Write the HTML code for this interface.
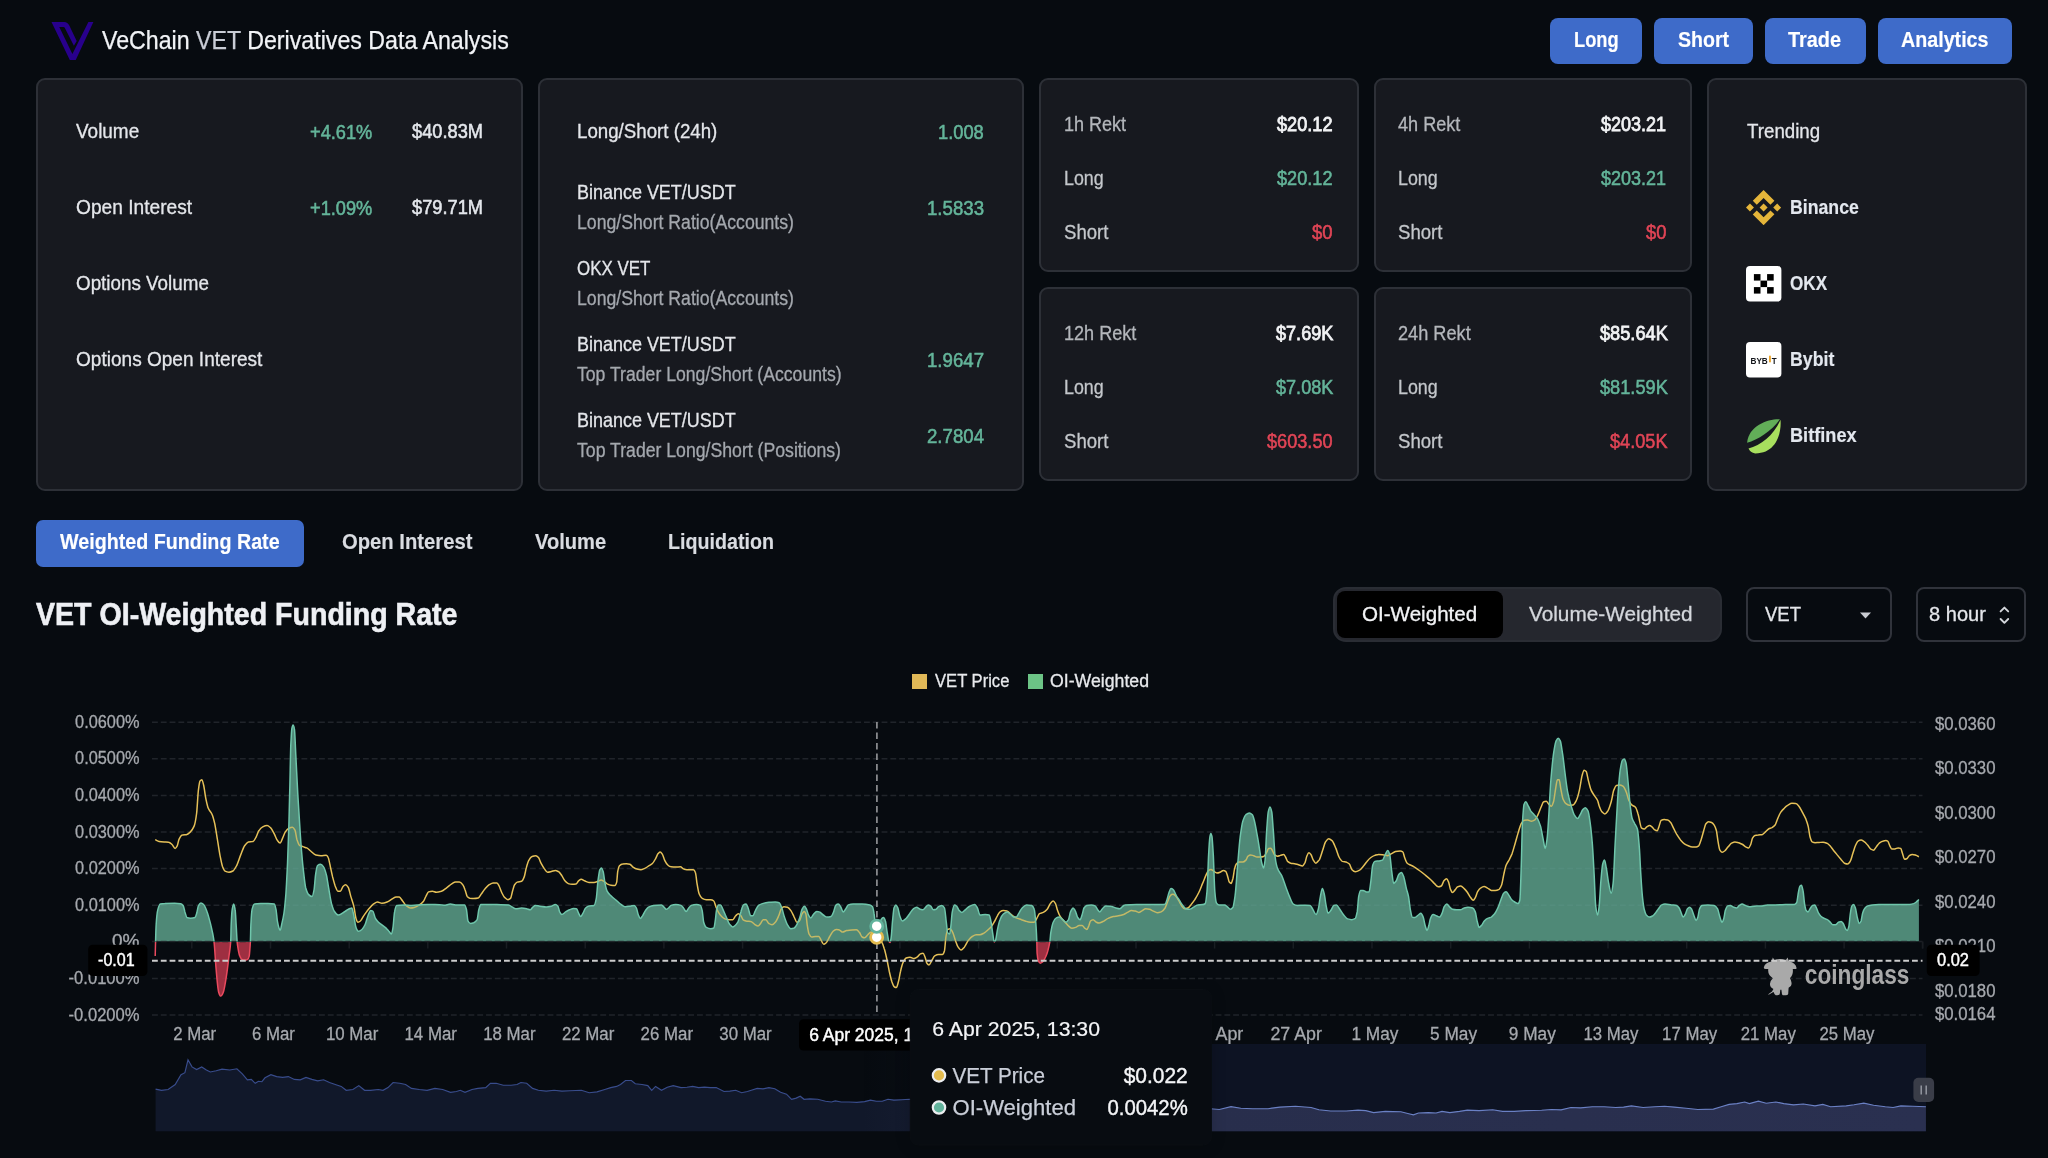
<!DOCTYPE html>
<html lang="en"><head><meta charset="utf-8"><title>VeChain VET Derivatives Data Analysis</title>
<style>
html,body{margin:0;padding:0;background:#070b10}
body{width:2048px;height:1158px;overflow:hidden;background:#070b10;position:relative;font-family:'Liberation Sans',sans-serif;color:#e8eaed}
.t{position:absolute;white-space:pre;line-height:normal;transform-origin:0 0;display:block;margin:0;text-decoration:none}
.card{position:absolute;box-sizing:border-box;background:#17191f;border:2px solid #2d3037;border-radius:9px}
.btn{position:absolute;background:#3e6bc9;border-radius:8px;border:0;padding:0;margin:0;font-family:inherit;display:block}
.seg{position:absolute;background:#25272e;border-radius:13px;box-sizing:border-box;border:2px solid #2a2d34}
.segon{position:absolute;background:#000;border-radius:8px}
.sel{position:absolute;border:2px solid #30333b;border-radius:8px;box-sizing:border-box}
.lg{position:absolute;width:15px;height:14.8px}
.icon{position:absolute}
</style></head><body>
<div id="app" style="position:absolute;left:0;top:0;width:2048px;height:1158px;will-change:transform">
<header>
<svg class="icon" style="left:48px;top:18px" width="50" height="46" viewBox="48 18 50 46"><path fill="#28008c" d="M51.5,22 H64.3 Q67.5,22 69.3,25.5 L76.7,41.1 L73.9,45.8 L64.6,27.6 Q64.2,27.1 63.4,27.1 H59.3 L72.4,54 L88.4,22 H93.4 L75.75,60 H69.8 Z"/></svg>
<h1 class="t" style="margin:0;font-weight:400;left:102.2px;top:26.1px;font-size:25.2px;color:#f1f3f6;-webkit-text-stroke:0.25px;transform:scaleX(0.9205)">VeChain <span style="color:#c9cdd6">VET</span> Derivatives Data Analysis</h1>
<button class="btn" style="left:1550.2px;top:17.7px;width:92.1px;height:46.5px;"><span class="t" style="left:24.1px;top:10.2px;font-size:21.4px;font-weight:700;color:#ffffff;-webkit-text-stroke:0.15px;transform:scaleX(0.8552)">Long</span></button>
<button class="btn" style="left:1654px;top:17.7px;width:99px;height:46.5px;"><span class="t" style="left:24.2px;top:10.2px;font-size:21.4px;font-weight:700;color:#ffffff;-webkit-text-stroke:0.15px;transform:scaleX(0.9148)">Short</span></button>
<button class="btn" style="left:1764.7px;top:17.7px;width:101.2px;height:46.5px;"><span class="t" style="left:23.8px;top:10.2px;font-size:21.4px;font-weight:700;color:#ffffff;-webkit-text-stroke:0.15px;transform:scaleX(0.9303)">Trade</span></button>
<button class="btn" style="left:1877.5px;top:17.7px;width:134.5px;height:46.5px;"><span class="t" style="left:23.3px;top:10.2px;font-size:21.4px;font-weight:700;color:#ffffff;-webkit-text-stroke:0.15px;transform:scaleX(0.9200)">Analytics</span></button>
</header>
<section>
<div class="card" style="left:36px;top:78px;width:486.5px;height:412.5px;"><span class="t" style="left:37.6px;top:39.6px;font-size:20.3px;font-weight:400;color:#e4e6ea;-webkit-text-stroke:0.3px;transform:scaleX(0.9341)">Volume</span><span class="t" style="left:272.0px;top:40.5px;font-size:20.3px;font-weight:400;color:#64b59a;-webkit-text-stroke:0.55px;transform:scaleX(0.8982)">+4.61%</span><span class="t" style="left:373.6px;top:40.0px;font-size:20.3px;font-weight:400;color:#e4e7ec;-webkit-text-stroke:0.55px;transform:scaleX(0.8994)">$40.83M</span><span class="t" style="left:37.6px;top:115.6px;font-size:20.3px;font-weight:400;color:#e4e6ea;-webkit-text-stroke:0.3px;transform:scaleX(0.9447)">Open Interest</span><span class="t" style="left:272.0px;top:116.5px;font-size:20.3px;font-weight:400;color:#64b59a;-webkit-text-stroke:0.55px;transform:scaleX(0.8982)">+1.09%</span><span class="t" style="left:373.6px;top:116.0px;font-size:20.3px;font-weight:400;color:#e4e7ec;-webkit-text-stroke:0.55px;transform:scaleX(0.8994)">$79.71M</span><span class="t" style="left:37.6px;top:191.6px;font-size:20.3px;font-weight:400;color:#e4e6ea;-webkit-text-stroke:0.3px;transform:scaleX(0.9282)">Options Volume</span><span class="t" style="left:37.6px;top:267.6px;font-size:20.3px;font-weight:400;color:#e4e6ea;-webkit-text-stroke:0.3px;transform:scaleX(0.9394)">Options Open Interest</span></div>
<div class="card" style="left:537.5px;top:78px;width:486.5px;height:412.5px;"><span class="t" style="left:37.5px;top:39.6px;font-size:20.3px;font-weight:400;color:#e4e6ea;-webkit-text-stroke:0.3px;transform:scaleX(0.9217)">Long/Short (24h)</span><span class="t" style="left:398.8px;top:40.5px;font-size:20.3px;font-weight:400;color:#64b59a;-webkit-text-stroke:0.55px;transform:scaleX(0.9022)">1.008</span><span class="t" style="left:37.5px;top:100.8px;font-size:20.3px;font-weight:400;color:#e4e6ea;-webkit-text-stroke:0.3px;transform:scaleX(0.8855)">Binance VET/USDT</span><span class="t" style="left:37.5px;top:130.8px;font-size:19.6px;font-weight:400;color:#a4a8ae;-webkit-text-stroke:0.3px;transform:scaleX(0.9015)">Long/Short Ratio(Accounts)</span><span class="t" style="left:387.5px;top:116.5px;font-size:20.3px;font-weight:400;color:#64b59a;-webkit-text-stroke:0.55px;transform:scaleX(0.9187)">1.5833</span><span class="t" style="left:37.5px;top:176.8px;font-size:20.3px;font-weight:400;color:#e4e6ea;-webkit-text-stroke:0.3px;transform:scaleX(0.8348)">OKX VET</span><span class="t" style="left:37.5px;top:206.8px;font-size:19.6px;font-weight:400;color:#a4a8ae;-webkit-text-stroke:0.3px;transform:scaleX(0.9015)">Long/Short Ratio(Accounts)</span><span class="t" style="left:37.5px;top:252.8px;font-size:20.3px;font-weight:400;color:#e4e6ea;-webkit-text-stroke:0.3px;transform:scaleX(0.8855)">Binance VET/USDT</span><span class="t" style="left:37.5px;top:282.8px;font-size:19.6px;font-weight:400;color:#a4a8ae;-webkit-text-stroke:0.3px;transform:scaleX(0.8998)">Top Trader Long/Short (Accounts)</span><span class="t" style="left:387.5px;top:268.5px;font-size:20.3px;font-weight:400;color:#64b59a;-webkit-text-stroke:0.55px;transform:scaleX(0.9187)">1.9647</span><span class="t" style="left:37.5px;top:328.8px;font-size:20.3px;font-weight:400;color:#e4e6ea;-webkit-text-stroke:0.3px;transform:scaleX(0.8855)">Binance VET/USDT</span><span class="t" style="left:37.5px;top:358.8px;font-size:19.6px;font-weight:400;color:#a4a8ae;-webkit-text-stroke:0.3px;transform:scaleX(0.9011)">Top Trader Long/Short (Positions)</span><span class="t" style="left:387.5px;top:344.5px;font-size:20.3px;font-weight:400;color:#64b59a;-webkit-text-stroke:0.55px;transform:scaleX(0.9187)">2.7804</span></div>
<div class="card" style="left:1039px;top:78px;width:319.5px;height:193.7px;"><span class="t" style="left:23.2px;top:32.6px;font-size:20.3px;font-weight:400;color:#b4b7bc;-webkit-text-stroke:0.3px;transform:scaleX(0.8883)">1h Rekt</span><span class="t" style="left:236.3px;top:32.6px;font-size:20.3px;font-weight:400;color:#f2f3f5;-webkit-text-stroke:0.8px;transform:scaleX(0.8945)">$20.12</span><span class="t" style="left:23.2px;top:86.8px;font-size:20.3px;font-weight:400;color:#c4c7cb;-webkit-text-stroke:0.3px;transform:scaleX(0.8798)">Long</span><span class="t" style="left:236.3px;top:86.8px;font-size:20.3px;font-weight:400;color:#64b59a;-webkit-text-stroke:0.55px;transform:scaleX(0.8945)">$20.12</span><span class="t" style="left:23.2px;top:140.9px;font-size:20.3px;font-weight:400;color:#c4c7cb;-webkit-text-stroke:0.3px;transform:scaleX(0.9158)">Short</span><span class="t" style="left:271.2px;top:140.9px;font-size:20.3px;font-weight:400;color:#e14556;-webkit-text-stroke:0.55px;transform:scaleX(0.9130)">$0</span></div>
<div class="card" style="left:1373.5px;top:78px;width:318.7px;height:193.7px;"><span class="t" style="left:22.4px;top:32.6px;font-size:20.3px;font-weight:400;color:#b4b7bc;-webkit-text-stroke:0.3px;transform:scaleX(0.8926)">4h Rekt</span><span class="t" style="left:225.9px;top:32.6px;font-size:20.3px;font-weight:400;color:#f2f3f5;-webkit-text-stroke:0.8px;transform:scaleX(0.8880)">$203.21</span><span class="t" style="left:22.4px;top:86.8px;font-size:20.3px;font-weight:400;color:#c4c7cb;-webkit-text-stroke:0.3px;transform:scaleX(0.8798)">Long</span><span class="t" style="left:225.9px;top:86.8px;font-size:20.3px;font-weight:400;color:#64b59a;-webkit-text-stroke:0.55px;transform:scaleX(0.8880)">$203.21</span><span class="t" style="left:22.4px;top:140.9px;font-size:20.3px;font-weight:400;color:#c4c7cb;-webkit-text-stroke:0.3px;transform:scaleX(0.9158)">Short</span><span class="t" style="left:270.5px;top:140.9px;font-size:20.3px;font-weight:400;color:#e14556;-webkit-text-stroke:0.55px;transform:scaleX(0.9086)">$0</span></div>
<div class="card" style="left:1039px;top:287.4px;width:319.5px;height:193.7px;"><span class="t" style="left:23.2px;top:32.6px;font-size:20.3px;font-weight:400;color:#b4b7bc;-webkit-text-stroke:0.3px;transform:scaleX(0.8918)">12h Rekt</span><span class="t" style="left:234.7px;top:32.6px;font-size:20.3px;font-weight:400;color:#f2f3f5;-webkit-text-stroke:0.8px;transform:scaleX(0.8914)">$7.69K</span><span class="t" style="left:23.2px;top:86.8px;font-size:20.3px;font-weight:400;color:#c4c7cb;-webkit-text-stroke:0.3px;transform:scaleX(0.8798)">Long</span><span class="t" style="left:234.7px;top:86.8px;font-size:20.3px;font-weight:400;color:#64b59a;-webkit-text-stroke:0.55px;transform:scaleX(0.8914)">$7.08K</span><span class="t" style="left:23.2px;top:140.9px;font-size:20.3px;font-weight:400;color:#c4c7cb;-webkit-text-stroke:0.3px;transform:scaleX(0.9158)">Short</span><span class="t" style="left:226.4px;top:140.9px;font-size:20.3px;font-weight:400;color:#e14556;-webkit-text-stroke:0.55px;transform:scaleX(0.8948)">$603.50</span></div>
<div class="card" style="left:1373.5px;top:287.4px;width:318.7px;height:193.7px;"><span class="t" style="left:22.4px;top:32.6px;font-size:20.3px;font-weight:400;color:#b4b7bc;-webkit-text-stroke:0.3px;transform:scaleX(0.8955)">24h Rekt</span><span class="t" style="left:224.2px;top:32.6px;font-size:20.3px;font-weight:400;color:#f2f3f5;-webkit-text-stroke:0.8px;transform:scaleX(0.8973)">$85.64K</span><span class="t" style="left:22.4px;top:86.8px;font-size:20.3px;font-weight:400;color:#c4c7cb;-webkit-text-stroke:0.3px;transform:scaleX(0.8798)">Long</span><span class="t" style="left:224.2px;top:86.8px;font-size:20.3px;font-weight:400;color:#64b59a;-webkit-text-stroke:0.55px;transform:scaleX(0.8973)">$81.59K</span><span class="t" style="left:22.4px;top:140.9px;font-size:20.3px;font-weight:400;color:#c4c7cb;-webkit-text-stroke:0.3px;transform:scaleX(0.9158)">Short</span><span class="t" style="left:234.5px;top:140.9px;font-size:20.3px;font-weight:400;color:#e14556;-webkit-text-stroke:0.55px;transform:scaleX(0.8945)">$4.05K</span></div>
<div class="card" style="left:1707.3px;top:78px;width:319.6px;height:412.5px;"><span class="t" style="left:37.5px;top:39.6px;font-size:20.3px;font-weight:400;color:#e4e6ea;-webkit-text-stroke:0.3px;transform:scaleX(0.9231)">Trending</span><span class="t" style="left:80.4px;top:115.8px;font-size:19.8px;font-weight:700;color:#e3e7ee;-webkit-text-stroke:0.15px;transform:scaleX(0.8941)">Binance</span><span class="t" style="left:80.4px;top:191.9px;font-size:19.8px;font-weight:700;color:#e3e7ee;-webkit-text-stroke:0.15px;transform:scaleX(0.8653)">OKX</span><span class="t" style="left:80.4px;top:268.0px;font-size:19.8px;font-weight:700;color:#e3e7ee;-webkit-text-stroke:0.15px;transform:scaleX(0.8958)">Bybit</span><span class="t" style="left:80.4px;top:343.8px;font-size:19.8px;font-weight:700;color:#e3e7ee;-webkit-text-stroke:0.15px;transform:scaleX(0.9180)">Bitfinex</span><svg class="icon" style="left:36.9px;top:110.1px" width="35.2" height="35.2" viewBox="0 0 126.61 126.61"><path fill="#e5b53a" d="M38.73 53.2l24.59-24.58 24.6 24.6 14.3-14.31L63.32 0 24.43 38.9zM0 63.31l14.3-14.31 14.31 14.31-14.31 14.3zM38.73 73.41l24.59 24.59 24.6-24.6 14.31 14.29-38.9 38.91-38.91-38.88zM98 63.31l14.3-14.31 14.31 14.3-14.31 14.32zM77.83 63.3L63.32 48.78 52.59 59.51l-1.24 1.23-2.54 2.54 14.51 14.5 14.51-14.47z"/></svg><svg class="icon" style="left:36.9px;top:186.2px" width="35.4" height="35.6" viewBox="0 0 35.4 35.6"><rect width="35.4" height="35.6" rx="4" fill="#fff"/><g fill="#000"><rect x="7.9" y="8.1" width="6.6" height="6.5"/><rect x="21.1" y="8.1" width="6.6" height="6.5"/><rect x="14.5" y="14.6" width="6.6" height="6.5"/><rect x="7.9" y="21.1" width="6.6" height="6.5"/><rect x="21.1" y="21.1" width="6.6" height="6.5"/></g></svg><svg class="icon" style="left:36.9px;top:262.3px" width="35.4" height="35.4" viewBox="0 0 35.4 35.4" font-family="'Liberation Sans',sans-serif"><rect width="35.4" height="35.4" rx="4" fill="#fff"/><text x="4.5" y="22.3" font-size="9.9" font-weight="700" fill="#121419" textLength="17.3" lengthAdjust="spacingAndGlyphs">BYB</text><rect x="23" y="13.7" width="1.9" height="6.6" fill="#eba52c"/><text x="25.7" y="22.3" font-size="9.9" font-weight="700" fill="#121419" textLength="4.9" lengthAdjust="spacingAndGlyphs">T</text></svg><svg class="icon" style="left:35.7px;top:337.0px" width="38" height="39" viewBox="1745 417 38 39"><path fill="#62ae58" d="M1779.9,419.3 C1768.7,418.7 1748.5,425.4 1747.1,442.8 C1757.5,440 1772,431 1779.9,419.3Z"/><path fill="#a8df5e" d="M1780.5,419.8 C1781.6,431 1777.7,453.5 1755.2,453.5 C1751.8,452.9 1749.6,450.7 1748.5,448.4 C1760.8,445.6 1774.3,434.4 1780.5,419.8Z"/></svg></div>
</section>
<nav>
<button class="btn" style="left:36px;top:519.5px;width:267.6px;height:47px;border-radius:7px"><span class="t" style="left:23.8px;top:10.8px;font-size:21.2px;font-weight:700;color:#ffffff;-webkit-text-stroke:0.15px;transform:scaleX(0.9298)">Weighted Funding Rate</span></button>
<a class="t" style="left:341.9px;top:530.3px;font-size:21.2px;font-weight:700;color:#d9dce1;-webkit-text-stroke:0.15px;transform:scaleX(0.9548)">Open Interest</a>
<a class="t" style="left:534.8px;top:530.3px;font-size:21.2px;font-weight:700;color:#d9dce1;-webkit-text-stroke:0.15px;transform:scaleX(0.9499)">Volume</a>
<a class="t" style="left:668.4px;top:530.3px;font-size:21.2px;font-weight:700;color:#d9dce1;-webkit-text-stroke:0.15px;transform:scaleX(0.9277)">Liquidation</a>
</nav>
<main>
<h2 class="t" style="left:36.4px;top:597.2px;font-size:31.4px;font-weight:700;color:#eef0f4;-webkit-text-stroke:0.6px;transform:scaleX(0.9098)">VET OI-Weighted Funding Rate</h2>
<div class="seg" style="left:1333.2px;top:586.7px;width:389.2px;height:55.8px;"><span class="t" style="left:193.5px;top:13.5px;font-size:21px;font-weight:400;color:#d4d7dc;-webkit-text-stroke:0.3px;transform:scaleX(0.9887)">Volume-Weighted</span></div>
<div class="segon" style="left:1337px;top:591.4px;width:166.4px;height:46.9px;"><span class="t" style="left:25.3px;top:10.8px;font-size:21px;font-weight:400;color:#f2f3f5;-webkit-text-stroke:0.3px;transform:scaleX(0.9804)">OI-Weighted</span></div>
<div class="sel" style="left:1746.2px;top:587.4px;width:145.4px;height:54.4px;"><span class="t" style="left:16.8px;top:12.8px;font-size:21px;font-weight:400;color:#e4e6ea;-webkit-text-stroke:0.3px;transform:scaleX(0.8814)">VET</span><svg class="icon" style="left:109.8px;top:20.6px" width="16" height="10" viewBox="0 0 16 10"><path d="M2,2.6 H13 L7.5,8.4Z" fill="#c9ccd2"/></svg></div>
<div class="sel" style="left:1916.2px;top:587.4px;width:110.2px;height:54.4px;"><span class="t" style="left:11.1px;top:12.8px;font-size:21px;font-weight:400;color:#e4e6ea;-webkit-text-stroke:0.3px;transform:scaleX(0.9555)">8 hour</span><svg class="icon" style="left:78.8px;top:14.6px" width="15" height="23" viewBox="0 0 15 23"><path d="M3.6,7.4 L7.4,3.6 L11.2,7.4 M3.6,15 L7.4,18.8 L11.2,15" fill="none" stroke="#d4d7dc" stroke-width="1.9" stroke-linecap="round" stroke-linejoin="round"/></svg></div>
<div class="lg" style="left:912.2px;top:674px;background:#e0b857"></div><span class="t" style="left:934.5px;top:670.2px;font-size:18.8px;font-weight:400;color:#e8eaed;-webkit-text-stroke:0.3px;transform:scaleX(0.8836)">VET Price</span><div class="lg" style="left:1028px;top:674px;background:#6cc486"></div><span class="t" style="left:1050.2px;top:670.2px;font-size:18.8px;font-weight:400;color:#e8eaed;-webkit-text-stroke:0.3px;transform:scaleX(0.9420)">OI-Weighted</span>
<svg id="chart" width="2048" height="1158" viewBox="0 0 2048 1158" style="position:absolute;left:0;top:0" font-family="'Liberation Sans',sans-serif">
<defs><clipPath id="cu"><rect x="0" y="700" width="2048" height="241.60000000000002"/></clipPath><clipPath id="cd"><rect x="0" y="942.0" width="2048" height="120"/></clipPath><linearGradient id="fg" gradientUnits="userSpaceOnUse" x1="155.5" x2="1926" y1="0" y2="0"><stop offset="0" stop-color="#0d1323" stop-opacity="0"/><stop offset="0.40" stop-color="#0d1323" stop-opacity="0"/><stop offset="0.596" stop-color="#0d1323" stop-opacity="1"/><stop offset="1" stop-color="#0d1323" stop-opacity="1"/></linearGradient><linearGradient id="fa" gradientUnits="userSpaceOnUse" x1="155.5" x2="1926" y1="0" y2="0"><stop offset="0" stop-color="#11182a"/><stop offset="0.40" stop-color="#11182a"/><stop offset="0.596" stop-color="#282e4c"/><stop offset="1" stop-color="#2a3050"/></linearGradient><linearGradient id="fl" gradientUnits="userSpaceOnUse" x1="155.5" x2="1926" y1="0" y2="0"><stop offset="0" stop-color="#384c8c"/><stop offset="0.40" stop-color="#384c8c"/><stop offset="0.596" stop-color="#6a80c4"/><stop offset="1" stop-color="#6a80c4"/></linearGradient><filter id="sh" x="-10%" y="-20%" width="120%" height="140%"><feGaussianBlur stdDeviation="8"/></filter></defs>
<line x1="152" x2="1922.5" y1="722.2" y2="722.2" stroke="#20242a" stroke-width="1.5" stroke-dasharray="5.86 2.93"/>
<line x1="152" x2="1922.5" y1="758.8" y2="758.8" stroke="#20242a" stroke-width="1.5" stroke-dasharray="5.86 2.93"/>
<line x1="152" x2="1922.5" y1="795.4" y2="795.4" stroke="#20242a" stroke-width="1.5" stroke-dasharray="5.86 2.93"/>
<line x1="152" x2="1922.5" y1="832.0" y2="832.0" stroke="#20242a" stroke-width="1.5" stroke-dasharray="5.86 2.93"/>
<line x1="152" x2="1922.5" y1="868.6" y2="868.6" stroke="#20242a" stroke-width="1.5" stroke-dasharray="5.86 2.93"/>
<line x1="152" x2="1922.5" y1="905.2" y2="905.2" stroke="#20242a" stroke-width="1.5" stroke-dasharray="5.86 2.93"/>
<line x1="152" x2="1922.5" y1="978.4" y2="978.4" stroke="#20242a" stroke-width="1.5" stroke-dasharray="5.86 2.93"/>
<line x1="152" x2="1922.5" y1="1015.0" y2="1015.0" stroke="#20242a" stroke-width="1.5" stroke-dasharray="5.86 2.93"/>
<text x="139.5" y="727.8" text-anchor="end" font-size="18.3" stroke="#a6a9ae" stroke-width="0.3" fill="#a6a9ae" textLength="64.4" lengthAdjust="spacingAndGlyphs">0.0600%</text>
<text x="139.5" y="764.4" text-anchor="end" font-size="18.3" stroke="#a6a9ae" stroke-width="0.3" fill="#a6a9ae" textLength="64.4" lengthAdjust="spacingAndGlyphs">0.0500%</text>
<text x="139.5" y="801.0" text-anchor="end" font-size="18.3" stroke="#a6a9ae" stroke-width="0.3" fill="#a6a9ae" textLength="64.4" lengthAdjust="spacingAndGlyphs">0.0400%</text>
<text x="139.5" y="837.6" text-anchor="end" font-size="18.3" stroke="#a6a9ae" stroke-width="0.3" fill="#a6a9ae" textLength="64.4" lengthAdjust="spacingAndGlyphs">0.0300%</text>
<text x="139.5" y="874.2" text-anchor="end" font-size="18.3" stroke="#a6a9ae" stroke-width="0.3" fill="#a6a9ae" textLength="64.4" lengthAdjust="spacingAndGlyphs">0.0200%</text>
<text x="139.5" y="910.8" text-anchor="end" font-size="18.3" stroke="#a6a9ae" stroke-width="0.3" fill="#a6a9ae" textLength="64.4" lengthAdjust="spacingAndGlyphs">0.0100%</text>
<text x="139.5" y="947.4" text-anchor="end" font-size="18.3" stroke="#a6a9ae" stroke-width="0.3" fill="#a6a9ae" textLength="27.5" lengthAdjust="spacingAndGlyphs">0%</text>
<text x="139.5" y="984.0" text-anchor="end" font-size="18.3" stroke="#a6a9ae" stroke-width="0.3" fill="#a6a9ae" textLength="70.9" lengthAdjust="spacingAndGlyphs">-0.0100%</text>
<text x="139.5" y="1020.6" text-anchor="end" font-size="18.3" stroke="#a6a9ae" stroke-width="0.3" fill="#a6a9ae" textLength="70.9" lengthAdjust="spacingAndGlyphs">-0.0200%</text>
<text x="1934.9" y="729.7" font-size="18.3" fill="#a6a9ae" stroke="#a6a9ae" stroke-width="0.3" textLength="60.6" lengthAdjust="spacingAndGlyphs">$0.0360</text>
<text x="1934.9" y="774.2" font-size="18.3" fill="#a6a9ae" stroke="#a6a9ae" stroke-width="0.3" textLength="60.6" lengthAdjust="spacingAndGlyphs">$0.0330</text>
<text x="1934.9" y="818.7" font-size="18.3" fill="#a6a9ae" stroke="#a6a9ae" stroke-width="0.3" textLength="60.6" lengthAdjust="spacingAndGlyphs">$0.0300</text>
<text x="1934.9" y="863.2" font-size="18.3" fill="#a6a9ae" stroke="#a6a9ae" stroke-width="0.3" textLength="60.6" lengthAdjust="spacingAndGlyphs">$0.0270</text>
<text x="1934.9" y="907.7" font-size="18.3" fill="#a6a9ae" stroke="#a6a9ae" stroke-width="0.3" textLength="60.6" lengthAdjust="spacingAndGlyphs">$0.0240</text>
<text x="1934.9" y="952.2" font-size="18.3" fill="#a6a9ae" stroke="#a6a9ae" stroke-width="0.3" textLength="60.6" lengthAdjust="spacingAndGlyphs">$0.0210</text>
<text x="1934.9" y="996.7" font-size="18.3" fill="#a6a9ae" stroke="#a6a9ae" stroke-width="0.3" textLength="60.6" lengthAdjust="spacingAndGlyphs">$0.0180</text>
<text x="1934.9" y="1020.4" font-size="18.3" fill="#a6a9ae" stroke="#a6a9ae" stroke-width="0.3" textLength="60.6" lengthAdjust="spacingAndGlyphs">$0.0164</text>
<text x="194.7" y="1040.4" text-anchor="middle" font-size="18.3" fill="#a6a9ae" stroke="#a6a9ae" stroke-width="0.3" textLength="43" lengthAdjust="spacingAndGlyphs">2 Mar</text>
<text x="273.4" y="1040.4" text-anchor="middle" font-size="18.3" fill="#a6a9ae" stroke="#a6a9ae" stroke-width="0.3" textLength="43" lengthAdjust="spacingAndGlyphs">6 Mar</text>
<text x="352.1" y="1040.4" text-anchor="middle" font-size="18.3" fill="#a6a9ae" stroke="#a6a9ae" stroke-width="0.3" textLength="52.4" lengthAdjust="spacingAndGlyphs">10 Mar</text>
<text x="430.7" y="1040.4" text-anchor="middle" font-size="18.3" fill="#a6a9ae" stroke="#a6a9ae" stroke-width="0.3" textLength="52.4" lengthAdjust="spacingAndGlyphs">14 Mar</text>
<text x="509.4" y="1040.4" text-anchor="middle" font-size="18.3" fill="#a6a9ae" stroke="#a6a9ae" stroke-width="0.3" textLength="52.4" lengthAdjust="spacingAndGlyphs">18 Mar</text>
<text x="588.1" y="1040.4" text-anchor="middle" font-size="18.3" fill="#a6a9ae" stroke="#a6a9ae" stroke-width="0.3" textLength="52.4" lengthAdjust="spacingAndGlyphs">22 Mar</text>
<text x="666.8" y="1040.4" text-anchor="middle" font-size="18.3" fill="#a6a9ae" stroke="#a6a9ae" stroke-width="0.3" textLength="52.4" lengthAdjust="spacingAndGlyphs">26 Mar</text>
<text x="745.5" y="1040.4" text-anchor="middle" font-size="18.3" fill="#a6a9ae" stroke="#a6a9ae" stroke-width="0.3" textLength="52.4" lengthAdjust="spacingAndGlyphs">30 Mar</text>
<text x="824.1" y="1040.4" text-anchor="middle" font-size="18.3" fill="#a6a9ae" stroke="#a6a9ae" stroke-width="0.3" textLength="42" lengthAdjust="spacingAndGlyphs">3 Apr</text>
<text x="902.8" y="1040.4" text-anchor="middle" font-size="18.3" fill="#a6a9ae" stroke="#a6a9ae" stroke-width="0.3" textLength="42" lengthAdjust="spacingAndGlyphs">7 Apr</text>
<text x="981.5" y="1040.4" text-anchor="middle" font-size="18.3" fill="#a6a9ae" stroke="#a6a9ae" stroke-width="0.3" textLength="51.5" lengthAdjust="spacingAndGlyphs">11 Apr</text>
<text x="1060.2" y="1040.4" text-anchor="middle" font-size="18.3" fill="#a6a9ae" stroke="#a6a9ae" stroke-width="0.3" textLength="51.5" lengthAdjust="spacingAndGlyphs">15 Apr</text>
<text x="1138.9" y="1040.4" text-anchor="middle" font-size="18.3" fill="#a6a9ae" stroke="#a6a9ae" stroke-width="0.3" textLength="51.5" lengthAdjust="spacingAndGlyphs">19 Apr</text>
<text x="1217.5" y="1040.4" text-anchor="middle" font-size="18.3" fill="#a6a9ae" stroke="#a6a9ae" stroke-width="0.3" textLength="51.5" lengthAdjust="spacingAndGlyphs">23 Apr</text>
<text x="1296.2" y="1040.4" text-anchor="middle" font-size="18.3" fill="#a6a9ae" stroke="#a6a9ae" stroke-width="0.3" textLength="51.5" lengthAdjust="spacingAndGlyphs">27 Apr</text>
<text x="1374.9" y="1040.4" text-anchor="middle" font-size="18.3" fill="#a6a9ae" stroke="#a6a9ae" stroke-width="0.3" textLength="47" lengthAdjust="spacingAndGlyphs">1 May</text>
<text x="1453.6" y="1040.4" text-anchor="middle" font-size="18.3" fill="#a6a9ae" stroke="#a6a9ae" stroke-width="0.3" textLength="47" lengthAdjust="spacingAndGlyphs">5 May</text>
<text x="1532.3" y="1040.4" text-anchor="middle" font-size="18.3" fill="#a6a9ae" stroke="#a6a9ae" stroke-width="0.3" textLength="47" lengthAdjust="spacingAndGlyphs">9 May</text>
<text x="1610.9" y="1040.4" text-anchor="middle" font-size="18.3" fill="#a6a9ae" stroke="#a6a9ae" stroke-width="0.3" textLength="55" lengthAdjust="spacingAndGlyphs">13 May</text>
<text x="1689.6" y="1040.4" text-anchor="middle" font-size="18.3" fill="#a6a9ae" stroke="#a6a9ae" stroke-width="0.3" textLength="55" lengthAdjust="spacingAndGlyphs">17 May</text>
<text x="1768.3" y="1040.4" text-anchor="middle" font-size="18.3" fill="#a6a9ae" stroke="#a6a9ae" stroke-width="0.3" textLength="55" lengthAdjust="spacingAndGlyphs">21 May</text>
<text x="1847.0" y="1040.4" text-anchor="middle" font-size="18.3" fill="#a6a9ae" stroke="#a6a9ae" stroke-width="0.3" textLength="55" lengthAdjust="spacingAndGlyphs">25 May</text>
<g clip-path="url(#cu)"><path d="M155.2,955.9C155.5,945.3 155.8,928.8 156.2,924.1C156.7,915.9 157.3,911.5 157.9,909.4C158.7,906.4 159.5,904.2 160.3,904.0C161.8,903.6 163.3,903.5 164.8,903.5C168.0,903.3 171.3,903.2 174.6,903.2C176.7,903.2 178.7,903.4 180.8,903.7C181.6,903.9 182.4,904.6 183.2,905.7C183.8,906.5 184.4,910.0 184.9,911.9C185.6,913.9 186.3,917.2 186.9,917.5C188.1,918.0 189.4,918.2 190.6,918.2C192.1,918.2 193.6,918.0 195.0,917.5C195.6,917.3 196.2,914.9 196.8,913.1C197.3,911.2 197.9,906.7 198.5,905.7C199.3,904.2 200.1,903.0 200.9,903.0C201.8,903.0 202.7,903.7 203.6,904.5C204.8,905.4 205.9,908.8 207.1,911.9C208.2,914.7 209.2,918.7 210.3,922.9C211.1,926.1 211.9,929.7 212.8,934.0C213.2,936.1 213.6,938.1 214.0,941.4C214.7,946.9 215.4,961.4 216.1,968.9C216.9,978.2 217.8,989.6 218.7,992.2C219.3,994.3 220.0,996.1 220.7,996.1C221.6,996.1 222.5,994.2 223.3,992.2C224.4,989.6 225.6,981.3 226.7,974.1C227.5,969.1 228.2,962.3 229.0,955.9C229.6,951.3 230.1,950.1 230.7,941.4C230.9,938.8 231.0,927.7 231.2,924.1C231.5,916.9 231.9,911.4 232.2,909.4C232.7,906.4 233.2,904.0 233.7,904.0C234.2,904.0 234.6,906.4 235.1,909.4C235.5,911.4 235.8,918.9 236.1,924.1C236.5,929.5 236.8,937.9 237.1,941.4C237.4,944.8 237.8,946.8 238.1,948.8C238.6,951.6 239.1,954.4 239.6,955.6C240.2,957.4 240.9,958.7 241.5,959.1C242.6,959.7 243.7,960.1 244.7,960.1C245.7,960.1 246.7,959.8 247.7,959.3C248.2,959.1 248.7,958.0 249.2,956.1C249.4,955.2 249.7,951.8 249.9,948.8C250.1,946.8 250.2,944.8 250.4,941.4C250.6,937.9 250.7,927.3 250.9,924.1C251.3,916.3 251.7,911.0 252.1,909.4C252.9,906.1 253.8,904.1 254.6,904.0C256.6,903.6 258.7,903.5 260.7,903.5C263.2,903.5 265.7,903.5 268.1,903.5C270.2,903.5 272.2,903.6 274.3,904.0C274.8,904.1 275.4,906.7 276.0,909.4C276.5,911.7 277.0,919.2 277.5,921.7C278.2,925.5 278.9,928.8 279.7,929.6C279.9,929.8 280.1,930.0 280.3,930.0C280.8,930.0 281.4,925.8 281.9,923.4C282.6,920.5 283.2,917.9 283.9,913.5C284.6,909.1 285.2,902.4 285.9,893.7C286.4,886.7 286.9,875.9 287.5,863.9C287.9,853.3 288.4,839.8 288.9,824.2C289.2,813.1 289.5,797.7 289.9,784.5C290.2,771.2 290.5,752.3 290.8,744.8C291.2,737.2 291.5,730.8 291.8,728.9C292.2,726.7 292.6,724.9 293.0,724.9C293.5,724.9 294.0,726.6 294.4,728.9C294.9,731.2 295.3,745.8 295.8,754.7C296.5,767.4 297.1,782.7 297.8,794.4C298.5,806.2 299.1,816.3 299.8,826.2C300.4,836.0 301.1,846.3 301.8,854.0C302.4,861.7 303.1,868.3 303.8,873.8C304.4,879.2 305.1,885.3 305.7,887.7C306.7,891.3 307.7,893.7 308.7,894.6C309.8,895.7 311.0,896.6 312.1,896.6C312.7,896.6 313.4,893.2 314.1,889.7C314.6,886.9 315.1,877.0 315.7,873.8C316.3,869.8 317.0,866.0 317.6,865.5C318.6,864.7 319.6,864.3 320.6,864.3C321.6,864.3 322.6,865.5 323.6,866.9C324.6,868.2 325.6,871.7 326.6,875.8C327.2,878.5 327.9,884.0 328.6,887.7C329.6,893.3 330.5,900.1 331.5,903.6C332.5,907.1 333.5,910.2 334.5,911.5C335.8,913.4 337.2,915.1 338.5,915.1C339.8,915.1 341.1,913.9 342.5,913.1C343.8,912.4 345.1,911.3 346.4,910.5C347.6,909.8 348.8,909.0 350.0,908.5C350.6,908.3 351.2,908.0 351.8,908.0C352.4,908.0 353.0,911.9 353.6,914.5C354.4,917.8 355.2,925.6 356.0,927.4C356.8,929.5 357.7,931.3 358.6,931.3C359.7,931.3 360.8,930.4 361.9,929.5C363.0,928.7 364.0,926.9 365.0,924.8C366.1,922.6 367.3,916.9 368.4,914.5C369.2,912.8 369.9,910.6 370.7,910.6C371.4,910.6 372.1,910.8 372.8,911.1C373.7,911.5 374.5,916.9 375.4,918.4C376.4,920.2 377.5,921.3 378.5,922.2C379.6,923.3 380.7,924.0 381.9,924.8C383.0,925.7 384.1,926.5 385.2,927.4C386.3,928.3 387.3,929.5 388.3,930.5C389.4,931.6 390.4,933.9 391.4,933.9C392.0,933.9 392.5,930.5 393.0,927.4C393.5,924.4 394.0,914.4 394.6,911.9C395.2,908.5 395.9,905.5 396.6,905.4C399.2,905.0 401.8,904.9 404.4,904.9C406.8,904.9 409.2,905.4 411.7,905.4C414.2,905.4 416.8,905.1 419.4,904.9C422.0,904.7 424.6,904.4 427.2,904.4C429.8,904.4 432.4,904.4 435.0,904.4C438.0,904.4 441.0,905.2 444.0,905.2C446.1,905.2 448.3,904.1 450.4,904.1C452.1,904.1 453.8,904.9 455.5,904.9C458.6,904.9 461.6,904.9 464.6,904.9C465.2,904.9 465.8,907.1 466.4,909.3C466.9,911.2 467.5,920.0 468.0,921.0C468.8,922.6 469.7,923.5 470.6,923.5C471.6,923.5 472.6,923.2 473.7,922.8C474.8,922.3 475.9,921.6 477.1,919.7C477.7,918.6 478.3,911.3 478.9,909.3C479.6,907.0 480.2,904.7 480.9,904.6C482.8,904.4 484.7,904.4 486.6,904.4C490.1,904.4 493.5,904.6 497.0,904.6C500.9,904.7 504.8,904.7 508.6,904.9C509.9,905.0 511.2,906.5 512.5,907.2C513.6,907.8 514.6,908.8 515.6,908.8C517.6,908.8 519.6,908.0 521.6,908.0C523.3,908.0 525.1,908.4 526.8,908.8C527.9,909.0 529.0,909.8 530.2,909.8C531.0,909.8 531.9,907.9 532.8,907.2C533.6,906.5 534.5,905.4 535.3,905.4C536.8,905.4 538.3,906.0 539.7,906.2C541.9,906.5 544.1,907.0 546.2,907.0C547.9,907.0 549.7,906.6 551.4,906.2C552.7,905.9 554.0,904.6 555.3,904.6C556.1,904.6 557.0,905.3 557.9,906.2C558.5,906.8 559.1,910.8 559.7,911.9C560.4,913.1 561.1,914.5 561.8,914.5C563.1,914.5 564.4,912.7 565.6,911.9C566.9,911.1 568.2,910.4 569.5,909.8C570.8,909.3 572.1,908.5 573.4,908.5C574.5,908.5 575.5,908.6 576.5,908.8C577.2,908.9 577.9,911.9 578.6,913.2C579.3,914.5 580.0,916.5 580.7,916.5C581.4,916.5 582.2,914.5 583.0,913.2C583.9,911.8 584.7,908.8 585.6,908.0C586.7,906.9 587.8,906.1 589.0,905.9C590.7,905.6 592.4,905.8 594.1,905.4C594.8,905.3 595.5,902.3 596.2,898.9C596.8,896.0 597.4,885.3 598.0,880.8C598.6,876.3 599.2,871.2 599.8,869.9C600.4,868.8 600.9,867.9 601.4,867.9C602.0,867.9 602.6,869.8 603.2,871.7C603.8,873.7 604.4,880.5 605.0,883.4C605.7,886.7 606.4,889.8 607.1,891.2C608.4,893.7 609.7,894.5 611.0,895.8C612.7,897.6 614.4,898.8 616.2,900.2C617.9,901.7 619.6,903.5 621.4,904.6C622.6,905.5 623.9,906.7 625.2,906.7C627.0,906.7 628.7,906.4 630.4,906.2C631.7,906.0 633.0,905.4 634.3,905.4C635.0,905.4 635.7,906.7 636.4,908.0C637.0,909.1 637.6,913.0 638.2,914.5C638.9,916.2 639.6,918.4 640.3,918.4C641.0,918.4 641.8,916.8 642.6,915.8C643.5,914.5 644.5,911.9 645.4,910.6C646.5,909.2 647.5,907.8 648.5,907.2C650.3,906.3 652.0,905.6 653.7,905.4C656.3,905.1 658.9,904.9 661.5,904.9C662.4,904.9 663.2,906.4 664.1,907.2C664.8,907.9 665.5,909.3 666.2,909.3C666.9,909.3 667.7,908.6 668.5,908.0C669.4,907.4 670.2,905.7 671.1,905.4C672.6,904.9 674.2,904.6 675.8,904.6C677.5,904.6 679.2,904.9 680.9,905.4C681.8,905.7 682.7,907.0 683.5,908.0C684.4,909.0 685.2,911.4 686.1,911.4C687.0,911.4 687.8,909.0 688.7,908.0C689.6,907.0 690.4,905.7 691.3,905.4C693.0,904.9 694.8,904.6 696.5,904.6C697.8,904.6 699.1,904.9 700.4,905.4C701.0,905.7 701.6,908.1 702.2,910.6C702.7,912.8 703.2,920.5 703.7,922.2C704.6,925.1 705.5,927.0 706.3,927.4C707.8,928.2 709.3,928.7 710.7,928.7C711.8,928.7 712.8,928.5 713.8,928.0C714.4,927.7 714.9,923.0 715.4,919.7C715.8,916.9 716.2,910.9 716.7,909.3C717.3,907.0 717.9,904.9 718.5,904.9C719.2,904.9 719.9,904.9 720.6,904.9C721.3,904.9 722.1,907.7 722.9,909.3C724.0,911.6 725.1,914.6 726.3,917.1C727.4,919.6 728.5,923.0 729.6,924.3C730.7,925.6 731.7,926.9 732.8,926.9C734.4,926.9 736.1,924.8 737.8,922.2C738.8,920.7 739.8,915.0 740.9,911.9C741.7,909.3 742.6,905.4 743.5,904.9C744.3,904.4 745.2,904.1 746.1,904.1C746.8,904.1 747.4,906.4 748.1,908.0C749.0,910.0 749.9,915.8 750.7,915.8C751.4,915.8 752.1,915.8 752.8,915.8C753.7,915.8 754.5,912.2 755.4,910.6C756.4,908.7 757.5,906.2 758.5,905.4C759.8,904.4 761.1,904.0 762.4,903.6C764.5,903.0 766.7,902.5 768.9,902.3C771.0,902.2 773.2,902.0 775.3,902.0C776.6,902.0 777.9,902.3 779.2,902.8C780.1,903.1 780.9,905.8 781.8,908.0C782.7,910.2 783.5,914.5 784.4,917.1C785.4,920.1 786.5,923.2 787.5,924.8C788.6,926.6 789.8,928.7 790.9,928.7C792.0,928.7 793.1,928.4 794.2,928.0C795.3,927.5 796.3,925.4 797.4,923.5C798.2,922.0 799.1,919.7 800.0,917.1C800.6,915.0 801.3,910.7 802.0,909.3C802.8,907.8 803.6,906.2 804.4,906.2C805.0,906.2 805.7,907.6 806.4,908.8C807.1,910.0 807.8,913.8 808.5,915.0C809.3,916.4 810.1,917.9 810.8,917.9C811.7,917.9 812.6,915.4 813.4,914.5C814.5,913.3 815.7,911.4 816.8,911.4C817.7,911.4 818.5,911.6 819.4,911.9C820.7,912.3 822.0,914.2 823.3,915.0C824.6,915.8 825.9,917.1 827.1,917.1C828.4,917.1 829.7,916.9 831.0,916.5C831.9,916.3 832.8,913.9 833.6,911.9C834.3,910.3 835.0,906.0 835.7,905.4C836.6,904.6 837.4,904.1 838.3,904.1C839.2,904.1 840.0,905.9 840.9,907.2C841.7,908.4 842.4,911.9 843.2,911.9C844.1,911.9 844.9,909.9 845.8,908.8C846.7,907.6 847.5,905.2 848.4,904.9C849.9,904.4 851.5,904.1 853.1,904.1C856.1,904.1 859.1,904.1 862.1,904.1C864.7,904.1 867.3,904.4 869.9,904.9C870.8,905.1 871.6,905.6 872.5,906.7C873.0,907.4 873.5,910.2 874.0,913.2C874.4,915.2 874.7,920.8 875.1,922.2C875.6,924.3 876.1,926.1 876.6,926.1C877.4,926.1 878.2,925.6 879.0,924.8C879.7,924.2 880.3,920.6 881.0,919.7C881.8,918.6 882.6,917.6 883.4,917.6C884.1,917.6 884.8,919.1 885.4,921.0C886.0,922.5 886.6,929.1 887.2,932.6C887.8,935.7 888.3,940.3 888.8,941.2C889.2,941.9 889.7,942.5 890.1,942.5C890.4,942.5 890.8,940.0 891.1,937.8C891.6,935.0 892.0,926.8 892.4,922.2C893.0,916.9 893.5,909.5 894.0,908.0C894.6,906.2 895.2,904.9 895.8,904.9C896.5,904.9 897.2,906.5 897.9,908.0C898.5,909.4 899.1,914.1 899.7,915.8C900.6,918.2 901.4,921.0 902.3,921.0C903.6,921.0 904.9,919.5 906.2,918.4C907.5,917.2 908.8,914.9 910.0,913.2C911.2,911.7 912.3,909.6 913.4,908.8C914.5,908.0 915.5,907.2 916.5,907.2C917.8,907.2 919.1,908.9 920.4,909.3C921.3,909.5 922.1,909.8 923.0,909.8C923.9,909.8 924.7,908.0 925.6,907.2C926.5,906.4 927.3,904.9 928.2,904.9C929.1,904.9 929.9,905.6 930.8,906.2C931.6,906.8 932.5,909.8 933.4,909.8C934.2,909.8 935.1,909.6 936.0,909.3C936.8,909.0 937.7,907.2 938.5,906.7C939.7,906.1 940.8,905.4 941.9,905.4C942.8,905.4 943.6,906.4 944.5,908.0C945.1,909.1 945.7,917.5 946.3,922.2C946.8,925.7 947.2,932.1 947.6,932.6C948.3,933.5 949.0,933.9 949.7,933.9C950.1,933.9 950.6,928.4 951.0,924.8C951.4,921.3 951.8,914.2 952.3,911.9C953.0,908.3 953.7,904.9 954.4,904.9C955.1,904.9 955.9,905.5 956.7,906.2C957.5,906.9 958.4,909.7 959.3,910.6C960.1,911.5 961.0,912.4 961.9,912.4C963.2,912.4 964.5,910.3 965.8,909.3C967.0,908.3 968.3,906.8 969.6,906.2C971.4,905.4 973.1,904.6 974.8,904.6C975.7,904.6 976.5,906.5 977.4,908.0C978.3,909.5 979.1,915.0 980.0,915.0C981.7,915.0 983.5,914.5 985.2,914.5C986.5,914.5 987.8,914.6 989.1,915.0C989.8,915.2 990.5,919.0 991.1,922.2C991.7,925.1 992.3,931.6 993.0,935.2C993.4,937.8 993.8,941.9 994.2,941.9C994.7,941.9 995.1,941.2 995.5,940.4C996.1,939.2 996.8,932.9 997.4,930.0C998.2,925.9 999.1,921.8 1000.0,919.7C1001.1,916.9 1002.2,914.9 1003.3,914.0C1004.6,912.9 1005.9,911.9 1007.2,911.9C1008.2,911.9 1009.3,913.2 1010.3,914.0C1011.4,914.8 1012.6,917.1 1013.7,917.1C1014.5,917.1 1015.4,917.1 1016.3,917.1C1017.1,917.1 1018.0,914.5 1018.9,913.2C1020.0,911.5 1021.1,909.1 1022.2,908.0C1023.6,906.6 1025.1,904.9 1026.5,904.9C1028.2,904.9 1029.9,905.1 1031.7,905.4C1032.5,905.6 1033.4,906.9 1034.2,909.3C1034.7,910.5 1035.1,914.9 1035.5,919.7C1036.0,924.2 1036.4,930.7 1036.8,941.4C1036.9,944.1 1037.0,951.8 1037.1,953.1C1037.5,958.3 1038.0,959.9 1038.4,960.9C1039.0,962.2 1039.6,963.2 1040.2,963.2C1041.0,963.2 1041.8,962.6 1042.6,962.0C1043.4,961.4 1044.1,959.9 1044.9,958.5C1045.7,957.1 1046.4,955.4 1047.2,953.1C1047.7,951.5 1048.3,949.2 1048.8,946.9C1049.2,945.3 1049.5,943.8 1049.9,941.4C1050.2,939.4 1050.5,934.6 1050.8,932.6C1051.6,927.7 1052.4,924.0 1053.2,922.2C1054.2,920.0 1055.2,918.3 1056.3,917.9C1057.3,917.4 1058.3,917.1 1059.4,917.1C1060.5,917.1 1061.6,918.8 1062.8,919.7C1063.9,920.5 1065.0,922.2 1066.1,922.2C1066.9,922.2 1067.7,921.0 1068.5,919.7C1069.1,918.5 1069.8,913.4 1070.5,911.9C1071.4,910.0 1072.2,908.0 1073.1,908.0C1073.8,908.0 1074.5,909.4 1075.2,910.6C1076.0,911.9 1076.7,915.9 1077.5,917.1C1078.4,918.4 1079.2,919.7 1080.1,919.7C1080.8,919.7 1081.5,916.5 1082.2,914.5C1082.8,912.7 1083.4,909.0 1084.0,908.0C1084.9,906.6 1085.7,905.6 1086.6,905.4C1088.1,905.1 1089.7,904.9 1091.2,904.9C1092.5,904.9 1093.8,905.3 1095.1,905.9C1096.0,906.3 1096.9,908.8 1097.7,909.8C1098.4,910.6 1099.1,911.9 1099.8,911.9C1100.7,911.9 1101.5,909.7 1102.4,908.8C1103.4,907.7 1104.5,905.9 1105.5,905.9C1107.2,905.9 1108.9,906.0 1110.7,906.2C1112.4,906.3 1114.1,907.6 1115.8,908.0C1117.1,908.3 1118.4,908.8 1119.7,908.8C1120.6,908.8 1121.5,907.4 1122.3,906.7C1123.2,906.1 1124.1,904.9 1124.9,904.9C1128.8,904.7 1132.7,904.6 1136.6,904.6C1140.9,904.6 1145.2,904.6 1149.5,904.6C1153.4,904.6 1157.3,904.6 1161.2,904.6C1162.5,904.6 1163.8,904.5 1165.1,904.1C1165.8,903.9 1166.5,901.0 1167.2,898.9C1167.8,897.2 1168.4,894.0 1169.0,892.5C1169.7,890.7 1170.3,888.6 1171.0,888.6C1171.8,888.6 1172.6,889.2 1173.4,889.9C1174.2,890.6 1175.1,893.5 1176.0,895.0C1177.1,897.0 1178.2,898.5 1179.3,900.2C1180.5,902.0 1181.6,904.0 1182.7,905.4C1183.7,906.7 1184.8,908.5 1185.8,908.8C1187.1,909.1 1188.4,909.3 1189.7,909.3C1191.0,909.3 1192.3,908.0 1193.6,907.2C1194.9,906.5 1196.2,905.0 1197.5,904.9C1199.2,904.7 1200.9,904.8 1202.6,904.6C1203.5,904.6 1204.4,904.3 1205.2,903.6C1205.8,903.1 1206.4,897.7 1207.0,891.2C1207.6,885.6 1208.1,863.9 1208.6,854.9C1209.0,847.4 1209.5,839.0 1209.9,836.8C1210.2,835.0 1210.6,833.4 1210.9,833.4C1211.3,833.4 1211.6,835.0 1212.0,836.8C1212.4,839.0 1212.8,847.4 1213.3,854.9C1213.8,863.9 1214.3,885.3 1214.8,891.2C1215.3,897.0 1215.9,902.0 1216.4,902.8C1217.2,904.2 1218.1,904.9 1219.0,904.9C1220.9,904.9 1222.8,904.9 1224.7,904.9C1225.5,904.9 1226.4,906.1 1227.2,906.7C1228.3,907.5 1229.3,909.3 1230.4,909.3C1231.2,909.3 1232.1,908.5 1233.0,907.2C1233.6,906.2 1234.3,901.3 1235.0,896.4C1235.9,890.1 1236.8,875.2 1237.6,865.3C1238.5,855.3 1239.3,843.5 1240.2,836.8C1241.1,830.1 1241.9,823.9 1242.8,821.2C1243.8,818.0 1244.9,815.6 1245.9,814.7C1247.0,813.8 1248.2,812.9 1249.3,812.9C1250.3,812.9 1251.3,813.7 1252.4,814.7C1253.1,815.5 1253.8,818.6 1254.5,821.2C1255.3,824.5 1256.2,829.5 1257.0,834.2C1257.9,838.9 1258.8,844.4 1259.6,849.7C1260.3,854.0 1261.0,860.0 1261.7,862.7C1262.3,865.0 1262.9,867.9 1263.5,867.9C1264.0,867.9 1264.6,864.2 1265.1,860.1C1265.6,856.0 1266.1,839.3 1266.6,831.6C1267.2,823.9 1267.7,814.6 1268.2,812.1C1268.8,809.3 1269.4,807.0 1270.0,807.0C1270.6,807.0 1271.2,809.3 1271.8,812.1C1272.3,814.6 1272.8,824.7 1273.4,831.6C1274.0,839.6 1274.6,853.2 1275.2,857.5C1276.0,863.6 1276.9,867.0 1277.8,869.1C1279.1,872.4 1280.4,873.0 1281.7,875.6C1283.0,878.3 1284.2,882.5 1285.5,886.0C1286.8,889.4 1288.1,893.4 1289.4,896.4C1290.7,899.3 1292.0,903.4 1293.3,904.1C1294.6,904.9 1295.9,905.4 1297.2,905.4C1299.8,905.4 1302.4,905.2 1305.0,905.2C1306.7,905.2 1308.4,905.2 1310.2,905.4C1311.0,905.5 1311.9,908.0 1312.8,909.3C1313.9,911.0 1315.0,914.5 1316.1,914.5C1316.8,914.5 1317.6,911.8 1318.3,909.3C1319.0,906.9 1319.7,899.6 1320.4,896.4C1321.1,893.1 1321.7,888.6 1322.4,888.6C1323.0,888.6 1323.6,891.4 1324.2,893.8C1324.9,896.4 1325.6,903.6 1326.3,906.7C1326.9,909.4 1327.5,913.2 1328.1,913.2C1329.0,913.2 1329.9,911.7 1330.7,910.6C1331.8,909.3 1332.8,905.8 1333.8,905.4C1334.7,905.1 1335.6,904.9 1336.4,904.9C1337.5,904.9 1338.7,907.8 1339.8,909.3C1341.1,911.1 1342.4,913.5 1343.7,915.0C1345.0,916.5 1346.3,918.5 1347.6,918.9C1348.9,919.3 1350.2,919.7 1351.5,919.7C1352.7,919.7 1354.0,919.2 1355.3,918.4C1355.9,918.0 1356.5,915.1 1357.2,911.9C1357.7,909.1 1358.2,898.9 1358.7,896.4C1359.3,893.4 1359.9,890.8 1360.5,890.6C1361.4,890.5 1362.2,890.4 1363.1,890.4C1364.2,890.4 1365.4,891.9 1366.5,891.9C1367.3,891.9 1368.2,891.9 1369.1,891.7C1369.7,891.6 1370.3,885.1 1370.9,880.8C1371.5,876.5 1372.1,867.1 1372.7,865.3C1373.4,863.1 1374.1,861.6 1374.8,861.4C1376.1,861.0 1377.4,861.1 1378.7,860.9C1379.9,860.6 1381.2,860.6 1382.5,860.1C1383.4,859.8 1384.3,856.5 1385.1,854.9C1386.0,853.3 1386.9,850.5 1387.7,850.5C1388.4,850.5 1389.1,852.5 1389.8,854.9C1390.4,857.0 1391.0,866.0 1391.6,870.4C1392.3,875.4 1393.0,883.4 1393.7,883.4C1394.5,883.4 1395.4,882.0 1396.3,880.8C1397.1,879.6 1398.0,875.3 1398.9,874.3C1399.7,873.4 1400.6,872.5 1401.5,872.5C1402.2,872.5 1403.0,874.9 1403.8,876.9C1404.6,879.2 1405.5,885.1 1406.4,888.6C1407.1,891.4 1407.8,892.9 1408.5,896.4C1409.1,899.3 1409.7,906.3 1410.3,909.3C1411.0,912.7 1411.6,916.8 1412.3,917.1C1413.2,917.4 1414.1,917.6 1414.9,917.6C1416.0,917.6 1417.2,915.8 1418.3,915.0C1419.2,914.4 1420.0,913.2 1420.9,913.2C1421.7,913.2 1422.4,915.2 1423.2,917.1C1423.9,918.8 1424.6,924.0 1425.3,926.1C1425.9,928.0 1426.5,930.5 1427.1,930.5C1427.6,930.5 1428.1,927.9 1428.7,926.1C1429.3,924.1 1429.9,919.8 1430.5,918.4C1431.3,916.4 1432.2,914.5 1433.1,914.5C1434.2,914.5 1435.3,915.3 1436.4,915.8C1437.5,916.2 1438.5,917.1 1439.5,917.1C1440.4,917.1 1441.3,915.0 1442.1,913.2C1442.8,911.8 1443.5,907.8 1444.2,906.7C1445.1,905.4 1445.9,904.1 1446.8,904.1C1447.7,904.1 1448.5,905.9 1449.4,906.7C1450.4,907.7 1451.5,909.1 1452.5,909.3C1453.8,909.6 1455.1,909.8 1456.4,909.8C1457.7,909.8 1459.0,909.8 1460.3,909.8C1461.6,909.8 1462.9,908.4 1464.2,908.0C1465.4,907.6 1466.7,907.2 1468.0,907.2C1469.6,907.2 1471.1,907.5 1472.7,908.0C1473.6,908.3 1474.4,909.8 1475.3,911.9C1475.9,913.3 1476.5,918.6 1477.1,921.0C1477.8,923.6 1478.5,927.4 1479.2,927.4C1479.9,927.4 1480.7,926.2 1481.5,925.4C1482.5,924.3 1483.4,922.0 1484.3,921.0C1485.4,919.8 1486.4,918.9 1487.5,918.4C1488.8,917.7 1490.1,917.7 1491.3,917.1C1492.4,916.5 1493.4,915.3 1494.5,914.0C1495.6,912.5 1496.7,910.4 1497.8,908.0C1498.9,905.6 1500.1,901.7 1501.2,898.9C1502.1,896.8 1502.9,893.7 1503.8,893.0C1504.6,892.3 1505.3,891.7 1506.1,891.7C1507.0,891.7 1507.8,893.8 1508.7,895.0C1509.7,896.4 1510.6,898.4 1511.5,899.5C1512.6,900.6 1513.6,901.4 1514.7,902.0C1515.8,902.7 1516.9,903.6 1518.0,903.6C1518.6,903.6 1519.2,902.4 1519.8,900.2C1520.3,898.7 1520.7,882.6 1521.1,870.4C1521.6,858.3 1522.0,832.0 1522.4,823.8C1523.0,814.1 1523.5,805.7 1524.0,804.4C1524.6,802.8 1525.2,801.8 1525.8,801.8C1526.6,801.8 1527.4,804.3 1528.1,805.7C1529.0,807.2 1529.9,809.6 1530.7,810.9C1531.8,812.5 1533.0,813.4 1534.1,814.7C1535.2,816.0 1536.3,816.8 1537.5,818.6C1538.5,820.3 1539.5,822.9 1540.6,826.4C1541.4,829.3 1542.3,835.3 1543.2,839.4C1543.9,842.6 1544.5,848.4 1545.2,848.4C1545.8,848.4 1546.4,843.8 1547.0,839.4C1547.7,834.9 1548.3,822.6 1548.9,813.5C1549.5,803.0 1550.2,788.4 1550.9,779.8C1551.8,769.0 1552.7,759.6 1553.5,753.9C1554.4,748.1 1555.2,742.6 1556.1,740.9C1556.8,739.6 1557.5,738.3 1558.2,738.3C1558.9,738.3 1559.6,739.5 1560.3,740.9C1561.0,742.5 1561.8,748.8 1562.6,753.9C1563.5,759.5 1564.3,768.1 1565.2,774.6C1566.0,781.0 1566.9,788.4 1567.8,792.7C1568.9,798.4 1570.0,802.0 1571.1,805.7C1572.2,809.1 1573.2,813.0 1574.2,814.7C1575.4,816.6 1576.5,818.6 1577.6,818.6C1578.5,818.6 1579.3,816.2 1580.2,814.7C1581.1,813.3 1581.9,810.5 1582.8,809.6C1583.7,808.7 1584.5,807.8 1585.4,807.8C1586.3,807.8 1587.1,809.1 1588.0,810.9C1588.8,812.4 1589.5,818.2 1590.3,823.8C1591.0,828.8 1591.7,835.8 1592.4,844.5C1593.0,852.2 1593.6,864.4 1594.2,875.6C1594.7,885.2 1595.2,902.8 1595.8,906.7C1596.4,911.3 1597.0,915.0 1597.6,915.0C1598.1,915.0 1598.6,910.7 1599.1,906.7C1599.7,902.0 1600.3,887.6 1600.9,880.8C1601.5,874.0 1602.1,866.1 1602.7,864.0C1603.3,861.9 1603.9,860.1 1604.5,860.1C1605.1,860.1 1605.7,864.7 1606.3,867.9C1607.1,871.9 1607.9,879.6 1608.7,883.4C1609.5,887.6 1610.4,893.2 1611.2,893.2C1611.8,893.2 1612.5,888.4 1613.1,883.4C1613.8,877.7 1614.4,857.2 1615.1,844.5C1616.0,828.6 1616.9,809.7 1617.7,797.9C1618.6,786.1 1619.4,774.7 1620.3,769.4C1621.0,765.1 1621.7,761.2 1622.4,760.3C1623.0,759.6 1623.6,759.0 1624.2,759.0C1624.8,759.0 1625.4,760.8 1626.0,762.9C1626.7,765.3 1627.4,775.3 1628.1,782.4C1628.8,789.4 1629.5,800.1 1630.2,805.7C1630.9,811.2 1631.5,816.5 1632.2,818.6C1633.1,821.3 1634.0,822.1 1634.8,823.8C1635.7,825.5 1636.5,826.0 1637.4,829.0C1638.1,831.3 1638.8,840.6 1639.5,849.7C1639.9,855.9 1640.4,868.4 1640.9,875.6C1641.4,883.7 1641.9,891.5 1642.4,896.4C1643.0,902.0 1643.6,906.9 1644.2,909.3C1644.9,912.1 1645.6,914.2 1646.3,915.0C1647.4,916.2 1648.4,917.1 1649.4,917.1C1650.6,917.1 1651.7,916.4 1652.8,915.8C1653.8,915.2 1654.9,913.7 1655.9,912.4C1656.9,911.1 1658.0,909.4 1659.0,908.0C1659.9,906.9 1660.7,905.2 1661.6,904.9C1662.7,904.5 1663.8,904.1 1665.0,904.1C1667.1,904.1 1669.3,904.7 1671.5,904.9C1673.2,905.1 1674.9,905.1 1676.6,905.4C1677.5,905.6 1678.4,906.8 1679.2,908.0C1679.9,909.0 1680.6,911.6 1681.3,913.2C1681.9,914.6 1682.5,917.1 1683.1,917.1C1683.8,917.1 1684.5,915.6 1685.2,914.5C1686.0,913.2 1686.7,909.7 1687.5,908.8C1688.2,908.0 1688.9,907.2 1689.6,907.2C1690.3,907.2 1691.0,908.3 1691.7,909.3C1692.4,910.4 1693.2,913.9 1694.0,915.8C1694.7,917.5 1695.4,920.4 1696.1,920.4C1696.7,920.4 1697.3,918.7 1697.9,917.1C1698.4,915.7 1698.9,910.6 1699.4,909.3C1700.2,907.3 1701.0,905.6 1701.8,905.4C1703.7,905.0 1705.7,904.9 1707.7,904.9C1709.9,904.9 1712.0,905.1 1714.2,905.4C1715.3,905.6 1716.4,907.0 1717.6,908.8C1718.3,910.0 1719.1,914.8 1719.9,917.1C1720.6,919.1 1721.3,922.2 1722.0,922.2C1722.6,922.2 1723.2,920.2 1723.8,918.4C1724.3,916.8 1724.8,912.1 1725.3,910.6C1726.1,908.3 1726.9,906.2 1727.7,905.9C1728.5,905.6 1729.4,905.4 1730.3,905.4C1731.4,905.4 1732.5,906.8 1733.6,907.2C1734.7,907.6 1735.7,908.0 1736.7,908.0C1737.6,908.0 1738.5,906.0 1739.3,905.4C1740.3,904.8 1741.2,904.1 1742.2,904.1C1743.2,904.1 1744.2,905.0 1745.3,905.4C1746.6,905.9 1747.9,906.7 1749.2,906.7C1750.9,906.7 1752.6,906.3 1754.3,906.2C1756.9,906.1 1759.5,906.1 1762.1,905.9C1763.8,905.8 1765.6,904.9 1767.3,904.9C1769.9,904.9 1772.5,904.9 1775.1,904.9C1778.5,904.9 1782.0,904.7 1785.4,904.6C1788.5,904.6 1791.5,904.6 1794.5,904.4C1795.2,904.3 1795.9,903.8 1796.6,902.8C1797.2,902.0 1797.8,895.4 1798.4,892.5C1798.9,890.0 1799.4,886.4 1800.0,886.0C1800.5,885.5 1801.0,885.2 1801.5,885.2C1802.0,885.2 1802.5,888.4 1803.1,891.2C1803.6,893.9 1804.1,901.3 1804.6,904.1C1805.1,907.0 1805.7,910.0 1806.2,910.6C1806.8,911.3 1807.4,911.9 1808.0,911.9C1808.7,911.9 1809.4,909.7 1810.0,908.8C1810.9,907.6 1811.8,905.8 1812.6,905.4C1813.3,905.1 1814.0,904.9 1814.7,904.9C1815.3,904.9 1815.9,906.8 1816.5,908.0C1817.2,909.4 1817.9,912.0 1818.6,913.2C1819.5,914.7 1820.3,915.8 1821.2,916.5C1822.2,917.4 1823.3,917.9 1824.3,918.4C1825.3,918.9 1826.4,919.1 1827.4,919.7C1828.4,920.2 1829.3,921.3 1830.3,922.2C1831.1,923.1 1832.0,924.8 1832.8,924.8C1833.7,924.8 1834.6,924.8 1835.4,924.8C1836.5,924.8 1837.5,922.7 1838.5,922.2C1839.4,921.9 1840.3,921.5 1841.1,921.5C1841.8,921.5 1842.5,922.6 1843.2,923.5C1844.0,924.6 1844.8,927.6 1845.5,928.7C1846.1,929.5 1846.6,930.5 1847.1,930.5C1847.7,930.5 1848.3,928.5 1848.9,926.1C1849.3,924.4 1849.8,917.4 1850.2,914.5C1850.7,911.0 1851.2,907.0 1851.8,906.2C1852.4,905.3 1853.0,904.6 1853.6,904.6C1854.2,904.6 1854.8,906.4 1855.4,908.0C1856.0,909.6 1856.6,914.7 1857.2,917.1C1857.9,919.7 1858.6,923.5 1859.3,923.5C1859.9,923.5 1860.5,922.3 1861.1,921.0C1861.6,919.8 1862.1,914.8 1862.6,913.2C1863.4,910.7 1864.2,908.9 1865.0,908.0C1865.9,906.9 1866.9,906.3 1867.8,905.9C1869.3,905.4 1870.8,905.1 1872.2,904.9C1874.4,904.6 1876.5,904.4 1878.7,904.4C1882.2,904.4 1885.6,904.4 1889.1,904.4C1892.5,904.4 1896.0,904.6 1899.4,904.6C1902.9,904.6 1906.3,904.6 1909.8,904.4C1911.1,904.3 1912.4,904.0 1913.7,903.6C1914.5,903.3 1915.4,902.7 1916.3,902.0C1917.1,901.4 1918.0,900.3 1918.9,899.5L1918.9,941.6L155.2,941.6Z" fill="#60a58f" fill-opacity="0.76"/></g>
<g clip-path="url(#cd)"><path d="M155.2,955.9C155.5,945.3 155.8,928.8 156.2,924.1C156.7,915.9 157.3,911.5 157.9,909.4C158.7,906.4 159.5,904.2 160.3,904.0C161.8,903.6 163.3,903.5 164.8,903.5C168.0,903.3 171.3,903.2 174.6,903.2C176.7,903.2 178.7,903.4 180.8,903.7C181.6,903.9 182.4,904.6 183.2,905.7C183.8,906.5 184.4,910.0 184.9,911.9C185.6,913.9 186.3,917.2 186.9,917.5C188.1,918.0 189.4,918.2 190.6,918.2C192.1,918.2 193.6,918.0 195.0,917.5C195.6,917.3 196.2,914.9 196.8,913.1C197.3,911.2 197.9,906.7 198.5,905.7C199.3,904.2 200.1,903.0 200.9,903.0C201.8,903.0 202.7,903.7 203.6,904.5C204.8,905.4 205.9,908.8 207.1,911.9C208.2,914.7 209.2,918.7 210.3,922.9C211.1,926.1 211.9,929.7 212.8,934.0C213.2,936.1 213.6,938.1 214.0,941.4C214.7,946.9 215.4,961.4 216.1,968.9C216.9,978.2 217.8,989.6 218.7,992.2C219.3,994.3 220.0,996.1 220.7,996.1C221.6,996.1 222.5,994.2 223.3,992.2C224.4,989.6 225.6,981.3 226.7,974.1C227.5,969.1 228.2,962.3 229.0,955.9C229.6,951.3 230.1,950.1 230.7,941.4C230.9,938.8 231.0,927.7 231.2,924.1C231.5,916.9 231.9,911.4 232.2,909.4C232.7,906.4 233.2,904.0 233.7,904.0C234.2,904.0 234.6,906.4 235.1,909.4C235.5,911.4 235.8,918.9 236.1,924.1C236.5,929.5 236.8,937.9 237.1,941.4C237.4,944.8 237.8,946.8 238.1,948.8C238.6,951.6 239.1,954.4 239.6,955.6C240.2,957.4 240.9,958.7 241.5,959.1C242.6,959.7 243.7,960.1 244.7,960.1C245.7,960.1 246.7,959.8 247.7,959.3C248.2,959.1 248.7,958.0 249.2,956.1C249.4,955.2 249.7,951.8 249.9,948.8C250.1,946.8 250.2,944.8 250.4,941.4C250.6,937.9 250.7,927.3 250.9,924.1C251.3,916.3 251.7,911.0 252.1,909.4C252.9,906.1 253.8,904.1 254.6,904.0C256.6,903.6 258.7,903.5 260.7,903.5C263.2,903.5 265.7,903.5 268.1,903.5C270.2,903.5 272.2,903.6 274.3,904.0C274.8,904.1 275.4,906.7 276.0,909.4C276.5,911.7 277.0,919.2 277.5,921.7C278.2,925.5 278.9,928.8 279.7,929.6C279.9,929.8 280.1,930.0 280.3,930.0C280.8,930.0 281.4,925.8 281.9,923.4C282.6,920.5 283.2,917.9 283.9,913.5C284.6,909.1 285.2,902.4 285.9,893.7C286.4,886.7 286.9,875.9 287.5,863.9C287.9,853.3 288.4,839.8 288.9,824.2C289.2,813.1 289.5,797.7 289.9,784.5C290.2,771.2 290.5,752.3 290.8,744.8C291.2,737.2 291.5,730.8 291.8,728.9C292.2,726.7 292.6,724.9 293.0,724.9C293.5,724.9 294.0,726.6 294.4,728.9C294.9,731.2 295.3,745.8 295.8,754.7C296.5,767.4 297.1,782.7 297.8,794.4C298.5,806.2 299.1,816.3 299.8,826.2C300.4,836.0 301.1,846.3 301.8,854.0C302.4,861.7 303.1,868.3 303.8,873.8C304.4,879.2 305.1,885.3 305.7,887.7C306.7,891.3 307.7,893.7 308.7,894.6C309.8,895.7 311.0,896.6 312.1,896.6C312.7,896.6 313.4,893.2 314.1,889.7C314.6,886.9 315.1,877.0 315.7,873.8C316.3,869.8 317.0,866.0 317.6,865.5C318.6,864.7 319.6,864.3 320.6,864.3C321.6,864.3 322.6,865.5 323.6,866.9C324.6,868.2 325.6,871.7 326.6,875.8C327.2,878.5 327.9,884.0 328.6,887.7C329.6,893.3 330.5,900.1 331.5,903.6C332.5,907.1 333.5,910.2 334.5,911.5C335.8,913.4 337.2,915.1 338.5,915.1C339.8,915.1 341.1,913.9 342.5,913.1C343.8,912.4 345.1,911.3 346.4,910.5C347.6,909.8 348.8,909.0 350.0,908.5C350.6,908.3 351.2,908.0 351.8,908.0C352.4,908.0 353.0,911.9 353.6,914.5C354.4,917.8 355.2,925.6 356.0,927.4C356.8,929.5 357.7,931.3 358.6,931.3C359.7,931.3 360.8,930.4 361.9,929.5C363.0,928.7 364.0,926.9 365.0,924.8C366.1,922.6 367.3,916.9 368.4,914.5C369.2,912.8 369.9,910.6 370.7,910.6C371.4,910.6 372.1,910.8 372.8,911.1C373.7,911.5 374.5,916.9 375.4,918.4C376.4,920.2 377.5,921.3 378.5,922.2C379.6,923.3 380.7,924.0 381.9,924.8C383.0,925.7 384.1,926.5 385.2,927.4C386.3,928.3 387.3,929.5 388.3,930.5C389.4,931.6 390.4,933.9 391.4,933.9C392.0,933.9 392.5,930.5 393.0,927.4C393.5,924.4 394.0,914.4 394.6,911.9C395.2,908.5 395.9,905.5 396.6,905.4C399.2,905.0 401.8,904.9 404.4,904.9C406.8,904.9 409.2,905.4 411.7,905.4C414.2,905.4 416.8,905.1 419.4,904.9C422.0,904.7 424.6,904.4 427.2,904.4C429.8,904.4 432.4,904.4 435.0,904.4C438.0,904.4 441.0,905.2 444.0,905.2C446.1,905.2 448.3,904.1 450.4,904.1C452.1,904.1 453.8,904.9 455.5,904.9C458.6,904.9 461.6,904.9 464.6,904.9C465.2,904.9 465.8,907.1 466.4,909.3C466.9,911.2 467.5,920.0 468.0,921.0C468.8,922.6 469.7,923.5 470.6,923.5C471.6,923.5 472.6,923.2 473.7,922.8C474.8,922.3 475.9,921.6 477.1,919.7C477.7,918.6 478.3,911.3 478.9,909.3C479.6,907.0 480.2,904.7 480.9,904.6C482.8,904.4 484.7,904.4 486.6,904.4C490.1,904.4 493.5,904.6 497.0,904.6C500.9,904.7 504.8,904.7 508.6,904.9C509.9,905.0 511.2,906.5 512.5,907.2C513.6,907.8 514.6,908.8 515.6,908.8C517.6,908.8 519.6,908.0 521.6,908.0C523.3,908.0 525.1,908.4 526.8,908.8C527.9,909.0 529.0,909.8 530.2,909.8C531.0,909.8 531.9,907.9 532.8,907.2C533.6,906.5 534.5,905.4 535.3,905.4C536.8,905.4 538.3,906.0 539.7,906.2C541.9,906.5 544.1,907.0 546.2,907.0C547.9,907.0 549.7,906.6 551.4,906.2C552.7,905.9 554.0,904.6 555.3,904.6C556.1,904.6 557.0,905.3 557.9,906.2C558.5,906.8 559.1,910.8 559.7,911.9C560.4,913.1 561.1,914.5 561.8,914.5C563.1,914.5 564.4,912.7 565.6,911.9C566.9,911.1 568.2,910.4 569.5,909.8C570.8,909.3 572.1,908.5 573.4,908.5C574.5,908.5 575.5,908.6 576.5,908.8C577.2,908.9 577.9,911.9 578.6,913.2C579.3,914.5 580.0,916.5 580.7,916.5C581.4,916.5 582.2,914.5 583.0,913.2C583.9,911.8 584.7,908.8 585.6,908.0C586.7,906.9 587.8,906.1 589.0,905.9C590.7,905.6 592.4,905.8 594.1,905.4C594.8,905.3 595.5,902.3 596.2,898.9C596.8,896.0 597.4,885.3 598.0,880.8C598.6,876.3 599.2,871.2 599.8,869.9C600.4,868.8 600.9,867.9 601.4,867.9C602.0,867.9 602.6,869.8 603.2,871.7C603.8,873.7 604.4,880.5 605.0,883.4C605.7,886.7 606.4,889.8 607.1,891.2C608.4,893.7 609.7,894.5 611.0,895.8C612.7,897.6 614.4,898.8 616.2,900.2C617.9,901.7 619.6,903.5 621.4,904.6C622.6,905.5 623.9,906.7 625.2,906.7C627.0,906.7 628.7,906.4 630.4,906.2C631.7,906.0 633.0,905.4 634.3,905.4C635.0,905.4 635.7,906.7 636.4,908.0C637.0,909.1 637.6,913.0 638.2,914.5C638.9,916.2 639.6,918.4 640.3,918.4C641.0,918.4 641.8,916.8 642.6,915.8C643.5,914.5 644.5,911.9 645.4,910.6C646.5,909.2 647.5,907.8 648.5,907.2C650.3,906.3 652.0,905.6 653.7,905.4C656.3,905.1 658.9,904.9 661.5,904.9C662.4,904.9 663.2,906.4 664.1,907.2C664.8,907.9 665.5,909.3 666.2,909.3C666.9,909.3 667.7,908.6 668.5,908.0C669.4,907.4 670.2,905.7 671.1,905.4C672.6,904.9 674.2,904.6 675.8,904.6C677.5,904.6 679.2,904.9 680.9,905.4C681.8,905.7 682.7,907.0 683.5,908.0C684.4,909.0 685.2,911.4 686.1,911.4C687.0,911.4 687.8,909.0 688.7,908.0C689.6,907.0 690.4,905.7 691.3,905.4C693.0,904.9 694.8,904.6 696.5,904.6C697.8,904.6 699.1,904.9 700.4,905.4C701.0,905.7 701.6,908.1 702.2,910.6C702.7,912.8 703.2,920.5 703.7,922.2C704.6,925.1 705.5,927.0 706.3,927.4C707.8,928.2 709.3,928.7 710.7,928.7C711.8,928.7 712.8,928.5 713.8,928.0C714.4,927.7 714.9,923.0 715.4,919.7C715.8,916.9 716.2,910.9 716.7,909.3C717.3,907.0 717.9,904.9 718.5,904.9C719.2,904.9 719.9,904.9 720.6,904.9C721.3,904.9 722.1,907.7 722.9,909.3C724.0,911.6 725.1,914.6 726.3,917.1C727.4,919.6 728.5,923.0 729.6,924.3C730.7,925.6 731.7,926.9 732.8,926.9C734.4,926.9 736.1,924.8 737.8,922.2C738.8,920.7 739.8,915.0 740.9,911.9C741.7,909.3 742.6,905.4 743.5,904.9C744.3,904.4 745.2,904.1 746.1,904.1C746.8,904.1 747.4,906.4 748.1,908.0C749.0,910.0 749.9,915.8 750.7,915.8C751.4,915.8 752.1,915.8 752.8,915.8C753.7,915.8 754.5,912.2 755.4,910.6C756.4,908.7 757.5,906.2 758.5,905.4C759.8,904.4 761.1,904.0 762.4,903.6C764.5,903.0 766.7,902.5 768.9,902.3C771.0,902.2 773.2,902.0 775.3,902.0C776.6,902.0 777.9,902.3 779.2,902.8C780.1,903.1 780.9,905.8 781.8,908.0C782.7,910.2 783.5,914.5 784.4,917.1C785.4,920.1 786.5,923.2 787.5,924.8C788.6,926.6 789.8,928.7 790.9,928.7C792.0,928.7 793.1,928.4 794.2,928.0C795.3,927.5 796.3,925.4 797.4,923.5C798.2,922.0 799.1,919.7 800.0,917.1C800.6,915.0 801.3,910.7 802.0,909.3C802.8,907.8 803.6,906.2 804.4,906.2C805.0,906.2 805.7,907.6 806.4,908.8C807.1,910.0 807.8,913.8 808.5,915.0C809.3,916.4 810.1,917.9 810.8,917.9C811.7,917.9 812.6,915.4 813.4,914.5C814.5,913.3 815.7,911.4 816.8,911.4C817.7,911.4 818.5,911.6 819.4,911.9C820.7,912.3 822.0,914.2 823.3,915.0C824.6,915.8 825.9,917.1 827.1,917.1C828.4,917.1 829.7,916.9 831.0,916.5C831.9,916.3 832.8,913.9 833.6,911.9C834.3,910.3 835.0,906.0 835.7,905.4C836.6,904.6 837.4,904.1 838.3,904.1C839.2,904.1 840.0,905.9 840.9,907.2C841.7,908.4 842.4,911.9 843.2,911.9C844.1,911.9 844.9,909.9 845.8,908.8C846.7,907.6 847.5,905.2 848.4,904.9C849.9,904.4 851.5,904.1 853.1,904.1C856.1,904.1 859.1,904.1 862.1,904.1C864.7,904.1 867.3,904.4 869.9,904.9C870.8,905.1 871.6,905.6 872.5,906.7C873.0,907.4 873.5,910.2 874.0,913.2C874.4,915.2 874.7,920.8 875.1,922.2C875.6,924.3 876.1,926.1 876.6,926.1C877.4,926.1 878.2,925.6 879.0,924.8C879.7,924.2 880.3,920.6 881.0,919.7C881.8,918.6 882.6,917.6 883.4,917.6C884.1,917.6 884.8,919.1 885.4,921.0C886.0,922.5 886.6,929.1 887.2,932.6C887.8,935.7 888.3,940.3 888.8,941.2C889.2,941.9 889.7,942.5 890.1,942.5C890.4,942.5 890.8,940.0 891.1,937.8C891.6,935.0 892.0,926.8 892.4,922.2C893.0,916.9 893.5,909.5 894.0,908.0C894.6,906.2 895.2,904.9 895.8,904.9C896.5,904.9 897.2,906.5 897.9,908.0C898.5,909.4 899.1,914.1 899.7,915.8C900.6,918.2 901.4,921.0 902.3,921.0C903.6,921.0 904.9,919.5 906.2,918.4C907.5,917.2 908.8,914.9 910.0,913.2C911.2,911.7 912.3,909.6 913.4,908.8C914.5,908.0 915.5,907.2 916.5,907.2C917.8,907.2 919.1,908.9 920.4,909.3C921.3,909.5 922.1,909.8 923.0,909.8C923.9,909.8 924.7,908.0 925.6,907.2C926.5,906.4 927.3,904.9 928.2,904.9C929.1,904.9 929.9,905.6 930.8,906.2C931.6,906.8 932.5,909.8 933.4,909.8C934.2,909.8 935.1,909.6 936.0,909.3C936.8,909.0 937.7,907.2 938.5,906.7C939.7,906.1 940.8,905.4 941.9,905.4C942.8,905.4 943.6,906.4 944.5,908.0C945.1,909.1 945.7,917.5 946.3,922.2C946.8,925.7 947.2,932.1 947.6,932.6C948.3,933.5 949.0,933.9 949.7,933.9C950.1,933.9 950.6,928.4 951.0,924.8C951.4,921.3 951.8,914.2 952.3,911.9C953.0,908.3 953.7,904.9 954.4,904.9C955.1,904.9 955.9,905.5 956.7,906.2C957.5,906.9 958.4,909.7 959.3,910.6C960.1,911.5 961.0,912.4 961.9,912.4C963.2,912.4 964.5,910.3 965.8,909.3C967.0,908.3 968.3,906.8 969.6,906.2C971.4,905.4 973.1,904.6 974.8,904.6C975.7,904.6 976.5,906.5 977.4,908.0C978.3,909.5 979.1,915.0 980.0,915.0C981.7,915.0 983.5,914.5 985.2,914.5C986.5,914.5 987.8,914.6 989.1,915.0C989.8,915.2 990.5,919.0 991.1,922.2C991.7,925.1 992.3,931.6 993.0,935.2C993.4,937.8 993.8,941.9 994.2,941.9C994.7,941.9 995.1,941.2 995.5,940.4C996.1,939.2 996.8,932.9 997.4,930.0C998.2,925.9 999.1,921.8 1000.0,919.7C1001.1,916.9 1002.2,914.9 1003.3,914.0C1004.6,912.9 1005.9,911.9 1007.2,911.9C1008.2,911.9 1009.3,913.2 1010.3,914.0C1011.4,914.8 1012.6,917.1 1013.7,917.1C1014.5,917.1 1015.4,917.1 1016.3,917.1C1017.1,917.1 1018.0,914.5 1018.9,913.2C1020.0,911.5 1021.1,909.1 1022.2,908.0C1023.6,906.6 1025.1,904.9 1026.5,904.9C1028.2,904.9 1029.9,905.1 1031.7,905.4C1032.5,905.6 1033.4,906.9 1034.2,909.3C1034.7,910.5 1035.1,914.9 1035.5,919.7C1036.0,924.2 1036.4,930.7 1036.8,941.4C1036.9,944.1 1037.0,951.8 1037.1,953.1C1037.5,958.3 1038.0,959.9 1038.4,960.9C1039.0,962.2 1039.6,963.2 1040.2,963.2C1041.0,963.2 1041.8,962.6 1042.6,962.0C1043.4,961.4 1044.1,959.9 1044.9,958.5C1045.7,957.1 1046.4,955.4 1047.2,953.1C1047.7,951.5 1048.3,949.2 1048.8,946.9C1049.2,945.3 1049.5,943.8 1049.9,941.4C1050.2,939.4 1050.5,934.6 1050.8,932.6C1051.6,927.7 1052.4,924.0 1053.2,922.2C1054.2,920.0 1055.2,918.3 1056.3,917.9C1057.3,917.4 1058.3,917.1 1059.4,917.1C1060.5,917.1 1061.6,918.8 1062.8,919.7C1063.9,920.5 1065.0,922.2 1066.1,922.2C1066.9,922.2 1067.7,921.0 1068.5,919.7C1069.1,918.5 1069.8,913.4 1070.5,911.9C1071.4,910.0 1072.2,908.0 1073.1,908.0C1073.8,908.0 1074.5,909.4 1075.2,910.6C1076.0,911.9 1076.7,915.9 1077.5,917.1C1078.4,918.4 1079.2,919.7 1080.1,919.7C1080.8,919.7 1081.5,916.5 1082.2,914.5C1082.8,912.7 1083.4,909.0 1084.0,908.0C1084.9,906.6 1085.7,905.6 1086.6,905.4C1088.1,905.1 1089.7,904.9 1091.2,904.9C1092.5,904.9 1093.8,905.3 1095.1,905.9C1096.0,906.3 1096.9,908.8 1097.7,909.8C1098.4,910.6 1099.1,911.9 1099.8,911.9C1100.7,911.9 1101.5,909.7 1102.4,908.8C1103.4,907.7 1104.5,905.9 1105.5,905.9C1107.2,905.9 1108.9,906.0 1110.7,906.2C1112.4,906.3 1114.1,907.6 1115.8,908.0C1117.1,908.3 1118.4,908.8 1119.7,908.8C1120.6,908.8 1121.5,907.4 1122.3,906.7C1123.2,906.1 1124.1,904.9 1124.9,904.9C1128.8,904.7 1132.7,904.6 1136.6,904.6C1140.9,904.6 1145.2,904.6 1149.5,904.6C1153.4,904.6 1157.3,904.6 1161.2,904.6C1162.5,904.6 1163.8,904.5 1165.1,904.1C1165.8,903.9 1166.5,901.0 1167.2,898.9C1167.8,897.2 1168.4,894.0 1169.0,892.5C1169.7,890.7 1170.3,888.6 1171.0,888.6C1171.8,888.6 1172.6,889.2 1173.4,889.9C1174.2,890.6 1175.1,893.5 1176.0,895.0C1177.1,897.0 1178.2,898.5 1179.3,900.2C1180.5,902.0 1181.6,904.0 1182.7,905.4C1183.7,906.7 1184.8,908.5 1185.8,908.8C1187.1,909.1 1188.4,909.3 1189.7,909.3C1191.0,909.3 1192.3,908.0 1193.6,907.2C1194.9,906.5 1196.2,905.0 1197.5,904.9C1199.2,904.7 1200.9,904.8 1202.6,904.6C1203.5,904.6 1204.4,904.3 1205.2,903.6C1205.8,903.1 1206.4,897.7 1207.0,891.2C1207.6,885.6 1208.1,863.9 1208.6,854.9C1209.0,847.4 1209.5,839.0 1209.9,836.8C1210.2,835.0 1210.6,833.4 1210.9,833.4C1211.3,833.4 1211.6,835.0 1212.0,836.8C1212.4,839.0 1212.8,847.4 1213.3,854.9C1213.8,863.9 1214.3,885.3 1214.8,891.2C1215.3,897.0 1215.9,902.0 1216.4,902.8C1217.2,904.2 1218.1,904.9 1219.0,904.9C1220.9,904.9 1222.8,904.9 1224.7,904.9C1225.5,904.9 1226.4,906.1 1227.2,906.7C1228.3,907.5 1229.3,909.3 1230.4,909.3C1231.2,909.3 1232.1,908.5 1233.0,907.2C1233.6,906.2 1234.3,901.3 1235.0,896.4C1235.9,890.1 1236.8,875.2 1237.6,865.3C1238.5,855.3 1239.3,843.5 1240.2,836.8C1241.1,830.1 1241.9,823.9 1242.8,821.2C1243.8,818.0 1244.9,815.6 1245.9,814.7C1247.0,813.8 1248.2,812.9 1249.3,812.9C1250.3,812.9 1251.3,813.7 1252.4,814.7C1253.1,815.5 1253.8,818.6 1254.5,821.2C1255.3,824.5 1256.2,829.5 1257.0,834.2C1257.9,838.9 1258.8,844.4 1259.6,849.7C1260.3,854.0 1261.0,860.0 1261.7,862.7C1262.3,865.0 1262.9,867.9 1263.5,867.9C1264.0,867.9 1264.6,864.2 1265.1,860.1C1265.6,856.0 1266.1,839.3 1266.6,831.6C1267.2,823.9 1267.7,814.6 1268.2,812.1C1268.8,809.3 1269.4,807.0 1270.0,807.0C1270.6,807.0 1271.2,809.3 1271.8,812.1C1272.3,814.6 1272.8,824.7 1273.4,831.6C1274.0,839.6 1274.6,853.2 1275.2,857.5C1276.0,863.6 1276.9,867.0 1277.8,869.1C1279.1,872.4 1280.4,873.0 1281.7,875.6C1283.0,878.3 1284.2,882.5 1285.5,886.0C1286.8,889.4 1288.1,893.4 1289.4,896.4C1290.7,899.3 1292.0,903.4 1293.3,904.1C1294.6,904.9 1295.9,905.4 1297.2,905.4C1299.8,905.4 1302.4,905.2 1305.0,905.2C1306.7,905.2 1308.4,905.2 1310.2,905.4C1311.0,905.5 1311.9,908.0 1312.8,909.3C1313.9,911.0 1315.0,914.5 1316.1,914.5C1316.8,914.5 1317.6,911.8 1318.3,909.3C1319.0,906.9 1319.7,899.6 1320.4,896.4C1321.1,893.1 1321.7,888.6 1322.4,888.6C1323.0,888.6 1323.6,891.4 1324.2,893.8C1324.9,896.4 1325.6,903.6 1326.3,906.7C1326.9,909.4 1327.5,913.2 1328.1,913.2C1329.0,913.2 1329.9,911.7 1330.7,910.6C1331.8,909.3 1332.8,905.8 1333.8,905.4C1334.7,905.1 1335.6,904.9 1336.4,904.9C1337.5,904.9 1338.7,907.8 1339.8,909.3C1341.1,911.1 1342.4,913.5 1343.7,915.0C1345.0,916.5 1346.3,918.5 1347.6,918.9C1348.9,919.3 1350.2,919.7 1351.5,919.7C1352.7,919.7 1354.0,919.2 1355.3,918.4C1355.9,918.0 1356.5,915.1 1357.2,911.9C1357.7,909.1 1358.2,898.9 1358.7,896.4C1359.3,893.4 1359.9,890.8 1360.5,890.6C1361.4,890.5 1362.2,890.4 1363.1,890.4C1364.2,890.4 1365.4,891.9 1366.5,891.9C1367.3,891.9 1368.2,891.9 1369.1,891.7C1369.7,891.6 1370.3,885.1 1370.9,880.8C1371.5,876.5 1372.1,867.1 1372.7,865.3C1373.4,863.1 1374.1,861.6 1374.8,861.4C1376.1,861.0 1377.4,861.1 1378.7,860.9C1379.9,860.6 1381.2,860.6 1382.5,860.1C1383.4,859.8 1384.3,856.5 1385.1,854.9C1386.0,853.3 1386.9,850.5 1387.7,850.5C1388.4,850.5 1389.1,852.5 1389.8,854.9C1390.4,857.0 1391.0,866.0 1391.6,870.4C1392.3,875.4 1393.0,883.4 1393.7,883.4C1394.5,883.4 1395.4,882.0 1396.3,880.8C1397.1,879.6 1398.0,875.3 1398.9,874.3C1399.7,873.4 1400.6,872.5 1401.5,872.5C1402.2,872.5 1403.0,874.9 1403.8,876.9C1404.6,879.2 1405.5,885.1 1406.4,888.6C1407.1,891.4 1407.8,892.9 1408.5,896.4C1409.1,899.3 1409.7,906.3 1410.3,909.3C1411.0,912.7 1411.6,916.8 1412.3,917.1C1413.2,917.4 1414.1,917.6 1414.9,917.6C1416.0,917.6 1417.2,915.8 1418.3,915.0C1419.2,914.4 1420.0,913.2 1420.9,913.2C1421.7,913.2 1422.4,915.2 1423.2,917.1C1423.9,918.8 1424.6,924.0 1425.3,926.1C1425.9,928.0 1426.5,930.5 1427.1,930.5C1427.6,930.5 1428.1,927.9 1428.7,926.1C1429.3,924.1 1429.9,919.8 1430.5,918.4C1431.3,916.4 1432.2,914.5 1433.1,914.5C1434.2,914.5 1435.3,915.3 1436.4,915.8C1437.5,916.2 1438.5,917.1 1439.5,917.1C1440.4,917.1 1441.3,915.0 1442.1,913.2C1442.8,911.8 1443.5,907.8 1444.2,906.7C1445.1,905.4 1445.9,904.1 1446.8,904.1C1447.7,904.1 1448.5,905.9 1449.4,906.7C1450.4,907.7 1451.5,909.1 1452.5,909.3C1453.8,909.6 1455.1,909.8 1456.4,909.8C1457.7,909.8 1459.0,909.8 1460.3,909.8C1461.6,909.8 1462.9,908.4 1464.2,908.0C1465.4,907.6 1466.7,907.2 1468.0,907.2C1469.6,907.2 1471.1,907.5 1472.7,908.0C1473.6,908.3 1474.4,909.8 1475.3,911.9C1475.9,913.3 1476.5,918.6 1477.1,921.0C1477.8,923.6 1478.5,927.4 1479.2,927.4C1479.9,927.4 1480.7,926.2 1481.5,925.4C1482.5,924.3 1483.4,922.0 1484.3,921.0C1485.4,919.8 1486.4,918.9 1487.5,918.4C1488.8,917.7 1490.1,917.7 1491.3,917.1C1492.4,916.5 1493.4,915.3 1494.5,914.0C1495.6,912.5 1496.7,910.4 1497.8,908.0C1498.9,905.6 1500.1,901.7 1501.2,898.9C1502.1,896.8 1502.9,893.7 1503.8,893.0C1504.6,892.3 1505.3,891.7 1506.1,891.7C1507.0,891.7 1507.8,893.8 1508.7,895.0C1509.7,896.4 1510.6,898.4 1511.5,899.5C1512.6,900.6 1513.6,901.4 1514.7,902.0C1515.8,902.7 1516.9,903.6 1518.0,903.6C1518.6,903.6 1519.2,902.4 1519.8,900.2C1520.3,898.7 1520.7,882.6 1521.1,870.4C1521.6,858.3 1522.0,832.0 1522.4,823.8C1523.0,814.1 1523.5,805.7 1524.0,804.4C1524.6,802.8 1525.2,801.8 1525.8,801.8C1526.6,801.8 1527.4,804.3 1528.1,805.7C1529.0,807.2 1529.9,809.6 1530.7,810.9C1531.8,812.5 1533.0,813.4 1534.1,814.7C1535.2,816.0 1536.3,816.8 1537.5,818.6C1538.5,820.3 1539.5,822.9 1540.6,826.4C1541.4,829.3 1542.3,835.3 1543.2,839.4C1543.9,842.6 1544.5,848.4 1545.2,848.4C1545.8,848.4 1546.4,843.8 1547.0,839.4C1547.7,834.9 1548.3,822.6 1548.9,813.5C1549.5,803.0 1550.2,788.4 1550.9,779.8C1551.8,769.0 1552.7,759.6 1553.5,753.9C1554.4,748.1 1555.2,742.6 1556.1,740.9C1556.8,739.6 1557.5,738.3 1558.2,738.3C1558.9,738.3 1559.6,739.5 1560.3,740.9C1561.0,742.5 1561.8,748.8 1562.6,753.9C1563.5,759.5 1564.3,768.1 1565.2,774.6C1566.0,781.0 1566.9,788.4 1567.8,792.7C1568.9,798.4 1570.0,802.0 1571.1,805.7C1572.2,809.1 1573.2,813.0 1574.2,814.7C1575.4,816.6 1576.5,818.6 1577.6,818.6C1578.5,818.6 1579.3,816.2 1580.2,814.7C1581.1,813.3 1581.9,810.5 1582.8,809.6C1583.7,808.7 1584.5,807.8 1585.4,807.8C1586.3,807.8 1587.1,809.1 1588.0,810.9C1588.8,812.4 1589.5,818.2 1590.3,823.8C1591.0,828.8 1591.7,835.8 1592.4,844.5C1593.0,852.2 1593.6,864.4 1594.2,875.6C1594.7,885.2 1595.2,902.8 1595.8,906.7C1596.4,911.3 1597.0,915.0 1597.6,915.0C1598.1,915.0 1598.6,910.7 1599.1,906.7C1599.7,902.0 1600.3,887.6 1600.9,880.8C1601.5,874.0 1602.1,866.1 1602.7,864.0C1603.3,861.9 1603.9,860.1 1604.5,860.1C1605.1,860.1 1605.7,864.7 1606.3,867.9C1607.1,871.9 1607.9,879.6 1608.7,883.4C1609.5,887.6 1610.4,893.2 1611.2,893.2C1611.8,893.2 1612.5,888.4 1613.1,883.4C1613.8,877.7 1614.4,857.2 1615.1,844.5C1616.0,828.6 1616.9,809.7 1617.7,797.9C1618.6,786.1 1619.4,774.7 1620.3,769.4C1621.0,765.1 1621.7,761.2 1622.4,760.3C1623.0,759.6 1623.6,759.0 1624.2,759.0C1624.8,759.0 1625.4,760.8 1626.0,762.9C1626.7,765.3 1627.4,775.3 1628.1,782.4C1628.8,789.4 1629.5,800.1 1630.2,805.7C1630.9,811.2 1631.5,816.5 1632.2,818.6C1633.1,821.3 1634.0,822.1 1634.8,823.8C1635.7,825.5 1636.5,826.0 1637.4,829.0C1638.1,831.3 1638.8,840.6 1639.5,849.7C1639.9,855.9 1640.4,868.4 1640.9,875.6C1641.4,883.7 1641.9,891.5 1642.4,896.4C1643.0,902.0 1643.6,906.9 1644.2,909.3C1644.9,912.1 1645.6,914.2 1646.3,915.0C1647.4,916.2 1648.4,917.1 1649.4,917.1C1650.6,917.1 1651.7,916.4 1652.8,915.8C1653.8,915.2 1654.9,913.7 1655.9,912.4C1656.9,911.1 1658.0,909.4 1659.0,908.0C1659.9,906.9 1660.7,905.2 1661.6,904.9C1662.7,904.5 1663.8,904.1 1665.0,904.1C1667.1,904.1 1669.3,904.7 1671.5,904.9C1673.2,905.1 1674.9,905.1 1676.6,905.4C1677.5,905.6 1678.4,906.8 1679.2,908.0C1679.9,909.0 1680.6,911.6 1681.3,913.2C1681.9,914.6 1682.5,917.1 1683.1,917.1C1683.8,917.1 1684.5,915.6 1685.2,914.5C1686.0,913.2 1686.7,909.7 1687.5,908.8C1688.2,908.0 1688.9,907.2 1689.6,907.2C1690.3,907.2 1691.0,908.3 1691.7,909.3C1692.4,910.4 1693.2,913.9 1694.0,915.8C1694.7,917.5 1695.4,920.4 1696.1,920.4C1696.7,920.4 1697.3,918.7 1697.9,917.1C1698.4,915.7 1698.9,910.6 1699.4,909.3C1700.2,907.3 1701.0,905.6 1701.8,905.4C1703.7,905.0 1705.7,904.9 1707.7,904.9C1709.9,904.9 1712.0,905.1 1714.2,905.4C1715.3,905.6 1716.4,907.0 1717.6,908.8C1718.3,910.0 1719.1,914.8 1719.9,917.1C1720.6,919.1 1721.3,922.2 1722.0,922.2C1722.6,922.2 1723.2,920.2 1723.8,918.4C1724.3,916.8 1724.8,912.1 1725.3,910.6C1726.1,908.3 1726.9,906.2 1727.7,905.9C1728.5,905.6 1729.4,905.4 1730.3,905.4C1731.4,905.4 1732.5,906.8 1733.6,907.2C1734.7,907.6 1735.7,908.0 1736.7,908.0C1737.6,908.0 1738.5,906.0 1739.3,905.4C1740.3,904.8 1741.2,904.1 1742.2,904.1C1743.2,904.1 1744.2,905.0 1745.3,905.4C1746.6,905.9 1747.9,906.7 1749.2,906.7C1750.9,906.7 1752.6,906.3 1754.3,906.2C1756.9,906.1 1759.5,906.1 1762.1,905.9C1763.8,905.8 1765.6,904.9 1767.3,904.9C1769.9,904.9 1772.5,904.9 1775.1,904.9C1778.5,904.9 1782.0,904.7 1785.4,904.6C1788.5,904.6 1791.5,904.6 1794.5,904.4C1795.2,904.3 1795.9,903.8 1796.6,902.8C1797.2,902.0 1797.8,895.4 1798.4,892.5C1798.9,890.0 1799.4,886.4 1800.0,886.0C1800.5,885.5 1801.0,885.2 1801.5,885.2C1802.0,885.2 1802.5,888.4 1803.1,891.2C1803.6,893.9 1804.1,901.3 1804.6,904.1C1805.1,907.0 1805.7,910.0 1806.2,910.6C1806.8,911.3 1807.4,911.9 1808.0,911.9C1808.7,911.9 1809.4,909.7 1810.0,908.8C1810.9,907.6 1811.8,905.8 1812.6,905.4C1813.3,905.1 1814.0,904.9 1814.7,904.9C1815.3,904.9 1815.9,906.8 1816.5,908.0C1817.2,909.4 1817.9,912.0 1818.6,913.2C1819.5,914.7 1820.3,915.8 1821.2,916.5C1822.2,917.4 1823.3,917.9 1824.3,918.4C1825.3,918.9 1826.4,919.1 1827.4,919.7C1828.4,920.2 1829.3,921.3 1830.3,922.2C1831.1,923.1 1832.0,924.8 1832.8,924.8C1833.7,924.8 1834.6,924.8 1835.4,924.8C1836.5,924.8 1837.5,922.7 1838.5,922.2C1839.4,921.9 1840.3,921.5 1841.1,921.5C1841.8,921.5 1842.5,922.6 1843.2,923.5C1844.0,924.6 1844.8,927.6 1845.5,928.7C1846.1,929.5 1846.6,930.5 1847.1,930.5C1847.7,930.5 1848.3,928.5 1848.9,926.1C1849.3,924.4 1849.8,917.4 1850.2,914.5C1850.7,911.0 1851.2,907.0 1851.8,906.2C1852.4,905.3 1853.0,904.6 1853.6,904.6C1854.2,904.6 1854.8,906.4 1855.4,908.0C1856.0,909.6 1856.6,914.7 1857.2,917.1C1857.9,919.7 1858.6,923.5 1859.3,923.5C1859.9,923.5 1860.5,922.3 1861.1,921.0C1861.6,919.8 1862.1,914.8 1862.6,913.2C1863.4,910.7 1864.2,908.9 1865.0,908.0C1865.9,906.9 1866.9,906.3 1867.8,905.9C1869.3,905.4 1870.8,905.1 1872.2,904.9C1874.4,904.6 1876.5,904.4 1878.7,904.4C1882.2,904.4 1885.6,904.4 1889.1,904.4C1892.5,904.4 1896.0,904.6 1899.4,904.6C1902.9,904.6 1906.3,904.6 1909.8,904.4C1911.1,904.3 1912.4,904.0 1913.7,903.6C1914.5,903.3 1915.4,902.7 1916.3,902.0C1917.1,901.4 1918.0,900.3 1918.9,899.5L1918.9,941.6L155.2,941.6Z" fill="#b8364a" fill-opacity="0.85"/></g>
<line x1="152" x2="1922.5" y1="941.6" y2="941.6" stroke="#1c2025" stroke-width="1.5" stroke-dasharray="5.86 2.93"/>
<line x1="191.8" x2="191.8" y1="941.6" y2="948.6" stroke="#191d22" stroke-width="1.5"/>
<line x1="270.5" x2="270.5" y1="941.6" y2="948.6" stroke="#191d22" stroke-width="1.5"/>
<line x1="349.2" x2="349.2" y1="941.6" y2="948.6" stroke="#191d22" stroke-width="1.5"/>
<line x1="427.8" x2="427.8" y1="941.6" y2="948.6" stroke="#191d22" stroke-width="1.5"/>
<line x1="506.5" x2="506.5" y1="941.6" y2="948.6" stroke="#191d22" stroke-width="1.5"/>
<line x1="585.2" x2="585.2" y1="941.6" y2="948.6" stroke="#191d22" stroke-width="1.5"/>
<line x1="663.9" x2="663.9" y1="941.6" y2="948.6" stroke="#191d22" stroke-width="1.5"/>
<line x1="742.6" x2="742.6" y1="941.6" y2="948.6" stroke="#191d22" stroke-width="1.5"/>
<line x1="821.2" x2="821.2" y1="941.6" y2="948.6" stroke="#191d22" stroke-width="1.5"/>
<line x1="899.9" x2="899.9" y1="941.6" y2="948.6" stroke="#191d22" stroke-width="1.5"/>
<line x1="978.6" x2="978.6" y1="941.6" y2="948.6" stroke="#191d22" stroke-width="1.5"/>
<line x1="1057.3" x2="1057.3" y1="941.6" y2="948.6" stroke="#191d22" stroke-width="1.5"/>
<line x1="1136.0" x2="1136.0" y1="941.6" y2="948.6" stroke="#191d22" stroke-width="1.5"/>
<line x1="1214.6" x2="1214.6" y1="941.6" y2="948.6" stroke="#191d22" stroke-width="1.5"/>
<line x1="1293.3" x2="1293.3" y1="941.6" y2="948.6" stroke="#191d22" stroke-width="1.5"/>
<line x1="1372.0" x2="1372.0" y1="941.6" y2="948.6" stroke="#191d22" stroke-width="1.5"/>
<line x1="1450.7" x2="1450.7" y1="941.6" y2="948.6" stroke="#191d22" stroke-width="1.5"/>
<line x1="1529.4" x2="1529.4" y1="941.6" y2="948.6" stroke="#191d22" stroke-width="1.5"/>
<line x1="1608.0" x2="1608.0" y1="941.6" y2="948.6" stroke="#191d22" stroke-width="1.5"/>
<line x1="1686.7" x2="1686.7" y1="941.6" y2="948.6" stroke="#191d22" stroke-width="1.5"/>
<line x1="1765.4" x2="1765.4" y1="941.6" y2="948.6" stroke="#191d22" stroke-width="1.5"/>
<line x1="1844.1" x2="1844.1" y1="941.6" y2="948.6" stroke="#191d22" stroke-width="1.5"/>
<line x1="1922.8" x2="1922.8" y1="941.6" y2="948.6" stroke="#191d22" stroke-width="1.5"/>
<line x1="1922.5" x2="1922.5" y1="941.6" y2="948.6" stroke="#191d22" stroke-width="1.5"/>
<path d="M155.2,839.6C156.5,840.2 157.8,841.2 159.1,841.4C160.8,841.7 162.5,841.8 164.2,841.9C165.7,842.0 167.2,842.0 168.7,842.2C169.8,842.3 170.9,843.5 172.0,844.5C173.1,845.5 174.1,848.4 175.1,848.4C175.8,848.4 176.5,847.1 177.2,845.8C177.8,844.7 178.4,840.6 179.0,839.4C180.1,837.1 181.3,835.1 182.4,835.0C183.7,834.8 185.0,834.8 186.3,834.7C187.6,834.5 188.9,833.3 190.2,832.1C191.5,830.9 192.7,829.4 194.0,826.4C194.9,824.4 195.8,819.8 196.6,813.5C197.2,809.0 197.8,795.0 198.4,790.1C199.0,786.0 199.5,781.7 200.0,781.1C200.6,780.3 201.2,779.8 201.8,779.8C202.4,779.8 203.0,782.6 203.6,785.0C204.3,787.6 205.0,794.5 205.7,797.9C206.6,802.1 207.4,806.2 208.3,808.3C209.6,811.4 210.9,811.7 212.2,814.7C213.0,816.7 213.9,820.0 214.8,823.8C215.6,827.6 216.5,834.2 217.4,839.4C218.2,844.5 219.1,850.5 219.9,854.9C220.8,859.3 221.7,864.3 222.5,866.5C223.4,868.8 224.3,870.8 225.1,871.2C226.4,871.9 227.7,872.2 229.0,872.2C230.3,872.2 231.6,871.7 232.9,871.0C234.2,870.3 235.5,867.7 236.8,865.3C238.1,862.8 239.4,858.1 240.7,854.9C242.0,851.7 243.3,847.6 244.6,845.8C245.9,844.0 247.2,842.2 248.4,841.9C250.0,841.6 251.6,841.8 253.1,841.4C254.1,841.2 255.2,838.7 256.2,836.8C257.1,835.2 257.9,832.0 258.8,830.8C260.1,828.9 261.4,827.5 262.7,826.9C264.2,826.2 265.6,825.6 267.1,825.6C268.2,825.6 269.3,826.7 270.5,827.7C271.8,828.8 273.1,831.8 274.4,834.2C275.4,836.1 276.4,839.4 277.5,840.6C278.3,841.7 279.2,843.0 280.1,843.0C280.9,843.0 281.8,839.9 282.6,838.1C283.5,836.3 284.4,833.4 285.2,832.1C286.4,830.4 287.5,829.0 288.6,828.5C289.9,827.8 291.2,827.2 292.5,827.2C293.4,827.2 294.2,828.5 295.1,830.3C295.7,831.5 296.3,837.4 296.9,839.4C297.8,842.1 298.6,844.7 299.5,845.3C300.6,846.1 301.7,846.2 302.9,846.6C304.1,847.1 305.4,847.3 306.7,847.9C308.0,848.5 309.3,850.0 310.6,851.0C312.3,852.4 314.1,854.5 315.8,854.9C317.5,855.3 319.3,855.7 321.0,855.7C322.7,855.7 324.4,855.2 326.2,855.2C326.9,855.2 327.6,856.2 328.2,857.5C328.8,858.6 329.4,862.6 330.1,865.3C330.9,869.0 331.8,873.5 332.6,876.9C333.5,880.3 334.4,883.8 335.2,886.0C336.1,888.2 337.0,891.2 337.8,891.2C338.7,891.2 339.5,891.2 340.4,891.2C341.3,891.2 342.1,887.4 343.0,886.5C343.9,885.6 344.7,884.7 345.6,884.7C346.5,884.7 347.3,885.9 348.2,887.3C349.1,888.6 349.9,893.4 350.8,896.4C351.8,899.9 352.9,902.3 353.9,906.7C354.6,909.6 355.3,916.4 356.0,918.4C356.6,920.3 357.3,922.2 358.0,922.2C358.8,922.2 359.6,921.6 360.4,921.0C361.5,920.1 362.6,917.4 363.7,915.8C365.5,913.3 367.2,910.8 368.9,908.8C370.4,907.0 371.9,905.1 373.3,904.1C374.7,903.2 376.1,902.0 377.5,902.0C378.9,902.0 380.4,903.3 381.9,903.3C383.6,903.3 385.3,902.7 387.1,902.0C388.8,901.4 390.5,899.9 392.2,898.9C393.5,898.2 394.8,896.9 396.1,896.9C397.1,896.9 398.2,897.0 399.2,897.1C400.3,897.3 401.5,899.7 402.6,901.0C403.9,902.6 405.2,905.0 406.5,905.9C407.8,906.9 409.1,908.0 410.4,908.0C411.7,908.0 413.0,907.8 414.2,907.5C416.0,907.1 417.7,906.0 419.4,904.9C420.7,904.1 422.0,903.1 423.3,901.5C424.2,900.5 425.0,897.9 425.9,896.4C426.8,894.8 427.6,892.3 428.5,891.9C429.8,891.5 431.1,891.2 432.4,891.2C433.7,891.2 435.0,892.2 436.3,892.2C438.0,892.2 439.7,891.7 441.4,891.2C443.2,890.6 444.9,889.0 446.6,887.8C448.3,886.6 450.0,884.9 451.7,883.9C453.0,883.2 454.2,882.1 455.5,882.1C456.8,882.1 458.1,882.1 459.4,882.1C460.6,882.1 461.7,883.4 462.8,884.7C463.6,885.6 464.4,887.8 465.1,889.9C465.8,891.7 466.5,895.5 467.2,896.4C468.1,897.4 468.9,898.0 469.8,898.2C471.1,898.3 472.4,898.4 473.7,898.4C475.2,898.4 476.8,898.2 478.3,897.9C479.4,897.7 480.4,895.1 481.4,893.8C482.7,892.0 484.0,890.1 485.3,888.6C486.6,887.1 487.9,885.5 489.2,884.7C490.5,883.9 491.8,882.9 493.1,882.9C494.4,882.9 495.7,882.9 497.0,882.9C497.7,882.9 498.4,884.7 499.1,886.0C499.9,887.6 500.8,890.7 501.7,892.5C502.7,894.5 503.7,896.7 504.8,897.6C505.8,898.6 506.8,899.7 507.9,899.7C508.7,899.7 509.6,899.2 510.5,898.4C511.2,897.8 511.8,893.5 512.5,891.2C513.2,888.9 513.9,885.8 514.6,884.7C515.5,883.4 516.3,882.4 517.2,882.1C518.7,881.6 520.1,881.8 521.6,881.3C522.5,881.0 523.3,879.1 524.2,876.9C524.9,875.2 525.6,870.3 526.3,867.9C527.1,864.8 528.0,861.6 528.9,860.1C529.9,858.3 530.9,856.8 532.0,856.5C533.3,856.0 534.6,855.7 535.9,855.7C536.7,855.7 537.6,856.6 538.5,857.5C539.3,858.4 540.2,861.5 541.0,863.2C542.1,865.2 543.1,867.0 544.1,868.4C545.3,869.9 546.4,872.2 547.5,872.2C548.8,872.2 550.1,871.8 551.4,871.5C552.7,871.2 554.0,870.4 555.3,870.4C556.4,870.4 557.5,871.1 558.6,871.7C559.7,872.4 560.7,874.1 561.8,875.6C562.8,877.1 563.8,879.6 564.9,880.8C566.0,882.1 567.1,883.4 568.2,883.6C569.5,884.0 570.8,884.2 572.1,884.2C573.4,884.2 574.7,884.1 576.0,883.9C576.9,883.8 577.7,881.5 578.6,880.8C579.5,880.1 580.3,879.2 581.2,879.2C582.3,879.2 583.4,880.3 584.6,880.8C586.0,881.4 587.5,882.4 589.0,882.4C590.7,882.4 592.4,882.4 594.1,882.4C595.4,882.4 596.7,881.7 598.0,881.3C599.1,881.0 600.1,880.0 601.1,880.0C602.1,880.0 603.0,880.8 604.0,881.3C605.0,881.9 606.1,883.4 607.1,883.9C608.4,884.5 609.7,885.1 611.0,885.2C612.3,885.4 613.6,885.5 614.9,885.5C615.5,885.5 616.1,884.1 616.7,882.1C617.0,880.9 617.4,873.5 617.7,871.7C618.3,868.6 618.9,866.4 619.5,865.8C620.6,864.7 621.6,864.1 622.6,864.0C623.9,863.8 625.2,863.7 626.5,863.7C627.7,863.7 628.8,863.9 629.9,864.2C630.9,864.5 632.0,866.4 633.0,867.1C634.3,868.0 635.6,868.9 636.9,869.1C638.2,869.4 639.5,869.7 640.8,869.7C642.1,869.7 643.4,868.9 644.7,868.4C646.0,867.8 647.3,866.9 648.5,866.0C649.8,865.2 651.1,864.7 652.4,863.5C653.5,862.5 654.5,860.6 655.5,858.8C656.4,857.3 657.3,854.5 658.1,853.6C658.8,852.9 659.5,852.0 660.2,852.0C660.9,852.0 661.6,853.1 662.3,854.1C663.1,855.2 663.8,858.5 664.6,860.1C665.6,862.0 666.5,863.9 667.5,864.7C668.7,865.8 669.9,866.7 671.1,866.8C672.6,867.0 674.2,867.1 675.8,867.1C677.3,867.1 678.9,866.8 680.4,866.8C681.6,866.8 682.8,868.9 684.0,869.1C685.6,869.4 687.1,869.7 688.7,869.7C690.3,869.7 691.8,869.7 693.4,869.7C694.1,869.7 694.8,870.9 695.4,872.5C696.0,873.7 696.5,880.4 697.0,883.4C697.7,887.5 698.4,892.1 699.1,893.8C700.1,896.2 701.1,897.9 702.2,898.4C703.6,899.2 704.9,899.7 706.3,899.7C707.8,899.7 709.3,899.7 710.7,899.7C711.8,899.7 712.8,900.2 713.8,901.0C714.5,901.5 715.2,905.0 715.9,906.7C716.8,908.8 717.6,911.0 718.5,912.4C719.5,914.1 720.6,915.6 721.6,916.5C722.7,917.6 723.9,918.5 725.0,918.9C726.3,919.3 727.6,919.7 728.9,919.7C730.2,919.7 731.5,919.7 732.8,919.7C733.7,919.7 734.7,916.8 735.7,915.8C736.6,914.9 737.4,913.7 738.3,913.7C739.2,913.7 740.0,914.8 740.9,915.8C741.7,916.7 742.6,919.7 743.5,920.2C744.6,920.8 745.7,921.1 746.8,921.2C748.1,921.4 749.4,921.3 750.7,921.5C752.0,921.6 753.3,923.5 754.6,924.3C755.7,925.0 756.9,926.1 758.0,926.1C758.8,926.1 759.7,924.6 760.6,923.5C761.4,922.5 762.3,919.7 763.2,919.7C764.0,919.7 764.9,919.7 765.8,919.7C766.8,919.7 767.8,922.9 768.9,923.5C769.9,924.2 770.9,924.8 772.0,924.8C773.1,924.8 774.2,923.5 775.3,922.2C776.5,921.0 777.6,918.3 778.7,915.8C779.6,913.8 780.4,909.8 781.3,908.8C782.2,907.7 783.0,906.7 783.9,906.7C785.1,906.7 786.3,906.9 787.5,907.2C788.6,907.5 789.8,909.1 790.9,910.6C792.0,912.1 793.1,914.9 794.2,917.1C795.1,918.8 796.0,922.2 796.8,922.2C797.7,922.2 798.6,921.7 799.4,921.0C800.3,920.2 801.2,915.4 802.0,914.0C802.7,912.8 803.4,911.4 804.1,911.4C804.7,911.4 805.3,912.4 805.9,914.0C806.3,915.1 806.8,922.1 807.2,924.8C807.8,928.7 808.4,932.7 809.0,933.9C809.9,935.6 810.7,937.0 811.6,937.0C812.9,937.0 814.2,936.5 815.5,936.5C816.6,936.5 817.7,936.5 818.9,936.5C819.6,936.5 820.4,939.2 821.2,940.4C822.1,941.8 822.9,944.3 823.8,944.3C824.6,944.3 825.5,943.3 826.4,942.5C827.5,941.4 828.6,938.3 829.7,936.5C830.9,934.7 832.0,932.3 833.1,931.3C834.1,930.4 835.2,929.5 836.2,929.5C837.3,929.5 838.3,929.8 839.3,930.0C840.5,930.3 841.6,932.1 842.7,932.1C844.0,932.1 845.3,930.8 846.6,930.5C848.3,930.3 850.0,930.2 851.8,930.0C853.3,929.9 854.9,929.8 856.4,929.8C857.5,929.8 858.5,931.4 859.5,932.6C860.4,933.7 861.3,936.6 862.1,937.0C863.0,937.5 863.9,937.8 864.7,937.8C865.8,937.8 866.8,935.6 867.8,934.7C868.9,933.7 870.1,932.1 871.2,932.1C872.3,932.1 873.4,933.8 874.6,934.7C875.2,935.3 875.9,935.9 876.6,936.5C877.4,937.1 878.2,937.6 879.0,938.3C879.8,939.2 880.7,940.2 881.5,941.7C882.4,943.2 883.3,945.5 884.1,948.2C885.0,950.8 885.9,954.7 886.7,958.5C887.6,962.4 888.5,967.6 889.3,971.5C890.2,975.3 891.1,979.5 891.9,981.8C892.8,984.1 893.6,986.6 894.5,987.0C895.1,987.3 895.7,987.5 896.3,987.5C897.0,987.5 897.7,984.3 898.4,981.8C899.1,979.4 899.8,974.3 900.5,971.5C901.3,967.9 902.2,964.2 903.1,962.4C904.1,960.3 905.1,958.4 906.2,958.0C907.5,957.5 908.8,957.2 910.0,957.2C911.3,957.2 912.6,958.5 913.9,958.5C915.0,958.5 916.0,957.8 917.0,957.2C918.2,956.6 919.3,954.2 920.4,953.9C921.3,953.6 922.1,953.3 923.0,953.3C923.7,953.3 924.4,955.6 925.1,957.2C925.7,958.7 926.3,962.3 926.9,963.2C927.6,964.2 928.3,965.0 929.0,965.0C929.8,965.0 930.7,962.5 931.5,961.1C932.6,959.5 933.6,956.5 934.7,955.9C936.0,955.2 937.3,954.6 938.5,954.6C939.8,954.6 941.1,954.6 942.4,954.6C943.1,954.6 943.8,953.1 944.5,950.8C944.9,949.3 945.4,940.6 945.8,937.8C946.4,933.9 947.0,929.9 947.6,929.5C948.5,929.0 949.3,928.7 950.2,928.7C951.1,928.7 951.9,930.9 952.8,932.6C953.7,934.3 954.5,938.0 955.4,940.4C956.3,942.7 957.1,945.6 958.0,946.9C959.0,948.4 960.1,950.0 961.1,950.0C962.2,950.0 963.3,948.2 964.5,946.9C965.8,945.3 967.0,942.0 968.3,940.4C969.6,938.8 970.9,937.3 972.2,936.5C973.5,935.7 974.8,934.7 976.1,934.7C977.4,934.7 978.7,934.7 980.0,934.7C981.3,934.7 982.6,933.8 983.9,933.1C985.2,932.4 986.5,931.2 987.8,930.0C989.1,928.9 990.4,927.8 991.7,926.1C992.7,924.8 993.7,922.8 994.8,921.0C995.6,919.4 996.5,917.3 997.4,915.8C998.2,914.3 999.1,912.4 1000.0,911.9C1001.1,911.2 1002.2,910.6 1003.3,910.6C1004.6,910.6 1005.9,910.8 1007.2,911.1C1008.3,911.4 1009.4,913.0 1010.6,914.0C1011.6,914.8 1012.6,915.9 1013.7,916.5C1015.0,917.3 1016.3,917.9 1017.6,918.4C1018.9,918.9 1020.2,919.2 1021.5,919.7C1022.7,920.1 1023.9,920.6 1025.2,921.0C1026.9,921.5 1028.6,922.2 1030.4,922.2C1031.7,922.2 1033.0,922.2 1034.2,922.2C1035.1,922.2 1036.0,919.8 1036.8,918.4C1037.7,917.0 1038.6,914.2 1039.4,913.7C1040.7,912.9 1042.0,913.0 1043.3,912.4C1044.6,911.8 1045.9,910.8 1047.2,909.3C1048.2,908.1 1049.3,904.9 1050.3,903.6C1051.3,902.5 1052.2,901.0 1053.2,901.0C1053.9,901.0 1054.7,902.3 1055.5,903.6C1056.2,904.8 1056.9,908.7 1057.6,910.6C1058.4,913.0 1059.3,915.2 1060.2,916.5C1061.5,918.6 1062.7,919.5 1064.0,921.0C1065.3,922.4 1066.6,924.2 1067.9,925.4C1069.2,926.5 1070.5,928.2 1071.8,928.2C1073.1,928.2 1074.4,927.8 1075.7,927.4C1076.8,927.1 1077.9,925.4 1079.1,925.4C1080.1,925.4 1081.1,925.4 1082.2,925.4C1083.0,925.4 1083.9,927.5 1084.8,928.2C1085.5,928.8 1086.1,929.5 1086.8,929.5C1087.4,929.5 1088.0,927.5 1088.7,926.1C1089.3,924.8 1089.9,921.5 1090.5,921.0C1091.3,920.2 1092.2,919.7 1093.1,919.7C1094.2,919.7 1095.3,921.8 1096.4,922.2C1097.3,922.6 1098.2,923.0 1099.0,923.0C1100.3,923.0 1101.6,922.1 1102.9,921.5C1104.6,920.7 1106.4,919.1 1108.1,918.4C1109.8,917.6 1111.5,916.9 1113.3,916.5C1115.0,916.2 1116.7,916.1 1118.5,915.8C1120.2,915.5 1121.9,915.1 1123.6,914.5C1124.9,914.0 1126.2,913.1 1127.5,912.4C1128.8,911.8 1130.1,910.6 1131.4,910.6C1132.7,910.6 1134.0,910.9 1135.3,911.1C1136.4,911.3 1137.5,912.4 1138.7,912.4C1139.9,912.4 1141.1,911.2 1142.3,910.6C1143.4,910.0 1144.5,908.8 1145.7,908.8C1146.9,908.8 1148.2,909.0 1149.5,909.3C1150.8,909.6 1152.1,910.6 1153.4,911.1C1154.7,911.7 1156.0,912.7 1157.3,912.7C1158.6,912.7 1159.9,912.3 1161.2,911.9C1162.5,911.5 1163.8,909.9 1165.1,908.0C1165.9,906.7 1166.8,903.6 1167.7,901.5C1168.5,899.5 1169.4,896.3 1170.3,895.6C1171.1,894.9 1172.0,894.3 1172.8,894.3C1173.7,894.3 1174.6,894.9 1175.4,895.6C1176.5,896.3 1177.5,898.6 1178.5,900.2C1179.7,902.1 1180.8,904.8 1181.9,906.2C1182.8,907.3 1183.6,908.8 1184.5,908.8C1185.6,908.8 1186.8,908.4 1187.9,908.0C1189.1,907.6 1190.3,905.6 1191.5,904.1C1192.6,902.8 1193.7,901.2 1194.9,899.5C1196.2,897.4 1197.5,895.1 1198.8,892.5C1200.1,889.8 1201.3,886.5 1202.6,883.4C1203.8,880.7 1204.9,877.4 1206.0,875.1C1206.9,873.3 1207.7,871.1 1208.6,870.4C1209.4,869.9 1210.2,869.4 1210.9,869.4C1211.9,869.4 1212.8,870.6 1213.8,871.2C1214.8,871.9 1215.9,873.0 1216.9,873.0C1217.9,873.0 1219.0,872.6 1220.0,872.2C1221.1,871.9 1222.2,870.4 1223.4,870.4C1224.2,870.4 1225.1,871.0 1226.0,871.7C1226.6,872.3 1227.2,875.1 1227.8,876.9C1228.3,878.5 1228.8,881.5 1229.3,882.1C1229.9,882.8 1230.5,883.4 1231.1,883.4C1231.7,883.4 1232.3,880.5 1233.0,878.2C1233.5,876.2 1234.0,871.2 1234.5,869.1C1235.1,866.8 1235.7,864.7 1236.3,864.0C1237.2,863.0 1238.0,862.1 1238.9,862.1C1240.2,862.1 1241.5,862.1 1242.8,862.1C1243.8,862.1 1244.9,861.1 1245.9,860.1C1246.6,859.4 1247.3,856.7 1248.0,856.2C1248.8,855.5 1249.7,854.9 1250.6,854.9C1251.6,854.9 1252.6,855.4 1253.7,855.7C1254.8,856.0 1255.9,857.0 1257.0,857.0C1258.3,857.0 1259.6,857.0 1260.9,857.0C1262.0,857.0 1263.0,856.6 1264.0,856.2C1264.9,855.8 1265.8,853.8 1266.6,852.3C1267.3,851.2 1268.0,848.6 1268.7,848.4C1269.4,848.3 1270.1,848.2 1270.8,848.2C1271.4,848.2 1272.0,850.0 1272.6,851.0C1273.3,852.2 1274.0,854.3 1274.7,854.9C1275.5,855.6 1276.4,856.2 1277.2,856.2C1278.3,856.2 1279.3,855.7 1280.4,855.4C1281.5,855.1 1282.6,854.4 1283.7,854.4C1284.3,854.4 1284.9,855.9 1285.5,857.0C1286.2,858.1 1286.9,860.7 1287.6,861.4C1288.7,862.4 1289.7,863.0 1290.7,863.2C1292.0,863.5 1293.3,863.5 1294.6,863.7C1295.9,863.9 1297.2,864.4 1298.5,864.7C1299.8,865.1 1301.1,866.0 1302.4,866.0C1303.2,866.0 1304.1,864.4 1305.0,862.7C1305.6,861.5 1306.2,857.6 1306.8,856.2C1307.5,854.6 1308.2,852.8 1308.9,852.8C1309.5,852.8 1310.2,853.6 1310.9,854.4C1311.7,855.3 1312.5,858.8 1313.3,860.1C1314.1,861.5 1315.0,863.2 1315.8,863.2C1316.5,863.2 1317.2,862.1 1317.9,861.4C1318.3,861.0 1318.7,860.6 1319.1,860.1C1320.2,858.4 1321.3,854.2 1322.4,851.0C1323.5,848.1 1324.5,843.5 1325.5,841.9C1326.6,840.4 1327.6,838.8 1328.7,838.8C1329.8,838.8 1330.9,839.7 1332.0,840.6C1333.3,841.7 1334.6,845.4 1335.9,848.4C1336.9,850.8 1338.0,855.1 1339.0,857.0C1340.1,859.0 1341.3,861.0 1342.4,861.4C1343.7,861.8 1345.0,861.8 1346.3,862.1C1347.3,862.5 1348.3,863.0 1349.4,864.0C1350.2,864.8 1351.1,868.8 1352.0,869.7C1353.1,870.8 1354.2,871.7 1355.3,871.7C1356.6,871.7 1357.9,871.1 1359.2,870.4C1360.5,869.8 1361.8,868.0 1363.1,866.5C1364.4,865.1 1365.7,862.8 1367.0,861.4C1368.3,859.9 1369.6,858.4 1370.9,857.5C1372.2,856.6 1373.5,855.9 1374.8,855.4C1376.1,855.0 1377.4,854.4 1378.7,854.4C1380.4,854.4 1382.1,854.7 1383.8,854.9C1385.1,855.1 1386.4,855.7 1387.7,855.7C1389.0,855.7 1390.3,854.3 1391.6,853.6C1392.9,852.9 1394.2,851.8 1395.5,851.5C1397.0,851.2 1398.6,851.0 1400.2,851.0C1401.0,851.0 1401.9,851.3 1402.8,851.8C1403.4,852.1 1404.0,855.9 1404.6,857.5C1405.4,859.8 1406.3,862.4 1407.2,863.2C1408.4,864.3 1409.7,864.6 1411.0,865.3C1412.3,865.9 1413.6,866.6 1414.9,867.3C1416.6,868.4 1418.4,869.7 1420.1,871.0C1421.8,872.2 1423.6,873.7 1425.3,875.1C1427.0,876.5 1428.7,877.9 1430.5,879.5C1431.8,880.7 1433.1,882.2 1434.3,883.4C1435.6,884.6 1436.9,886.8 1438.2,886.8C1439.3,886.8 1440.3,886.5 1441.3,886.0C1442.2,885.6 1443.1,881.8 1443.9,880.8C1444.8,879.8 1445.7,878.7 1446.5,878.7C1447.2,878.7 1447.9,880.5 1448.6,882.1C1449.2,883.5 1449.8,887.7 1450.4,889.1C1451.1,890.7 1451.8,892.5 1452.5,892.5C1453.4,892.5 1454.2,890.8 1455.1,889.9C1455.9,888.9 1456.8,887.1 1457.7,886.8C1458.7,886.3 1459.7,886.0 1460.8,886.0C1461.9,886.0 1463.0,887.5 1464.2,888.6C1465.3,889.6 1466.4,890.9 1467.5,892.5C1468.5,893.9 1469.6,896.4 1470.6,897.6C1471.5,898.7 1472.3,900.2 1473.2,900.2C1473.9,900.2 1474.6,898.8 1475.3,897.6C1476.1,896.3 1476.8,893.0 1477.6,891.7C1478.6,890.1 1479.5,888.7 1480.5,888.1C1481.7,887.3 1482.9,886.5 1484.1,886.5C1485.2,886.5 1486.3,887.5 1487.5,888.1C1488.8,888.7 1490.1,890.2 1491.3,890.4C1492.6,890.5 1493.9,890.6 1495.2,890.6C1496.5,890.6 1497.8,890.1 1499.1,889.4C1500.0,888.8 1500.8,887.0 1501.7,884.7C1502.4,882.8 1503.1,877.4 1503.8,874.3C1504.6,870.9 1505.3,867.2 1506.1,865.3C1507.1,862.9 1508.0,861.9 1509.0,860.1C1510.0,858.1 1511.0,856.3 1512.1,853.6C1513.1,850.9 1514.1,846.8 1515.2,843.2C1516.3,839.4 1517.4,835.2 1518.5,831.6C1519.4,828.8 1520.3,825.4 1521.1,823.8C1522.0,822.2 1522.9,820.7 1523.7,820.4C1525.0,820.1 1526.3,819.9 1527.6,819.9C1528.9,819.9 1530.2,821.2 1531.5,821.2C1532.6,821.2 1533.7,820.6 1534.9,819.9C1535.9,819.3 1536.9,816.8 1538.0,814.7C1539.0,812.7 1540.1,809.3 1541.1,807.0C1542.0,805.1 1542.8,802.1 1543.7,801.8C1544.5,801.5 1545.4,801.3 1546.3,801.3C1547.1,801.3 1548.0,803.6 1548.9,804.4C1549.7,805.1 1550.6,806.2 1551.5,806.2C1552.1,806.2 1552.8,804.0 1553.5,801.8C1554.2,799.6 1554.9,792.7 1555.6,788.8C1556.2,785.5 1556.8,779.8 1557.4,779.8C1558.0,779.8 1558.6,779.8 1559.2,779.8C1559.7,779.8 1560.3,786.2 1560.8,788.8C1561.6,792.8 1562.3,797.4 1563.1,799.2C1564.1,801.4 1565.0,802.9 1566.0,803.6C1567.0,804.4 1568.0,805.2 1569.1,805.2C1570.4,805.2 1571.7,805.1 1573.0,804.9C1574.1,804.8 1575.2,802.6 1576.3,800.5C1577.4,798.5 1578.4,794.5 1579.4,790.1C1580.3,786.5 1581.2,779.0 1582.0,775.9C1582.7,773.4 1583.4,770.2 1584.1,770.2C1584.8,770.2 1585.5,770.7 1586.2,771.5C1586.9,772.3 1587.7,778.1 1588.5,781.1C1589.4,784.3 1590.2,788.2 1591.1,790.1C1592.1,792.5 1593.2,793.6 1594.2,795.3C1595.3,797.1 1596.4,798.0 1597.6,800.5C1598.1,801.6 1598.6,804.3 1599.1,805.7C1600.1,808.4 1601.1,811.1 1602.2,812.1C1603.0,813.0 1603.9,814.0 1604.8,814.0C1605.8,814.0 1606.8,812.4 1607.9,810.9C1609.0,809.2 1610.1,805.6 1611.2,801.8C1612.1,798.8 1613.0,792.3 1613.8,790.1C1614.7,787.9 1615.6,785.7 1616.4,785.5C1617.5,785.1 1618.7,785.0 1619.8,785.0C1620.8,785.0 1621.9,785.6 1622.9,786.2C1623.9,786.9 1625.0,789.1 1626.0,791.4C1627.0,793.5 1627.9,798.5 1628.9,800.5C1629.9,802.6 1630.9,804.3 1632.0,805.2C1633.1,806.1 1634.2,805.9 1635.3,807.0C1636.2,807.8 1637.1,810.8 1637.9,813.5C1639.2,817.2 1640.4,827.5 1641.7,828.2C1642.5,828.7 1643.4,829.0 1644.2,829.0C1645.1,829.0 1646.0,827.5 1646.8,826.9C1647.7,826.4 1648.6,825.6 1649.4,825.6C1650.3,825.6 1651.2,826.3 1652.0,826.9C1652.9,827.5 1653.7,829.3 1654.6,829.8C1655.5,830.3 1656.3,830.8 1657.2,830.8C1657.8,830.8 1658.4,828.0 1659.0,826.4C1659.7,824.6 1660.4,820.9 1661.1,820.4C1662.1,819.8 1663.2,819.4 1664.2,819.4C1665.3,819.4 1666.4,819.6 1667.6,819.9C1668.6,820.2 1669.6,821.3 1670.7,822.5C1671.6,823.6 1672.6,826.3 1673.5,828.2C1674.6,830.2 1675.6,832.4 1676.6,834.2C1677.9,836.3 1679.2,838.3 1680.5,839.9C1681.8,841.4 1683.1,842.9 1684.4,843.8C1685.7,844.7 1687.0,845.3 1688.3,845.8C1689.6,846.4 1690.9,847.1 1692.2,847.1C1693.5,847.1 1694.8,847.1 1696.1,847.1C1696.9,847.1 1697.8,846.5 1698.7,845.8C1699.5,845.1 1700.4,841.9 1701.2,839.4C1702.1,836.8 1703.0,833.1 1703.8,830.3C1704.5,828.0 1705.2,824.7 1705.9,823.8C1706.8,822.7 1707.6,821.7 1708.5,821.7C1709.5,821.7 1710.6,822.1 1711.6,822.5C1712.5,822.9 1713.3,823.8 1714.2,825.1C1714.9,826.1 1715.6,827.8 1716.3,830.3C1716.9,832.5 1717.5,838.7 1718.1,841.9C1718.7,845.2 1719.3,849.2 1719.9,850.2C1720.6,851.4 1721.3,852.3 1722.0,852.3C1722.8,852.3 1723.7,851.6 1724.6,851.0C1725.7,850.2 1726.8,848.4 1727.9,847.1C1729.1,845.8 1730.3,843.9 1731.5,843.2C1732.7,842.6 1733.8,841.9 1734.9,841.9C1736.2,841.9 1737.5,842.4 1738.8,842.7C1740.1,843.1 1741.4,843.8 1742.7,844.5C1743.8,845.2 1744.9,846.6 1746.1,847.1C1746.9,847.5 1747.8,847.9 1748.7,847.9C1749.3,847.9 1750.0,846.1 1750.7,844.5C1751.3,843.2 1751.9,839.1 1752.5,838.1C1753.3,836.7 1754.1,835.7 1754.9,835.5C1756.0,835.2 1757.1,835.1 1758.2,835.0C1759.5,834.8 1760.8,834.9 1762.1,834.7C1763.2,834.6 1764.2,833.0 1765.2,832.1C1766.4,831.1 1767.5,829.6 1768.6,829.0C1769.7,828.4 1770.8,828.3 1772.0,827.7C1773.0,827.1 1774.0,826.4 1775.1,825.1C1775.9,824.0 1776.8,820.6 1777.7,818.6C1778.7,816.3 1779.7,813.7 1780.8,812.1C1781.9,810.5 1783.0,809.3 1784.2,808.3C1785.4,807.0 1786.7,805.9 1788.0,805.2C1789.3,804.4 1790.6,803.3 1791.9,803.3C1793.2,803.3 1794.5,803.4 1795.8,803.6C1796.8,803.7 1797.9,805.0 1798.9,806.2C1800.0,807.5 1801.2,810.1 1802.3,812.1C1803.4,814.2 1804.5,816.0 1805.7,818.6C1806.5,820.7 1807.4,822.9 1808.2,826.4C1808.8,828.8 1809.4,834.6 1810.0,836.8C1810.7,839.2 1811.4,841.6 1812.1,841.9C1813.2,842.4 1814.2,842.7 1815.2,842.7C1816.5,842.7 1817.8,842.5 1819.1,842.5C1820.4,842.4 1821.7,842.2 1823.0,842.2C1824.3,842.2 1825.6,842.7 1826.9,843.2C1827.9,843.7 1829.0,844.8 1830.0,845.8C1831.1,847.0 1832.2,848.8 1833.4,850.2C1834.7,851.9 1836.0,853.3 1837.2,854.9C1838.5,856.5 1839.8,858.1 1841.1,859.6C1842.3,860.8 1843.4,862.7 1844.5,863.2C1845.5,863.6 1846.6,864.0 1847.6,864.0C1848.5,864.0 1849.3,862.7 1850.2,861.4C1851.1,860.1 1851.9,856.2 1852.8,853.6C1853.7,851.0 1854.5,847.8 1855.4,845.8C1856.3,843.9 1857.1,841.7 1858.0,841.2C1859.0,840.6 1860.1,840.1 1861.1,840.1C1862.2,840.1 1863.3,841.2 1864.5,841.9C1865.6,842.7 1866.7,844.1 1867.8,845.3C1868.9,846.5 1869.9,848.6 1870.9,849.2C1871.8,849.7 1872.7,850.2 1873.5,850.2C1874.4,850.2 1875.2,848.2 1876.1,847.1C1877.1,845.9 1878.2,844.1 1879.2,843.2C1880.3,842.3 1881.5,841.4 1882.6,841.2C1883.7,840.9 1884.8,840.6 1886.0,840.6C1886.6,840.6 1887.2,840.9 1887.8,841.2C1888.5,841.5 1889.1,844.5 1889.8,845.8C1890.4,847.0 1891.1,848.9 1891.7,848.9C1892.7,848.9 1893.7,848.9 1894.8,848.9C1895.9,848.9 1897.0,847.9 1898.1,847.9C1899.0,847.9 1899.9,848.1 1900.7,848.4C1901.3,848.7 1901.9,851.9 1902.5,853.6C1903.2,855.5 1903.9,859.3 1904.6,859.3C1905.3,859.3 1906.0,859.1 1906.7,858.8C1907.5,858.4 1908.4,856.2 1909.3,855.7C1910.3,855.0 1911.3,854.4 1912.4,854.4C1913.7,854.4 1915.0,855.0 1916.3,855.4C1917.1,855.7 1918.0,856.3 1918.9,856.7" fill="none" stroke="#e6c158" stroke-width="1.5" stroke-linejoin="round"/>
<g clip-path="url(#cu)"><path d="M155.2,955.9C155.5,945.3 155.8,928.8 156.2,924.1C156.7,915.9 157.3,911.5 157.9,909.4C158.7,906.4 159.5,904.2 160.3,904.0C161.8,903.6 163.3,903.5 164.8,903.5C168.0,903.3 171.3,903.2 174.6,903.2C176.7,903.2 178.7,903.4 180.8,903.7C181.6,903.9 182.4,904.6 183.2,905.7C183.8,906.5 184.4,910.0 184.9,911.9C185.6,913.9 186.3,917.2 186.9,917.5C188.1,918.0 189.4,918.2 190.6,918.2C192.1,918.2 193.6,918.0 195.0,917.5C195.6,917.3 196.2,914.9 196.8,913.1C197.3,911.2 197.9,906.7 198.5,905.7C199.3,904.2 200.1,903.0 200.9,903.0C201.8,903.0 202.7,903.7 203.6,904.5C204.8,905.4 205.9,908.8 207.1,911.9C208.2,914.7 209.2,918.7 210.3,922.9C211.1,926.1 211.9,929.7 212.8,934.0C213.2,936.1 213.6,938.1 214.0,941.4C214.7,946.9 215.4,961.4 216.1,968.9C216.9,978.2 217.8,989.6 218.7,992.2C219.3,994.3 220.0,996.1 220.7,996.1C221.6,996.1 222.5,994.2 223.3,992.2C224.4,989.6 225.6,981.3 226.7,974.1C227.5,969.1 228.2,962.3 229.0,955.9C229.6,951.3 230.1,950.1 230.7,941.4C230.9,938.8 231.0,927.7 231.2,924.1C231.5,916.9 231.9,911.4 232.2,909.4C232.7,906.4 233.2,904.0 233.7,904.0C234.2,904.0 234.6,906.4 235.1,909.4C235.5,911.4 235.8,918.9 236.1,924.1C236.5,929.5 236.8,937.9 237.1,941.4C237.4,944.8 237.8,946.8 238.1,948.8C238.6,951.6 239.1,954.4 239.6,955.6C240.2,957.4 240.9,958.7 241.5,959.1C242.6,959.7 243.7,960.1 244.7,960.1C245.7,960.1 246.7,959.8 247.7,959.3C248.2,959.1 248.7,958.0 249.2,956.1C249.4,955.2 249.7,951.8 249.9,948.8C250.1,946.8 250.2,944.8 250.4,941.4C250.6,937.9 250.7,927.3 250.9,924.1C251.3,916.3 251.7,911.0 252.1,909.4C252.9,906.1 253.8,904.1 254.6,904.0C256.6,903.6 258.7,903.5 260.7,903.5C263.2,903.5 265.7,903.5 268.1,903.5C270.2,903.5 272.2,903.6 274.3,904.0C274.8,904.1 275.4,906.7 276.0,909.4C276.5,911.7 277.0,919.2 277.5,921.7C278.2,925.5 278.9,928.8 279.7,929.6C279.9,929.8 280.1,930.0 280.3,930.0C280.8,930.0 281.4,925.8 281.9,923.4C282.6,920.5 283.2,917.9 283.9,913.5C284.6,909.1 285.2,902.4 285.9,893.7C286.4,886.7 286.9,875.9 287.5,863.9C287.9,853.3 288.4,839.8 288.9,824.2C289.2,813.1 289.5,797.7 289.9,784.5C290.2,771.2 290.5,752.3 290.8,744.8C291.2,737.2 291.5,730.8 291.8,728.9C292.2,726.7 292.6,724.9 293.0,724.9C293.5,724.9 294.0,726.6 294.4,728.9C294.9,731.2 295.3,745.8 295.8,754.7C296.5,767.4 297.1,782.7 297.8,794.4C298.5,806.2 299.1,816.3 299.8,826.2C300.4,836.0 301.1,846.3 301.8,854.0C302.4,861.7 303.1,868.3 303.8,873.8C304.4,879.2 305.1,885.3 305.7,887.7C306.7,891.3 307.7,893.7 308.7,894.6C309.8,895.7 311.0,896.6 312.1,896.6C312.7,896.6 313.4,893.2 314.1,889.7C314.6,886.9 315.1,877.0 315.7,873.8C316.3,869.8 317.0,866.0 317.6,865.5C318.6,864.7 319.6,864.3 320.6,864.3C321.6,864.3 322.6,865.5 323.6,866.9C324.6,868.2 325.6,871.7 326.6,875.8C327.2,878.5 327.9,884.0 328.6,887.7C329.6,893.3 330.5,900.1 331.5,903.6C332.5,907.1 333.5,910.2 334.5,911.5C335.8,913.4 337.2,915.1 338.5,915.1C339.8,915.1 341.1,913.9 342.5,913.1C343.8,912.4 345.1,911.3 346.4,910.5C347.6,909.8 348.8,909.0 350.0,908.5C350.6,908.3 351.2,908.0 351.8,908.0C352.4,908.0 353.0,911.9 353.6,914.5C354.4,917.8 355.2,925.6 356.0,927.4C356.8,929.5 357.7,931.3 358.6,931.3C359.7,931.3 360.8,930.4 361.9,929.5C363.0,928.7 364.0,926.9 365.0,924.8C366.1,922.6 367.3,916.9 368.4,914.5C369.2,912.8 369.9,910.6 370.7,910.6C371.4,910.6 372.1,910.8 372.8,911.1C373.7,911.5 374.5,916.9 375.4,918.4C376.4,920.2 377.5,921.3 378.5,922.2C379.6,923.3 380.7,924.0 381.9,924.8C383.0,925.7 384.1,926.5 385.2,927.4C386.3,928.3 387.3,929.5 388.3,930.5C389.4,931.6 390.4,933.9 391.4,933.9C392.0,933.9 392.5,930.5 393.0,927.4C393.5,924.4 394.0,914.4 394.6,911.9C395.2,908.5 395.9,905.5 396.6,905.4C399.2,905.0 401.8,904.9 404.4,904.9C406.8,904.9 409.2,905.4 411.7,905.4C414.2,905.4 416.8,905.1 419.4,904.9C422.0,904.7 424.6,904.4 427.2,904.4C429.8,904.4 432.4,904.4 435.0,904.4C438.0,904.4 441.0,905.2 444.0,905.2C446.1,905.2 448.3,904.1 450.4,904.1C452.1,904.1 453.8,904.9 455.5,904.9C458.6,904.9 461.6,904.9 464.6,904.9C465.2,904.9 465.8,907.1 466.4,909.3C466.9,911.2 467.5,920.0 468.0,921.0C468.8,922.6 469.7,923.5 470.6,923.5C471.6,923.5 472.6,923.2 473.7,922.8C474.8,922.3 475.9,921.6 477.1,919.7C477.7,918.6 478.3,911.3 478.9,909.3C479.6,907.0 480.2,904.7 480.9,904.6C482.8,904.4 484.7,904.4 486.6,904.4C490.1,904.4 493.5,904.6 497.0,904.6C500.9,904.7 504.8,904.7 508.6,904.9C509.9,905.0 511.2,906.5 512.5,907.2C513.6,907.8 514.6,908.8 515.6,908.8C517.6,908.8 519.6,908.0 521.6,908.0C523.3,908.0 525.1,908.4 526.8,908.8C527.9,909.0 529.0,909.8 530.2,909.8C531.0,909.8 531.9,907.9 532.8,907.2C533.6,906.5 534.5,905.4 535.3,905.4C536.8,905.4 538.3,906.0 539.7,906.2C541.9,906.5 544.1,907.0 546.2,907.0C547.9,907.0 549.7,906.6 551.4,906.2C552.7,905.9 554.0,904.6 555.3,904.6C556.1,904.6 557.0,905.3 557.9,906.2C558.5,906.8 559.1,910.8 559.7,911.9C560.4,913.1 561.1,914.5 561.8,914.5C563.1,914.5 564.4,912.7 565.6,911.9C566.9,911.1 568.2,910.4 569.5,909.8C570.8,909.3 572.1,908.5 573.4,908.5C574.5,908.5 575.5,908.6 576.5,908.8C577.2,908.9 577.9,911.9 578.6,913.2C579.3,914.5 580.0,916.5 580.7,916.5C581.4,916.5 582.2,914.5 583.0,913.2C583.9,911.8 584.7,908.8 585.6,908.0C586.7,906.9 587.8,906.1 589.0,905.9C590.7,905.6 592.4,905.8 594.1,905.4C594.8,905.3 595.5,902.3 596.2,898.9C596.8,896.0 597.4,885.3 598.0,880.8C598.6,876.3 599.2,871.2 599.8,869.9C600.4,868.8 600.9,867.9 601.4,867.9C602.0,867.9 602.6,869.8 603.2,871.7C603.8,873.7 604.4,880.5 605.0,883.4C605.7,886.7 606.4,889.8 607.1,891.2C608.4,893.7 609.7,894.5 611.0,895.8C612.7,897.6 614.4,898.8 616.2,900.2C617.9,901.7 619.6,903.5 621.4,904.6C622.6,905.5 623.9,906.7 625.2,906.7C627.0,906.7 628.7,906.4 630.4,906.2C631.7,906.0 633.0,905.4 634.3,905.4C635.0,905.4 635.7,906.7 636.4,908.0C637.0,909.1 637.6,913.0 638.2,914.5C638.9,916.2 639.6,918.4 640.3,918.4C641.0,918.4 641.8,916.8 642.6,915.8C643.5,914.5 644.5,911.9 645.4,910.6C646.5,909.2 647.5,907.8 648.5,907.2C650.3,906.3 652.0,905.6 653.7,905.4C656.3,905.1 658.9,904.9 661.5,904.9C662.4,904.9 663.2,906.4 664.1,907.2C664.8,907.9 665.5,909.3 666.2,909.3C666.9,909.3 667.7,908.6 668.5,908.0C669.4,907.4 670.2,905.7 671.1,905.4C672.6,904.9 674.2,904.6 675.8,904.6C677.5,904.6 679.2,904.9 680.9,905.4C681.8,905.7 682.7,907.0 683.5,908.0C684.4,909.0 685.2,911.4 686.1,911.4C687.0,911.4 687.8,909.0 688.7,908.0C689.6,907.0 690.4,905.7 691.3,905.4C693.0,904.9 694.8,904.6 696.5,904.6C697.8,904.6 699.1,904.9 700.4,905.4C701.0,905.7 701.6,908.1 702.2,910.6C702.7,912.8 703.2,920.5 703.7,922.2C704.6,925.1 705.5,927.0 706.3,927.4C707.8,928.2 709.3,928.7 710.7,928.7C711.8,928.7 712.8,928.5 713.8,928.0C714.4,927.7 714.9,923.0 715.4,919.7C715.8,916.9 716.2,910.9 716.7,909.3C717.3,907.0 717.9,904.9 718.5,904.9C719.2,904.9 719.9,904.9 720.6,904.9C721.3,904.9 722.1,907.7 722.9,909.3C724.0,911.6 725.1,914.6 726.3,917.1C727.4,919.6 728.5,923.0 729.6,924.3C730.7,925.6 731.7,926.9 732.8,926.9C734.4,926.9 736.1,924.8 737.8,922.2C738.8,920.7 739.8,915.0 740.9,911.9C741.7,909.3 742.6,905.4 743.5,904.9C744.3,904.4 745.2,904.1 746.1,904.1C746.8,904.1 747.4,906.4 748.1,908.0C749.0,910.0 749.9,915.8 750.7,915.8C751.4,915.8 752.1,915.8 752.8,915.8C753.7,915.8 754.5,912.2 755.4,910.6C756.4,908.7 757.5,906.2 758.5,905.4C759.8,904.4 761.1,904.0 762.4,903.6C764.5,903.0 766.7,902.5 768.9,902.3C771.0,902.2 773.2,902.0 775.3,902.0C776.6,902.0 777.9,902.3 779.2,902.8C780.1,903.1 780.9,905.8 781.8,908.0C782.7,910.2 783.5,914.5 784.4,917.1C785.4,920.1 786.5,923.2 787.5,924.8C788.6,926.6 789.8,928.7 790.9,928.7C792.0,928.7 793.1,928.4 794.2,928.0C795.3,927.5 796.3,925.4 797.4,923.5C798.2,922.0 799.1,919.7 800.0,917.1C800.6,915.0 801.3,910.7 802.0,909.3C802.8,907.8 803.6,906.2 804.4,906.2C805.0,906.2 805.7,907.6 806.4,908.8C807.1,910.0 807.8,913.8 808.5,915.0C809.3,916.4 810.1,917.9 810.8,917.9C811.7,917.9 812.6,915.4 813.4,914.5C814.5,913.3 815.7,911.4 816.8,911.4C817.7,911.4 818.5,911.6 819.4,911.9C820.7,912.3 822.0,914.2 823.3,915.0C824.6,915.8 825.9,917.1 827.1,917.1C828.4,917.1 829.7,916.9 831.0,916.5C831.9,916.3 832.8,913.9 833.6,911.9C834.3,910.3 835.0,906.0 835.7,905.4C836.6,904.6 837.4,904.1 838.3,904.1C839.2,904.1 840.0,905.9 840.9,907.2C841.7,908.4 842.4,911.9 843.2,911.9C844.1,911.9 844.9,909.9 845.8,908.8C846.7,907.6 847.5,905.2 848.4,904.9C849.9,904.4 851.5,904.1 853.1,904.1C856.1,904.1 859.1,904.1 862.1,904.1C864.7,904.1 867.3,904.4 869.9,904.9C870.8,905.1 871.6,905.6 872.5,906.7C873.0,907.4 873.5,910.2 874.0,913.2C874.4,915.2 874.7,920.8 875.1,922.2C875.6,924.3 876.1,926.1 876.6,926.1C877.4,926.1 878.2,925.6 879.0,924.8C879.7,924.2 880.3,920.6 881.0,919.7C881.8,918.6 882.6,917.6 883.4,917.6C884.1,917.6 884.8,919.1 885.4,921.0C886.0,922.5 886.6,929.1 887.2,932.6C887.8,935.7 888.3,940.3 888.8,941.2C889.2,941.9 889.7,942.5 890.1,942.5C890.4,942.5 890.8,940.0 891.1,937.8C891.6,935.0 892.0,926.8 892.4,922.2C893.0,916.9 893.5,909.5 894.0,908.0C894.6,906.2 895.2,904.9 895.8,904.9C896.5,904.9 897.2,906.5 897.9,908.0C898.5,909.4 899.1,914.1 899.7,915.8C900.6,918.2 901.4,921.0 902.3,921.0C903.6,921.0 904.9,919.5 906.2,918.4C907.5,917.2 908.8,914.9 910.0,913.2C911.2,911.7 912.3,909.6 913.4,908.8C914.5,908.0 915.5,907.2 916.5,907.2C917.8,907.2 919.1,908.9 920.4,909.3C921.3,909.5 922.1,909.8 923.0,909.8C923.9,909.8 924.7,908.0 925.6,907.2C926.5,906.4 927.3,904.9 928.2,904.9C929.1,904.9 929.9,905.6 930.8,906.2C931.6,906.8 932.5,909.8 933.4,909.8C934.2,909.8 935.1,909.6 936.0,909.3C936.8,909.0 937.7,907.2 938.5,906.7C939.7,906.1 940.8,905.4 941.9,905.4C942.8,905.4 943.6,906.4 944.5,908.0C945.1,909.1 945.7,917.5 946.3,922.2C946.8,925.7 947.2,932.1 947.6,932.6C948.3,933.5 949.0,933.9 949.7,933.9C950.1,933.9 950.6,928.4 951.0,924.8C951.4,921.3 951.8,914.2 952.3,911.9C953.0,908.3 953.7,904.9 954.4,904.9C955.1,904.9 955.9,905.5 956.7,906.2C957.5,906.9 958.4,909.7 959.3,910.6C960.1,911.5 961.0,912.4 961.9,912.4C963.2,912.4 964.5,910.3 965.8,909.3C967.0,908.3 968.3,906.8 969.6,906.2C971.4,905.4 973.1,904.6 974.8,904.6C975.7,904.6 976.5,906.5 977.4,908.0C978.3,909.5 979.1,915.0 980.0,915.0C981.7,915.0 983.5,914.5 985.2,914.5C986.5,914.5 987.8,914.6 989.1,915.0C989.8,915.2 990.5,919.0 991.1,922.2C991.7,925.1 992.3,931.6 993.0,935.2C993.4,937.8 993.8,941.9 994.2,941.9C994.7,941.9 995.1,941.2 995.5,940.4C996.1,939.2 996.8,932.9 997.4,930.0C998.2,925.9 999.1,921.8 1000.0,919.7C1001.1,916.9 1002.2,914.9 1003.3,914.0C1004.6,912.9 1005.9,911.9 1007.2,911.9C1008.2,911.9 1009.3,913.2 1010.3,914.0C1011.4,914.8 1012.6,917.1 1013.7,917.1C1014.5,917.1 1015.4,917.1 1016.3,917.1C1017.1,917.1 1018.0,914.5 1018.9,913.2C1020.0,911.5 1021.1,909.1 1022.2,908.0C1023.6,906.6 1025.1,904.9 1026.5,904.9C1028.2,904.9 1029.9,905.1 1031.7,905.4C1032.5,905.6 1033.4,906.9 1034.2,909.3C1034.7,910.5 1035.1,914.9 1035.5,919.7C1036.0,924.2 1036.4,930.7 1036.8,941.4C1036.9,944.1 1037.0,951.8 1037.1,953.1C1037.5,958.3 1038.0,959.9 1038.4,960.9C1039.0,962.2 1039.6,963.2 1040.2,963.2C1041.0,963.2 1041.8,962.6 1042.6,962.0C1043.4,961.4 1044.1,959.9 1044.9,958.5C1045.7,957.1 1046.4,955.4 1047.2,953.1C1047.7,951.5 1048.3,949.2 1048.8,946.9C1049.2,945.3 1049.5,943.8 1049.9,941.4C1050.2,939.4 1050.5,934.6 1050.8,932.6C1051.6,927.7 1052.4,924.0 1053.2,922.2C1054.2,920.0 1055.2,918.3 1056.3,917.9C1057.3,917.4 1058.3,917.1 1059.4,917.1C1060.5,917.1 1061.6,918.8 1062.8,919.7C1063.9,920.5 1065.0,922.2 1066.1,922.2C1066.9,922.2 1067.7,921.0 1068.5,919.7C1069.1,918.5 1069.8,913.4 1070.5,911.9C1071.4,910.0 1072.2,908.0 1073.1,908.0C1073.8,908.0 1074.5,909.4 1075.2,910.6C1076.0,911.9 1076.7,915.9 1077.5,917.1C1078.4,918.4 1079.2,919.7 1080.1,919.7C1080.8,919.7 1081.5,916.5 1082.2,914.5C1082.8,912.7 1083.4,909.0 1084.0,908.0C1084.9,906.6 1085.7,905.6 1086.6,905.4C1088.1,905.1 1089.7,904.9 1091.2,904.9C1092.5,904.9 1093.8,905.3 1095.1,905.9C1096.0,906.3 1096.9,908.8 1097.7,909.8C1098.4,910.6 1099.1,911.9 1099.8,911.9C1100.7,911.9 1101.5,909.7 1102.4,908.8C1103.4,907.7 1104.5,905.9 1105.5,905.9C1107.2,905.9 1108.9,906.0 1110.7,906.2C1112.4,906.3 1114.1,907.6 1115.8,908.0C1117.1,908.3 1118.4,908.8 1119.7,908.8C1120.6,908.8 1121.5,907.4 1122.3,906.7C1123.2,906.1 1124.1,904.9 1124.9,904.9C1128.8,904.7 1132.7,904.6 1136.6,904.6C1140.9,904.6 1145.2,904.6 1149.5,904.6C1153.4,904.6 1157.3,904.6 1161.2,904.6C1162.5,904.6 1163.8,904.5 1165.1,904.1C1165.8,903.9 1166.5,901.0 1167.2,898.9C1167.8,897.2 1168.4,894.0 1169.0,892.5C1169.7,890.7 1170.3,888.6 1171.0,888.6C1171.8,888.6 1172.6,889.2 1173.4,889.9C1174.2,890.6 1175.1,893.5 1176.0,895.0C1177.1,897.0 1178.2,898.5 1179.3,900.2C1180.5,902.0 1181.6,904.0 1182.7,905.4C1183.7,906.7 1184.8,908.5 1185.8,908.8C1187.1,909.1 1188.4,909.3 1189.7,909.3C1191.0,909.3 1192.3,908.0 1193.6,907.2C1194.9,906.5 1196.2,905.0 1197.5,904.9C1199.2,904.7 1200.9,904.8 1202.6,904.6C1203.5,904.6 1204.4,904.3 1205.2,903.6C1205.8,903.1 1206.4,897.7 1207.0,891.2C1207.6,885.6 1208.1,863.9 1208.6,854.9C1209.0,847.4 1209.5,839.0 1209.9,836.8C1210.2,835.0 1210.6,833.4 1210.9,833.4C1211.3,833.4 1211.6,835.0 1212.0,836.8C1212.4,839.0 1212.8,847.4 1213.3,854.9C1213.8,863.9 1214.3,885.3 1214.8,891.2C1215.3,897.0 1215.9,902.0 1216.4,902.8C1217.2,904.2 1218.1,904.9 1219.0,904.9C1220.9,904.9 1222.8,904.9 1224.7,904.9C1225.5,904.9 1226.4,906.1 1227.2,906.7C1228.3,907.5 1229.3,909.3 1230.4,909.3C1231.2,909.3 1232.1,908.5 1233.0,907.2C1233.6,906.2 1234.3,901.3 1235.0,896.4C1235.9,890.1 1236.8,875.2 1237.6,865.3C1238.5,855.3 1239.3,843.5 1240.2,836.8C1241.1,830.1 1241.9,823.9 1242.8,821.2C1243.8,818.0 1244.9,815.6 1245.9,814.7C1247.0,813.8 1248.2,812.9 1249.3,812.9C1250.3,812.9 1251.3,813.7 1252.4,814.7C1253.1,815.5 1253.8,818.6 1254.5,821.2C1255.3,824.5 1256.2,829.5 1257.0,834.2C1257.9,838.9 1258.8,844.4 1259.6,849.7C1260.3,854.0 1261.0,860.0 1261.7,862.7C1262.3,865.0 1262.9,867.9 1263.5,867.9C1264.0,867.9 1264.6,864.2 1265.1,860.1C1265.6,856.0 1266.1,839.3 1266.6,831.6C1267.2,823.9 1267.7,814.6 1268.2,812.1C1268.8,809.3 1269.4,807.0 1270.0,807.0C1270.6,807.0 1271.2,809.3 1271.8,812.1C1272.3,814.6 1272.8,824.7 1273.4,831.6C1274.0,839.6 1274.6,853.2 1275.2,857.5C1276.0,863.6 1276.9,867.0 1277.8,869.1C1279.1,872.4 1280.4,873.0 1281.7,875.6C1283.0,878.3 1284.2,882.5 1285.5,886.0C1286.8,889.4 1288.1,893.4 1289.4,896.4C1290.7,899.3 1292.0,903.4 1293.3,904.1C1294.6,904.9 1295.9,905.4 1297.2,905.4C1299.8,905.4 1302.4,905.2 1305.0,905.2C1306.7,905.2 1308.4,905.2 1310.2,905.4C1311.0,905.5 1311.9,908.0 1312.8,909.3C1313.9,911.0 1315.0,914.5 1316.1,914.5C1316.8,914.5 1317.6,911.8 1318.3,909.3C1319.0,906.9 1319.7,899.6 1320.4,896.4C1321.1,893.1 1321.7,888.6 1322.4,888.6C1323.0,888.6 1323.6,891.4 1324.2,893.8C1324.9,896.4 1325.6,903.6 1326.3,906.7C1326.9,909.4 1327.5,913.2 1328.1,913.2C1329.0,913.2 1329.9,911.7 1330.7,910.6C1331.8,909.3 1332.8,905.8 1333.8,905.4C1334.7,905.1 1335.6,904.9 1336.4,904.9C1337.5,904.9 1338.7,907.8 1339.8,909.3C1341.1,911.1 1342.4,913.5 1343.7,915.0C1345.0,916.5 1346.3,918.5 1347.6,918.9C1348.9,919.3 1350.2,919.7 1351.5,919.7C1352.7,919.7 1354.0,919.2 1355.3,918.4C1355.9,918.0 1356.5,915.1 1357.2,911.9C1357.7,909.1 1358.2,898.9 1358.7,896.4C1359.3,893.4 1359.9,890.8 1360.5,890.6C1361.4,890.5 1362.2,890.4 1363.1,890.4C1364.2,890.4 1365.4,891.9 1366.5,891.9C1367.3,891.9 1368.2,891.9 1369.1,891.7C1369.7,891.6 1370.3,885.1 1370.9,880.8C1371.5,876.5 1372.1,867.1 1372.7,865.3C1373.4,863.1 1374.1,861.6 1374.8,861.4C1376.1,861.0 1377.4,861.1 1378.7,860.9C1379.9,860.6 1381.2,860.6 1382.5,860.1C1383.4,859.8 1384.3,856.5 1385.1,854.9C1386.0,853.3 1386.9,850.5 1387.7,850.5C1388.4,850.5 1389.1,852.5 1389.8,854.9C1390.4,857.0 1391.0,866.0 1391.6,870.4C1392.3,875.4 1393.0,883.4 1393.7,883.4C1394.5,883.4 1395.4,882.0 1396.3,880.8C1397.1,879.6 1398.0,875.3 1398.9,874.3C1399.7,873.4 1400.6,872.5 1401.5,872.5C1402.2,872.5 1403.0,874.9 1403.8,876.9C1404.6,879.2 1405.5,885.1 1406.4,888.6C1407.1,891.4 1407.8,892.9 1408.5,896.4C1409.1,899.3 1409.7,906.3 1410.3,909.3C1411.0,912.7 1411.6,916.8 1412.3,917.1C1413.2,917.4 1414.1,917.6 1414.9,917.6C1416.0,917.6 1417.2,915.8 1418.3,915.0C1419.2,914.4 1420.0,913.2 1420.9,913.2C1421.7,913.2 1422.4,915.2 1423.2,917.1C1423.9,918.8 1424.6,924.0 1425.3,926.1C1425.9,928.0 1426.5,930.5 1427.1,930.5C1427.6,930.5 1428.1,927.9 1428.7,926.1C1429.3,924.1 1429.9,919.8 1430.5,918.4C1431.3,916.4 1432.2,914.5 1433.1,914.5C1434.2,914.5 1435.3,915.3 1436.4,915.8C1437.5,916.2 1438.5,917.1 1439.5,917.1C1440.4,917.1 1441.3,915.0 1442.1,913.2C1442.8,911.8 1443.5,907.8 1444.2,906.7C1445.1,905.4 1445.9,904.1 1446.8,904.1C1447.7,904.1 1448.5,905.9 1449.4,906.7C1450.4,907.7 1451.5,909.1 1452.5,909.3C1453.8,909.6 1455.1,909.8 1456.4,909.8C1457.7,909.8 1459.0,909.8 1460.3,909.8C1461.6,909.8 1462.9,908.4 1464.2,908.0C1465.4,907.6 1466.7,907.2 1468.0,907.2C1469.6,907.2 1471.1,907.5 1472.7,908.0C1473.6,908.3 1474.4,909.8 1475.3,911.9C1475.9,913.3 1476.5,918.6 1477.1,921.0C1477.8,923.6 1478.5,927.4 1479.2,927.4C1479.9,927.4 1480.7,926.2 1481.5,925.4C1482.5,924.3 1483.4,922.0 1484.3,921.0C1485.4,919.8 1486.4,918.9 1487.5,918.4C1488.8,917.7 1490.1,917.7 1491.3,917.1C1492.4,916.5 1493.4,915.3 1494.5,914.0C1495.6,912.5 1496.7,910.4 1497.8,908.0C1498.9,905.6 1500.1,901.7 1501.2,898.9C1502.1,896.8 1502.9,893.7 1503.8,893.0C1504.6,892.3 1505.3,891.7 1506.1,891.7C1507.0,891.7 1507.8,893.8 1508.7,895.0C1509.7,896.4 1510.6,898.4 1511.5,899.5C1512.6,900.6 1513.6,901.4 1514.7,902.0C1515.8,902.7 1516.9,903.6 1518.0,903.6C1518.6,903.6 1519.2,902.4 1519.8,900.2C1520.3,898.7 1520.7,882.6 1521.1,870.4C1521.6,858.3 1522.0,832.0 1522.4,823.8C1523.0,814.1 1523.5,805.7 1524.0,804.4C1524.6,802.8 1525.2,801.8 1525.8,801.8C1526.6,801.8 1527.4,804.3 1528.1,805.7C1529.0,807.2 1529.9,809.6 1530.7,810.9C1531.8,812.5 1533.0,813.4 1534.1,814.7C1535.2,816.0 1536.3,816.8 1537.5,818.6C1538.5,820.3 1539.5,822.9 1540.6,826.4C1541.4,829.3 1542.3,835.3 1543.2,839.4C1543.9,842.6 1544.5,848.4 1545.2,848.4C1545.8,848.4 1546.4,843.8 1547.0,839.4C1547.7,834.9 1548.3,822.6 1548.9,813.5C1549.5,803.0 1550.2,788.4 1550.9,779.8C1551.8,769.0 1552.7,759.6 1553.5,753.9C1554.4,748.1 1555.2,742.6 1556.1,740.9C1556.8,739.6 1557.5,738.3 1558.2,738.3C1558.9,738.3 1559.6,739.5 1560.3,740.9C1561.0,742.5 1561.8,748.8 1562.6,753.9C1563.5,759.5 1564.3,768.1 1565.2,774.6C1566.0,781.0 1566.9,788.4 1567.8,792.7C1568.9,798.4 1570.0,802.0 1571.1,805.7C1572.2,809.1 1573.2,813.0 1574.2,814.7C1575.4,816.6 1576.5,818.6 1577.6,818.6C1578.5,818.6 1579.3,816.2 1580.2,814.7C1581.1,813.3 1581.9,810.5 1582.8,809.6C1583.7,808.7 1584.5,807.8 1585.4,807.8C1586.3,807.8 1587.1,809.1 1588.0,810.9C1588.8,812.4 1589.5,818.2 1590.3,823.8C1591.0,828.8 1591.7,835.8 1592.4,844.5C1593.0,852.2 1593.6,864.4 1594.2,875.6C1594.7,885.2 1595.2,902.8 1595.8,906.7C1596.4,911.3 1597.0,915.0 1597.6,915.0C1598.1,915.0 1598.6,910.7 1599.1,906.7C1599.7,902.0 1600.3,887.6 1600.9,880.8C1601.5,874.0 1602.1,866.1 1602.7,864.0C1603.3,861.9 1603.9,860.1 1604.5,860.1C1605.1,860.1 1605.7,864.7 1606.3,867.9C1607.1,871.9 1607.9,879.6 1608.7,883.4C1609.5,887.6 1610.4,893.2 1611.2,893.2C1611.8,893.2 1612.5,888.4 1613.1,883.4C1613.8,877.7 1614.4,857.2 1615.1,844.5C1616.0,828.6 1616.9,809.7 1617.7,797.9C1618.6,786.1 1619.4,774.7 1620.3,769.4C1621.0,765.1 1621.7,761.2 1622.4,760.3C1623.0,759.6 1623.6,759.0 1624.2,759.0C1624.8,759.0 1625.4,760.8 1626.0,762.9C1626.7,765.3 1627.4,775.3 1628.1,782.4C1628.8,789.4 1629.5,800.1 1630.2,805.7C1630.9,811.2 1631.5,816.5 1632.2,818.6C1633.1,821.3 1634.0,822.1 1634.8,823.8C1635.7,825.5 1636.5,826.0 1637.4,829.0C1638.1,831.3 1638.8,840.6 1639.5,849.7C1639.9,855.9 1640.4,868.4 1640.9,875.6C1641.4,883.7 1641.9,891.5 1642.4,896.4C1643.0,902.0 1643.6,906.9 1644.2,909.3C1644.9,912.1 1645.6,914.2 1646.3,915.0C1647.4,916.2 1648.4,917.1 1649.4,917.1C1650.6,917.1 1651.7,916.4 1652.8,915.8C1653.8,915.2 1654.9,913.7 1655.9,912.4C1656.9,911.1 1658.0,909.4 1659.0,908.0C1659.9,906.9 1660.7,905.2 1661.6,904.9C1662.7,904.5 1663.8,904.1 1665.0,904.1C1667.1,904.1 1669.3,904.7 1671.5,904.9C1673.2,905.1 1674.9,905.1 1676.6,905.4C1677.5,905.6 1678.4,906.8 1679.2,908.0C1679.9,909.0 1680.6,911.6 1681.3,913.2C1681.9,914.6 1682.5,917.1 1683.1,917.1C1683.8,917.1 1684.5,915.6 1685.2,914.5C1686.0,913.2 1686.7,909.7 1687.5,908.8C1688.2,908.0 1688.9,907.2 1689.6,907.2C1690.3,907.2 1691.0,908.3 1691.7,909.3C1692.4,910.4 1693.2,913.9 1694.0,915.8C1694.7,917.5 1695.4,920.4 1696.1,920.4C1696.7,920.4 1697.3,918.7 1697.9,917.1C1698.4,915.7 1698.9,910.6 1699.4,909.3C1700.2,907.3 1701.0,905.6 1701.8,905.4C1703.7,905.0 1705.7,904.9 1707.7,904.9C1709.9,904.9 1712.0,905.1 1714.2,905.4C1715.3,905.6 1716.4,907.0 1717.6,908.8C1718.3,910.0 1719.1,914.8 1719.9,917.1C1720.6,919.1 1721.3,922.2 1722.0,922.2C1722.6,922.2 1723.2,920.2 1723.8,918.4C1724.3,916.8 1724.8,912.1 1725.3,910.6C1726.1,908.3 1726.9,906.2 1727.7,905.9C1728.5,905.6 1729.4,905.4 1730.3,905.4C1731.4,905.4 1732.5,906.8 1733.6,907.2C1734.7,907.6 1735.7,908.0 1736.7,908.0C1737.6,908.0 1738.5,906.0 1739.3,905.4C1740.3,904.8 1741.2,904.1 1742.2,904.1C1743.2,904.1 1744.2,905.0 1745.3,905.4C1746.6,905.9 1747.9,906.7 1749.2,906.7C1750.9,906.7 1752.6,906.3 1754.3,906.2C1756.9,906.1 1759.5,906.1 1762.1,905.9C1763.8,905.8 1765.6,904.9 1767.3,904.9C1769.9,904.9 1772.5,904.9 1775.1,904.9C1778.5,904.9 1782.0,904.7 1785.4,904.6C1788.5,904.6 1791.5,904.6 1794.5,904.4C1795.2,904.3 1795.9,903.8 1796.6,902.8C1797.2,902.0 1797.8,895.4 1798.4,892.5C1798.9,890.0 1799.4,886.4 1800.0,886.0C1800.5,885.5 1801.0,885.2 1801.5,885.2C1802.0,885.2 1802.5,888.4 1803.1,891.2C1803.6,893.9 1804.1,901.3 1804.6,904.1C1805.1,907.0 1805.7,910.0 1806.2,910.6C1806.8,911.3 1807.4,911.9 1808.0,911.9C1808.7,911.9 1809.4,909.7 1810.0,908.8C1810.9,907.6 1811.8,905.8 1812.6,905.4C1813.3,905.1 1814.0,904.9 1814.7,904.9C1815.3,904.9 1815.9,906.8 1816.5,908.0C1817.2,909.4 1817.9,912.0 1818.6,913.2C1819.5,914.7 1820.3,915.8 1821.2,916.5C1822.2,917.4 1823.3,917.9 1824.3,918.4C1825.3,918.9 1826.4,919.1 1827.4,919.7C1828.4,920.2 1829.3,921.3 1830.3,922.2C1831.1,923.1 1832.0,924.8 1832.8,924.8C1833.7,924.8 1834.6,924.8 1835.4,924.8C1836.5,924.8 1837.5,922.7 1838.5,922.2C1839.4,921.9 1840.3,921.5 1841.1,921.5C1841.8,921.5 1842.5,922.6 1843.2,923.5C1844.0,924.6 1844.8,927.6 1845.5,928.7C1846.1,929.5 1846.6,930.5 1847.1,930.5C1847.7,930.5 1848.3,928.5 1848.9,926.1C1849.3,924.4 1849.8,917.4 1850.2,914.5C1850.7,911.0 1851.2,907.0 1851.8,906.2C1852.4,905.3 1853.0,904.6 1853.6,904.6C1854.2,904.6 1854.8,906.4 1855.4,908.0C1856.0,909.6 1856.6,914.7 1857.2,917.1C1857.9,919.7 1858.6,923.5 1859.3,923.5C1859.9,923.5 1860.5,922.3 1861.1,921.0C1861.6,919.8 1862.1,914.8 1862.6,913.2C1863.4,910.7 1864.2,908.9 1865.0,908.0C1865.9,906.9 1866.9,906.3 1867.8,905.9C1869.3,905.4 1870.8,905.1 1872.2,904.9C1874.4,904.6 1876.5,904.4 1878.7,904.4C1882.2,904.4 1885.6,904.4 1889.1,904.4C1892.5,904.4 1896.0,904.6 1899.4,904.6C1902.9,904.6 1906.3,904.6 1909.8,904.4C1911.1,904.3 1912.4,904.0 1913.7,903.6C1914.5,903.3 1915.4,902.7 1916.3,902.0C1917.1,901.4 1918.0,900.3 1918.9,899.5L1918.9,941.6L155.2,941.6Z" fill="#60a58f" fill-opacity="0.25"/><path d="M155.2,955.9C155.5,945.3 155.8,928.8 156.2,924.1C156.7,915.9 157.3,911.5 157.9,909.4C158.7,906.4 159.5,904.2 160.3,904.0C161.8,903.6 163.3,903.5 164.8,903.5C168.0,903.3 171.3,903.2 174.6,903.2C176.7,903.2 178.7,903.4 180.8,903.7C181.6,903.9 182.4,904.6 183.2,905.7C183.8,906.5 184.4,910.0 184.9,911.9C185.6,913.9 186.3,917.2 186.9,917.5C188.1,918.0 189.4,918.2 190.6,918.2C192.1,918.2 193.6,918.0 195.0,917.5C195.6,917.3 196.2,914.9 196.8,913.1C197.3,911.2 197.9,906.7 198.5,905.7C199.3,904.2 200.1,903.0 200.9,903.0C201.8,903.0 202.7,903.7 203.6,904.5C204.8,905.4 205.9,908.8 207.1,911.9C208.2,914.7 209.2,918.7 210.3,922.9C211.1,926.1 211.9,929.7 212.8,934.0C213.2,936.1 213.6,938.1 214.0,941.4C214.7,946.9 215.4,961.4 216.1,968.9C216.9,978.2 217.8,989.6 218.7,992.2C219.3,994.3 220.0,996.1 220.7,996.1C221.6,996.1 222.5,994.2 223.3,992.2C224.4,989.6 225.6,981.3 226.7,974.1C227.5,969.1 228.2,962.3 229.0,955.9C229.6,951.3 230.1,950.1 230.7,941.4C230.9,938.8 231.0,927.7 231.2,924.1C231.5,916.9 231.9,911.4 232.2,909.4C232.7,906.4 233.2,904.0 233.7,904.0C234.2,904.0 234.6,906.4 235.1,909.4C235.5,911.4 235.8,918.9 236.1,924.1C236.5,929.5 236.8,937.9 237.1,941.4C237.4,944.8 237.8,946.8 238.1,948.8C238.6,951.6 239.1,954.4 239.6,955.6C240.2,957.4 240.9,958.7 241.5,959.1C242.6,959.7 243.7,960.1 244.7,960.1C245.7,960.1 246.7,959.8 247.7,959.3C248.2,959.1 248.7,958.0 249.2,956.1C249.4,955.2 249.7,951.8 249.9,948.8C250.1,946.8 250.2,944.8 250.4,941.4C250.6,937.9 250.7,927.3 250.9,924.1C251.3,916.3 251.7,911.0 252.1,909.4C252.9,906.1 253.8,904.1 254.6,904.0C256.6,903.6 258.7,903.5 260.7,903.5C263.2,903.5 265.7,903.5 268.1,903.5C270.2,903.5 272.2,903.6 274.3,904.0C274.8,904.1 275.4,906.7 276.0,909.4C276.5,911.7 277.0,919.2 277.5,921.7C278.2,925.5 278.9,928.8 279.7,929.6C279.9,929.8 280.1,930.0 280.3,930.0C280.8,930.0 281.4,925.8 281.9,923.4C282.6,920.5 283.2,917.9 283.9,913.5C284.6,909.1 285.2,902.4 285.9,893.7C286.4,886.7 286.9,875.9 287.5,863.9C287.9,853.3 288.4,839.8 288.9,824.2C289.2,813.1 289.5,797.7 289.9,784.5C290.2,771.2 290.5,752.3 290.8,744.8C291.2,737.2 291.5,730.8 291.8,728.9C292.2,726.7 292.6,724.9 293.0,724.9C293.5,724.9 294.0,726.6 294.4,728.9C294.9,731.2 295.3,745.8 295.8,754.7C296.5,767.4 297.1,782.7 297.8,794.4C298.5,806.2 299.1,816.3 299.8,826.2C300.4,836.0 301.1,846.3 301.8,854.0C302.4,861.7 303.1,868.3 303.8,873.8C304.4,879.2 305.1,885.3 305.7,887.7C306.7,891.3 307.7,893.7 308.7,894.6C309.8,895.7 311.0,896.6 312.1,896.6C312.7,896.6 313.4,893.2 314.1,889.7C314.6,886.9 315.1,877.0 315.7,873.8C316.3,869.8 317.0,866.0 317.6,865.5C318.6,864.7 319.6,864.3 320.6,864.3C321.6,864.3 322.6,865.5 323.6,866.9C324.6,868.2 325.6,871.7 326.6,875.8C327.2,878.5 327.9,884.0 328.6,887.7C329.6,893.3 330.5,900.1 331.5,903.6C332.5,907.1 333.5,910.2 334.5,911.5C335.8,913.4 337.2,915.1 338.5,915.1C339.8,915.1 341.1,913.9 342.5,913.1C343.8,912.4 345.1,911.3 346.4,910.5C347.6,909.8 348.8,909.0 350.0,908.5C350.6,908.3 351.2,908.0 351.8,908.0C352.4,908.0 353.0,911.9 353.6,914.5C354.4,917.8 355.2,925.6 356.0,927.4C356.8,929.5 357.7,931.3 358.6,931.3C359.7,931.3 360.8,930.4 361.9,929.5C363.0,928.7 364.0,926.9 365.0,924.8C366.1,922.6 367.3,916.9 368.4,914.5C369.2,912.8 369.9,910.6 370.7,910.6C371.4,910.6 372.1,910.8 372.8,911.1C373.7,911.5 374.5,916.9 375.4,918.4C376.4,920.2 377.5,921.3 378.5,922.2C379.6,923.3 380.7,924.0 381.9,924.8C383.0,925.7 384.1,926.5 385.2,927.4C386.3,928.3 387.3,929.5 388.3,930.5C389.4,931.6 390.4,933.9 391.4,933.9C392.0,933.9 392.5,930.5 393.0,927.4C393.5,924.4 394.0,914.4 394.6,911.9C395.2,908.5 395.9,905.5 396.6,905.4C399.2,905.0 401.8,904.9 404.4,904.9C406.8,904.9 409.2,905.4 411.7,905.4C414.2,905.4 416.8,905.1 419.4,904.9C422.0,904.7 424.6,904.4 427.2,904.4C429.8,904.4 432.4,904.4 435.0,904.4C438.0,904.4 441.0,905.2 444.0,905.2C446.1,905.2 448.3,904.1 450.4,904.1C452.1,904.1 453.8,904.9 455.5,904.9C458.6,904.9 461.6,904.9 464.6,904.9C465.2,904.9 465.8,907.1 466.4,909.3C466.9,911.2 467.5,920.0 468.0,921.0C468.8,922.6 469.7,923.5 470.6,923.5C471.6,923.5 472.6,923.2 473.7,922.8C474.8,922.3 475.9,921.6 477.1,919.7C477.7,918.6 478.3,911.3 478.9,909.3C479.6,907.0 480.2,904.7 480.9,904.6C482.8,904.4 484.7,904.4 486.6,904.4C490.1,904.4 493.5,904.6 497.0,904.6C500.9,904.7 504.8,904.7 508.6,904.9C509.9,905.0 511.2,906.5 512.5,907.2C513.6,907.8 514.6,908.8 515.6,908.8C517.6,908.8 519.6,908.0 521.6,908.0C523.3,908.0 525.1,908.4 526.8,908.8C527.9,909.0 529.0,909.8 530.2,909.8C531.0,909.8 531.9,907.9 532.8,907.2C533.6,906.5 534.5,905.4 535.3,905.4C536.8,905.4 538.3,906.0 539.7,906.2C541.9,906.5 544.1,907.0 546.2,907.0C547.9,907.0 549.7,906.6 551.4,906.2C552.7,905.9 554.0,904.6 555.3,904.6C556.1,904.6 557.0,905.3 557.9,906.2C558.5,906.8 559.1,910.8 559.7,911.9C560.4,913.1 561.1,914.5 561.8,914.5C563.1,914.5 564.4,912.7 565.6,911.9C566.9,911.1 568.2,910.4 569.5,909.8C570.8,909.3 572.1,908.5 573.4,908.5C574.5,908.5 575.5,908.6 576.5,908.8C577.2,908.9 577.9,911.9 578.6,913.2C579.3,914.5 580.0,916.5 580.7,916.5C581.4,916.5 582.2,914.5 583.0,913.2C583.9,911.8 584.7,908.8 585.6,908.0C586.7,906.9 587.8,906.1 589.0,905.9C590.7,905.6 592.4,905.8 594.1,905.4C594.8,905.3 595.5,902.3 596.2,898.9C596.8,896.0 597.4,885.3 598.0,880.8C598.6,876.3 599.2,871.2 599.8,869.9C600.4,868.8 600.9,867.9 601.4,867.9C602.0,867.9 602.6,869.8 603.2,871.7C603.8,873.7 604.4,880.5 605.0,883.4C605.7,886.7 606.4,889.8 607.1,891.2C608.4,893.7 609.7,894.5 611.0,895.8C612.7,897.6 614.4,898.8 616.2,900.2C617.9,901.7 619.6,903.5 621.4,904.6C622.6,905.5 623.9,906.7 625.2,906.7C627.0,906.7 628.7,906.4 630.4,906.2C631.7,906.0 633.0,905.4 634.3,905.4C635.0,905.4 635.7,906.7 636.4,908.0C637.0,909.1 637.6,913.0 638.2,914.5C638.9,916.2 639.6,918.4 640.3,918.4C641.0,918.4 641.8,916.8 642.6,915.8C643.5,914.5 644.5,911.9 645.4,910.6C646.5,909.2 647.5,907.8 648.5,907.2C650.3,906.3 652.0,905.6 653.7,905.4C656.3,905.1 658.9,904.9 661.5,904.9C662.4,904.9 663.2,906.4 664.1,907.2C664.8,907.9 665.5,909.3 666.2,909.3C666.9,909.3 667.7,908.6 668.5,908.0C669.4,907.4 670.2,905.7 671.1,905.4C672.6,904.9 674.2,904.6 675.8,904.6C677.5,904.6 679.2,904.9 680.9,905.4C681.8,905.7 682.7,907.0 683.5,908.0C684.4,909.0 685.2,911.4 686.1,911.4C687.0,911.4 687.8,909.0 688.7,908.0C689.6,907.0 690.4,905.7 691.3,905.4C693.0,904.9 694.8,904.6 696.5,904.6C697.8,904.6 699.1,904.9 700.4,905.4C701.0,905.7 701.6,908.1 702.2,910.6C702.7,912.8 703.2,920.5 703.7,922.2C704.6,925.1 705.5,927.0 706.3,927.4C707.8,928.2 709.3,928.7 710.7,928.7C711.8,928.7 712.8,928.5 713.8,928.0C714.4,927.7 714.9,923.0 715.4,919.7C715.8,916.9 716.2,910.9 716.7,909.3C717.3,907.0 717.9,904.9 718.5,904.9C719.2,904.9 719.9,904.9 720.6,904.9C721.3,904.9 722.1,907.7 722.9,909.3C724.0,911.6 725.1,914.6 726.3,917.1C727.4,919.6 728.5,923.0 729.6,924.3C730.7,925.6 731.7,926.9 732.8,926.9C734.4,926.9 736.1,924.8 737.8,922.2C738.8,920.7 739.8,915.0 740.9,911.9C741.7,909.3 742.6,905.4 743.5,904.9C744.3,904.4 745.2,904.1 746.1,904.1C746.8,904.1 747.4,906.4 748.1,908.0C749.0,910.0 749.9,915.8 750.7,915.8C751.4,915.8 752.1,915.8 752.8,915.8C753.7,915.8 754.5,912.2 755.4,910.6C756.4,908.7 757.5,906.2 758.5,905.4C759.8,904.4 761.1,904.0 762.4,903.6C764.5,903.0 766.7,902.5 768.9,902.3C771.0,902.2 773.2,902.0 775.3,902.0C776.6,902.0 777.9,902.3 779.2,902.8C780.1,903.1 780.9,905.8 781.8,908.0C782.7,910.2 783.5,914.5 784.4,917.1C785.4,920.1 786.5,923.2 787.5,924.8C788.6,926.6 789.8,928.7 790.9,928.7C792.0,928.7 793.1,928.4 794.2,928.0C795.3,927.5 796.3,925.4 797.4,923.5C798.2,922.0 799.1,919.7 800.0,917.1C800.6,915.0 801.3,910.7 802.0,909.3C802.8,907.8 803.6,906.2 804.4,906.2C805.0,906.2 805.7,907.6 806.4,908.8C807.1,910.0 807.8,913.8 808.5,915.0C809.3,916.4 810.1,917.9 810.8,917.9C811.7,917.9 812.6,915.4 813.4,914.5C814.5,913.3 815.7,911.4 816.8,911.4C817.7,911.4 818.5,911.6 819.4,911.9C820.7,912.3 822.0,914.2 823.3,915.0C824.6,915.8 825.9,917.1 827.1,917.1C828.4,917.1 829.7,916.9 831.0,916.5C831.9,916.3 832.8,913.9 833.6,911.9C834.3,910.3 835.0,906.0 835.7,905.4C836.6,904.6 837.4,904.1 838.3,904.1C839.2,904.1 840.0,905.9 840.9,907.2C841.7,908.4 842.4,911.9 843.2,911.9C844.1,911.9 844.9,909.9 845.8,908.8C846.7,907.6 847.5,905.2 848.4,904.9C849.9,904.4 851.5,904.1 853.1,904.1C856.1,904.1 859.1,904.1 862.1,904.1C864.7,904.1 867.3,904.4 869.9,904.9C870.8,905.1 871.6,905.6 872.5,906.7C873.0,907.4 873.5,910.2 874.0,913.2C874.4,915.2 874.7,920.8 875.1,922.2C875.6,924.3 876.1,926.1 876.6,926.1C877.4,926.1 878.2,925.6 879.0,924.8C879.7,924.2 880.3,920.6 881.0,919.7C881.8,918.6 882.6,917.6 883.4,917.6C884.1,917.6 884.8,919.1 885.4,921.0C886.0,922.5 886.6,929.1 887.2,932.6C887.8,935.7 888.3,940.3 888.8,941.2C889.2,941.9 889.7,942.5 890.1,942.5C890.4,942.5 890.8,940.0 891.1,937.8C891.6,935.0 892.0,926.8 892.4,922.2C893.0,916.9 893.5,909.5 894.0,908.0C894.6,906.2 895.2,904.9 895.8,904.9C896.5,904.9 897.2,906.5 897.9,908.0C898.5,909.4 899.1,914.1 899.7,915.8C900.6,918.2 901.4,921.0 902.3,921.0C903.6,921.0 904.9,919.5 906.2,918.4C907.5,917.2 908.8,914.9 910.0,913.2C911.2,911.7 912.3,909.6 913.4,908.8C914.5,908.0 915.5,907.2 916.5,907.2C917.8,907.2 919.1,908.9 920.4,909.3C921.3,909.5 922.1,909.8 923.0,909.8C923.9,909.8 924.7,908.0 925.6,907.2C926.5,906.4 927.3,904.9 928.2,904.9C929.1,904.9 929.9,905.6 930.8,906.2C931.6,906.8 932.5,909.8 933.4,909.8C934.2,909.8 935.1,909.6 936.0,909.3C936.8,909.0 937.7,907.2 938.5,906.7C939.7,906.1 940.8,905.4 941.9,905.4C942.8,905.4 943.6,906.4 944.5,908.0C945.1,909.1 945.7,917.5 946.3,922.2C946.8,925.7 947.2,932.1 947.6,932.6C948.3,933.5 949.0,933.9 949.7,933.9C950.1,933.9 950.6,928.4 951.0,924.8C951.4,921.3 951.8,914.2 952.3,911.9C953.0,908.3 953.7,904.9 954.4,904.9C955.1,904.9 955.9,905.5 956.7,906.2C957.5,906.9 958.4,909.7 959.3,910.6C960.1,911.5 961.0,912.4 961.9,912.4C963.2,912.4 964.5,910.3 965.8,909.3C967.0,908.3 968.3,906.8 969.6,906.2C971.4,905.4 973.1,904.6 974.8,904.6C975.7,904.6 976.5,906.5 977.4,908.0C978.3,909.5 979.1,915.0 980.0,915.0C981.7,915.0 983.5,914.5 985.2,914.5C986.5,914.5 987.8,914.6 989.1,915.0C989.8,915.2 990.5,919.0 991.1,922.2C991.7,925.1 992.3,931.6 993.0,935.2C993.4,937.8 993.8,941.9 994.2,941.9C994.7,941.9 995.1,941.2 995.5,940.4C996.1,939.2 996.8,932.9 997.4,930.0C998.2,925.9 999.1,921.8 1000.0,919.7C1001.1,916.9 1002.2,914.9 1003.3,914.0C1004.6,912.9 1005.9,911.9 1007.2,911.9C1008.2,911.9 1009.3,913.2 1010.3,914.0C1011.4,914.8 1012.6,917.1 1013.7,917.1C1014.5,917.1 1015.4,917.1 1016.3,917.1C1017.1,917.1 1018.0,914.5 1018.9,913.2C1020.0,911.5 1021.1,909.1 1022.2,908.0C1023.6,906.6 1025.1,904.9 1026.5,904.9C1028.2,904.9 1029.9,905.1 1031.7,905.4C1032.5,905.6 1033.4,906.9 1034.2,909.3C1034.7,910.5 1035.1,914.9 1035.5,919.7C1036.0,924.2 1036.4,930.7 1036.8,941.4C1036.9,944.1 1037.0,951.8 1037.1,953.1C1037.5,958.3 1038.0,959.9 1038.4,960.9C1039.0,962.2 1039.6,963.2 1040.2,963.2C1041.0,963.2 1041.8,962.6 1042.6,962.0C1043.4,961.4 1044.1,959.9 1044.9,958.5C1045.7,957.1 1046.4,955.4 1047.2,953.1C1047.7,951.5 1048.3,949.2 1048.8,946.9C1049.2,945.3 1049.5,943.8 1049.9,941.4C1050.2,939.4 1050.5,934.6 1050.8,932.6C1051.6,927.7 1052.4,924.0 1053.2,922.2C1054.2,920.0 1055.2,918.3 1056.3,917.9C1057.3,917.4 1058.3,917.1 1059.4,917.1C1060.5,917.1 1061.6,918.8 1062.8,919.7C1063.9,920.5 1065.0,922.2 1066.1,922.2C1066.9,922.2 1067.7,921.0 1068.5,919.7C1069.1,918.5 1069.8,913.4 1070.5,911.9C1071.4,910.0 1072.2,908.0 1073.1,908.0C1073.8,908.0 1074.5,909.4 1075.2,910.6C1076.0,911.9 1076.7,915.9 1077.5,917.1C1078.4,918.4 1079.2,919.7 1080.1,919.7C1080.8,919.7 1081.5,916.5 1082.2,914.5C1082.8,912.7 1083.4,909.0 1084.0,908.0C1084.9,906.6 1085.7,905.6 1086.6,905.4C1088.1,905.1 1089.7,904.9 1091.2,904.9C1092.5,904.9 1093.8,905.3 1095.1,905.9C1096.0,906.3 1096.9,908.8 1097.7,909.8C1098.4,910.6 1099.1,911.9 1099.8,911.9C1100.7,911.9 1101.5,909.7 1102.4,908.8C1103.4,907.7 1104.5,905.9 1105.5,905.9C1107.2,905.9 1108.9,906.0 1110.7,906.2C1112.4,906.3 1114.1,907.6 1115.8,908.0C1117.1,908.3 1118.4,908.8 1119.7,908.8C1120.6,908.8 1121.5,907.4 1122.3,906.7C1123.2,906.1 1124.1,904.9 1124.9,904.9C1128.8,904.7 1132.7,904.6 1136.6,904.6C1140.9,904.6 1145.2,904.6 1149.5,904.6C1153.4,904.6 1157.3,904.6 1161.2,904.6C1162.5,904.6 1163.8,904.5 1165.1,904.1C1165.8,903.9 1166.5,901.0 1167.2,898.9C1167.8,897.2 1168.4,894.0 1169.0,892.5C1169.7,890.7 1170.3,888.6 1171.0,888.6C1171.8,888.6 1172.6,889.2 1173.4,889.9C1174.2,890.6 1175.1,893.5 1176.0,895.0C1177.1,897.0 1178.2,898.5 1179.3,900.2C1180.5,902.0 1181.6,904.0 1182.7,905.4C1183.7,906.7 1184.8,908.5 1185.8,908.8C1187.1,909.1 1188.4,909.3 1189.7,909.3C1191.0,909.3 1192.3,908.0 1193.6,907.2C1194.9,906.5 1196.2,905.0 1197.5,904.9C1199.2,904.7 1200.9,904.8 1202.6,904.6C1203.5,904.6 1204.4,904.3 1205.2,903.6C1205.8,903.1 1206.4,897.7 1207.0,891.2C1207.6,885.6 1208.1,863.9 1208.6,854.9C1209.0,847.4 1209.5,839.0 1209.9,836.8C1210.2,835.0 1210.6,833.4 1210.9,833.4C1211.3,833.4 1211.6,835.0 1212.0,836.8C1212.4,839.0 1212.8,847.4 1213.3,854.9C1213.8,863.9 1214.3,885.3 1214.8,891.2C1215.3,897.0 1215.9,902.0 1216.4,902.8C1217.2,904.2 1218.1,904.9 1219.0,904.9C1220.9,904.9 1222.8,904.9 1224.7,904.9C1225.5,904.9 1226.4,906.1 1227.2,906.7C1228.3,907.5 1229.3,909.3 1230.4,909.3C1231.2,909.3 1232.1,908.5 1233.0,907.2C1233.6,906.2 1234.3,901.3 1235.0,896.4C1235.9,890.1 1236.8,875.2 1237.6,865.3C1238.5,855.3 1239.3,843.5 1240.2,836.8C1241.1,830.1 1241.9,823.9 1242.8,821.2C1243.8,818.0 1244.9,815.6 1245.9,814.7C1247.0,813.8 1248.2,812.9 1249.3,812.9C1250.3,812.9 1251.3,813.7 1252.4,814.7C1253.1,815.5 1253.8,818.6 1254.5,821.2C1255.3,824.5 1256.2,829.5 1257.0,834.2C1257.9,838.9 1258.8,844.4 1259.6,849.7C1260.3,854.0 1261.0,860.0 1261.7,862.7C1262.3,865.0 1262.9,867.9 1263.5,867.9C1264.0,867.9 1264.6,864.2 1265.1,860.1C1265.6,856.0 1266.1,839.3 1266.6,831.6C1267.2,823.9 1267.7,814.6 1268.2,812.1C1268.8,809.3 1269.4,807.0 1270.0,807.0C1270.6,807.0 1271.2,809.3 1271.8,812.1C1272.3,814.6 1272.8,824.7 1273.4,831.6C1274.0,839.6 1274.6,853.2 1275.2,857.5C1276.0,863.6 1276.9,867.0 1277.8,869.1C1279.1,872.4 1280.4,873.0 1281.7,875.6C1283.0,878.3 1284.2,882.5 1285.5,886.0C1286.8,889.4 1288.1,893.4 1289.4,896.4C1290.7,899.3 1292.0,903.4 1293.3,904.1C1294.6,904.9 1295.9,905.4 1297.2,905.4C1299.8,905.4 1302.4,905.2 1305.0,905.2C1306.7,905.2 1308.4,905.2 1310.2,905.4C1311.0,905.5 1311.9,908.0 1312.8,909.3C1313.9,911.0 1315.0,914.5 1316.1,914.5C1316.8,914.5 1317.6,911.8 1318.3,909.3C1319.0,906.9 1319.7,899.6 1320.4,896.4C1321.1,893.1 1321.7,888.6 1322.4,888.6C1323.0,888.6 1323.6,891.4 1324.2,893.8C1324.9,896.4 1325.6,903.6 1326.3,906.7C1326.9,909.4 1327.5,913.2 1328.1,913.2C1329.0,913.2 1329.9,911.7 1330.7,910.6C1331.8,909.3 1332.8,905.8 1333.8,905.4C1334.7,905.1 1335.6,904.9 1336.4,904.9C1337.5,904.9 1338.7,907.8 1339.8,909.3C1341.1,911.1 1342.4,913.5 1343.7,915.0C1345.0,916.5 1346.3,918.5 1347.6,918.9C1348.9,919.3 1350.2,919.7 1351.5,919.7C1352.7,919.7 1354.0,919.2 1355.3,918.4C1355.9,918.0 1356.5,915.1 1357.2,911.9C1357.7,909.1 1358.2,898.9 1358.7,896.4C1359.3,893.4 1359.9,890.8 1360.5,890.6C1361.4,890.5 1362.2,890.4 1363.1,890.4C1364.2,890.4 1365.4,891.9 1366.5,891.9C1367.3,891.9 1368.2,891.9 1369.1,891.7C1369.7,891.6 1370.3,885.1 1370.9,880.8C1371.5,876.5 1372.1,867.1 1372.7,865.3C1373.4,863.1 1374.1,861.6 1374.8,861.4C1376.1,861.0 1377.4,861.1 1378.7,860.9C1379.9,860.6 1381.2,860.6 1382.5,860.1C1383.4,859.8 1384.3,856.5 1385.1,854.9C1386.0,853.3 1386.9,850.5 1387.7,850.5C1388.4,850.5 1389.1,852.5 1389.8,854.9C1390.4,857.0 1391.0,866.0 1391.6,870.4C1392.3,875.4 1393.0,883.4 1393.7,883.4C1394.5,883.4 1395.4,882.0 1396.3,880.8C1397.1,879.6 1398.0,875.3 1398.9,874.3C1399.7,873.4 1400.6,872.5 1401.5,872.5C1402.2,872.5 1403.0,874.9 1403.8,876.9C1404.6,879.2 1405.5,885.1 1406.4,888.6C1407.1,891.4 1407.8,892.9 1408.5,896.4C1409.1,899.3 1409.7,906.3 1410.3,909.3C1411.0,912.7 1411.6,916.8 1412.3,917.1C1413.2,917.4 1414.1,917.6 1414.9,917.6C1416.0,917.6 1417.2,915.8 1418.3,915.0C1419.2,914.4 1420.0,913.2 1420.9,913.2C1421.7,913.2 1422.4,915.2 1423.2,917.1C1423.9,918.8 1424.6,924.0 1425.3,926.1C1425.9,928.0 1426.5,930.5 1427.1,930.5C1427.6,930.5 1428.1,927.9 1428.7,926.1C1429.3,924.1 1429.9,919.8 1430.5,918.4C1431.3,916.4 1432.2,914.5 1433.1,914.5C1434.2,914.5 1435.3,915.3 1436.4,915.8C1437.5,916.2 1438.5,917.1 1439.5,917.1C1440.4,917.1 1441.3,915.0 1442.1,913.2C1442.8,911.8 1443.5,907.8 1444.2,906.7C1445.1,905.4 1445.9,904.1 1446.8,904.1C1447.7,904.1 1448.5,905.9 1449.4,906.7C1450.4,907.7 1451.5,909.1 1452.5,909.3C1453.8,909.6 1455.1,909.8 1456.4,909.8C1457.7,909.8 1459.0,909.8 1460.3,909.8C1461.6,909.8 1462.9,908.4 1464.2,908.0C1465.4,907.6 1466.7,907.2 1468.0,907.2C1469.6,907.2 1471.1,907.5 1472.7,908.0C1473.6,908.3 1474.4,909.8 1475.3,911.9C1475.9,913.3 1476.5,918.6 1477.1,921.0C1477.8,923.6 1478.5,927.4 1479.2,927.4C1479.9,927.4 1480.7,926.2 1481.5,925.4C1482.5,924.3 1483.4,922.0 1484.3,921.0C1485.4,919.8 1486.4,918.9 1487.5,918.4C1488.8,917.7 1490.1,917.7 1491.3,917.1C1492.4,916.5 1493.4,915.3 1494.5,914.0C1495.6,912.5 1496.7,910.4 1497.8,908.0C1498.9,905.6 1500.1,901.7 1501.2,898.9C1502.1,896.8 1502.9,893.7 1503.8,893.0C1504.6,892.3 1505.3,891.7 1506.1,891.7C1507.0,891.7 1507.8,893.8 1508.7,895.0C1509.7,896.4 1510.6,898.4 1511.5,899.5C1512.6,900.6 1513.6,901.4 1514.7,902.0C1515.8,902.7 1516.9,903.6 1518.0,903.6C1518.6,903.6 1519.2,902.4 1519.8,900.2C1520.3,898.7 1520.7,882.6 1521.1,870.4C1521.6,858.3 1522.0,832.0 1522.4,823.8C1523.0,814.1 1523.5,805.7 1524.0,804.4C1524.6,802.8 1525.2,801.8 1525.8,801.8C1526.6,801.8 1527.4,804.3 1528.1,805.7C1529.0,807.2 1529.9,809.6 1530.7,810.9C1531.8,812.5 1533.0,813.4 1534.1,814.7C1535.2,816.0 1536.3,816.8 1537.5,818.6C1538.5,820.3 1539.5,822.9 1540.6,826.4C1541.4,829.3 1542.3,835.3 1543.2,839.4C1543.9,842.6 1544.5,848.4 1545.2,848.4C1545.8,848.4 1546.4,843.8 1547.0,839.4C1547.7,834.9 1548.3,822.6 1548.9,813.5C1549.5,803.0 1550.2,788.4 1550.9,779.8C1551.8,769.0 1552.7,759.6 1553.5,753.9C1554.4,748.1 1555.2,742.6 1556.1,740.9C1556.8,739.6 1557.5,738.3 1558.2,738.3C1558.9,738.3 1559.6,739.5 1560.3,740.9C1561.0,742.5 1561.8,748.8 1562.6,753.9C1563.5,759.5 1564.3,768.1 1565.2,774.6C1566.0,781.0 1566.9,788.4 1567.8,792.7C1568.9,798.4 1570.0,802.0 1571.1,805.7C1572.2,809.1 1573.2,813.0 1574.2,814.7C1575.4,816.6 1576.5,818.6 1577.6,818.6C1578.5,818.6 1579.3,816.2 1580.2,814.7C1581.1,813.3 1581.9,810.5 1582.8,809.6C1583.7,808.7 1584.5,807.8 1585.4,807.8C1586.3,807.8 1587.1,809.1 1588.0,810.9C1588.8,812.4 1589.5,818.2 1590.3,823.8C1591.0,828.8 1591.7,835.8 1592.4,844.5C1593.0,852.2 1593.6,864.4 1594.2,875.6C1594.7,885.2 1595.2,902.8 1595.8,906.7C1596.4,911.3 1597.0,915.0 1597.6,915.0C1598.1,915.0 1598.6,910.7 1599.1,906.7C1599.7,902.0 1600.3,887.6 1600.9,880.8C1601.5,874.0 1602.1,866.1 1602.7,864.0C1603.3,861.9 1603.9,860.1 1604.5,860.1C1605.1,860.1 1605.7,864.7 1606.3,867.9C1607.1,871.9 1607.9,879.6 1608.7,883.4C1609.5,887.6 1610.4,893.2 1611.2,893.2C1611.8,893.2 1612.5,888.4 1613.1,883.4C1613.8,877.7 1614.4,857.2 1615.1,844.5C1616.0,828.6 1616.9,809.7 1617.7,797.9C1618.6,786.1 1619.4,774.7 1620.3,769.4C1621.0,765.1 1621.7,761.2 1622.4,760.3C1623.0,759.6 1623.6,759.0 1624.2,759.0C1624.8,759.0 1625.4,760.8 1626.0,762.9C1626.7,765.3 1627.4,775.3 1628.1,782.4C1628.8,789.4 1629.5,800.1 1630.2,805.7C1630.9,811.2 1631.5,816.5 1632.2,818.6C1633.1,821.3 1634.0,822.1 1634.8,823.8C1635.7,825.5 1636.5,826.0 1637.4,829.0C1638.1,831.3 1638.8,840.6 1639.5,849.7C1639.9,855.9 1640.4,868.4 1640.9,875.6C1641.4,883.7 1641.9,891.5 1642.4,896.4C1643.0,902.0 1643.6,906.9 1644.2,909.3C1644.9,912.1 1645.6,914.2 1646.3,915.0C1647.4,916.2 1648.4,917.1 1649.4,917.1C1650.6,917.1 1651.7,916.4 1652.8,915.8C1653.8,915.2 1654.9,913.7 1655.9,912.4C1656.9,911.1 1658.0,909.4 1659.0,908.0C1659.9,906.9 1660.7,905.2 1661.6,904.9C1662.7,904.5 1663.8,904.1 1665.0,904.1C1667.1,904.1 1669.3,904.7 1671.5,904.9C1673.2,905.1 1674.9,905.1 1676.6,905.4C1677.5,905.6 1678.4,906.8 1679.2,908.0C1679.9,909.0 1680.6,911.6 1681.3,913.2C1681.9,914.6 1682.5,917.1 1683.1,917.1C1683.8,917.1 1684.5,915.6 1685.2,914.5C1686.0,913.2 1686.7,909.7 1687.5,908.8C1688.2,908.0 1688.9,907.2 1689.6,907.2C1690.3,907.2 1691.0,908.3 1691.7,909.3C1692.4,910.4 1693.2,913.9 1694.0,915.8C1694.7,917.5 1695.4,920.4 1696.1,920.4C1696.7,920.4 1697.3,918.7 1697.9,917.1C1698.4,915.7 1698.9,910.6 1699.4,909.3C1700.2,907.3 1701.0,905.6 1701.8,905.4C1703.7,905.0 1705.7,904.9 1707.7,904.9C1709.9,904.9 1712.0,905.1 1714.2,905.4C1715.3,905.6 1716.4,907.0 1717.6,908.8C1718.3,910.0 1719.1,914.8 1719.9,917.1C1720.6,919.1 1721.3,922.2 1722.0,922.2C1722.6,922.2 1723.2,920.2 1723.8,918.4C1724.3,916.8 1724.8,912.1 1725.3,910.6C1726.1,908.3 1726.9,906.2 1727.7,905.9C1728.5,905.6 1729.4,905.4 1730.3,905.4C1731.4,905.4 1732.5,906.8 1733.6,907.2C1734.7,907.6 1735.7,908.0 1736.7,908.0C1737.6,908.0 1738.5,906.0 1739.3,905.4C1740.3,904.8 1741.2,904.1 1742.2,904.1C1743.2,904.1 1744.2,905.0 1745.3,905.4C1746.6,905.9 1747.9,906.7 1749.2,906.7C1750.9,906.7 1752.6,906.3 1754.3,906.2C1756.9,906.1 1759.5,906.1 1762.1,905.9C1763.8,905.8 1765.6,904.9 1767.3,904.9C1769.9,904.9 1772.5,904.9 1775.1,904.9C1778.5,904.9 1782.0,904.7 1785.4,904.6C1788.5,904.6 1791.5,904.6 1794.5,904.4C1795.2,904.3 1795.9,903.8 1796.6,902.8C1797.2,902.0 1797.8,895.4 1798.4,892.5C1798.9,890.0 1799.4,886.4 1800.0,886.0C1800.5,885.5 1801.0,885.2 1801.5,885.2C1802.0,885.2 1802.5,888.4 1803.1,891.2C1803.6,893.9 1804.1,901.3 1804.6,904.1C1805.1,907.0 1805.7,910.0 1806.2,910.6C1806.8,911.3 1807.4,911.9 1808.0,911.9C1808.7,911.9 1809.4,909.7 1810.0,908.8C1810.9,907.6 1811.8,905.8 1812.6,905.4C1813.3,905.1 1814.0,904.9 1814.7,904.9C1815.3,904.9 1815.9,906.8 1816.5,908.0C1817.2,909.4 1817.9,912.0 1818.6,913.2C1819.5,914.7 1820.3,915.8 1821.2,916.5C1822.2,917.4 1823.3,917.9 1824.3,918.4C1825.3,918.9 1826.4,919.1 1827.4,919.7C1828.4,920.2 1829.3,921.3 1830.3,922.2C1831.1,923.1 1832.0,924.8 1832.8,924.8C1833.7,924.8 1834.6,924.8 1835.4,924.8C1836.5,924.8 1837.5,922.7 1838.5,922.2C1839.4,921.9 1840.3,921.5 1841.1,921.5C1841.8,921.5 1842.5,922.6 1843.2,923.5C1844.0,924.6 1844.8,927.6 1845.5,928.7C1846.1,929.5 1846.6,930.5 1847.1,930.5C1847.7,930.5 1848.3,928.5 1848.9,926.1C1849.3,924.4 1849.8,917.4 1850.2,914.5C1850.7,911.0 1851.2,907.0 1851.8,906.2C1852.4,905.3 1853.0,904.6 1853.6,904.6C1854.2,904.6 1854.8,906.4 1855.4,908.0C1856.0,909.6 1856.6,914.7 1857.2,917.1C1857.9,919.7 1858.6,923.5 1859.3,923.5C1859.9,923.5 1860.5,922.3 1861.1,921.0C1861.6,919.8 1862.1,914.8 1862.6,913.2C1863.4,910.7 1864.2,908.9 1865.0,908.0C1865.9,906.9 1866.9,906.3 1867.8,905.9C1869.3,905.4 1870.8,905.1 1872.2,904.9C1874.4,904.6 1876.5,904.4 1878.7,904.4C1882.2,904.4 1885.6,904.4 1889.1,904.4C1892.5,904.4 1896.0,904.6 1899.4,904.6C1902.9,904.6 1906.3,904.6 1909.8,904.4C1911.1,904.3 1912.4,904.0 1913.7,903.6C1914.5,903.3 1915.4,902.7 1916.3,902.0C1917.1,901.4 1918.0,900.3 1918.9,899.5" fill="none" stroke="#6fc6ab" stroke-width="1.5"/></g>
<g clip-path="url(#cd)"><path d="M155.2,955.9C155.5,945.3 155.8,928.8 156.2,924.1C156.7,915.9 157.3,911.5 157.9,909.4C158.7,906.4 159.5,904.2 160.3,904.0C161.8,903.6 163.3,903.5 164.8,903.5C168.0,903.3 171.3,903.2 174.6,903.2C176.7,903.2 178.7,903.4 180.8,903.7C181.6,903.9 182.4,904.6 183.2,905.7C183.8,906.5 184.4,910.0 184.9,911.9C185.6,913.9 186.3,917.2 186.9,917.5C188.1,918.0 189.4,918.2 190.6,918.2C192.1,918.2 193.6,918.0 195.0,917.5C195.6,917.3 196.2,914.9 196.8,913.1C197.3,911.2 197.9,906.7 198.5,905.7C199.3,904.2 200.1,903.0 200.9,903.0C201.8,903.0 202.7,903.7 203.6,904.5C204.8,905.4 205.9,908.8 207.1,911.9C208.2,914.7 209.2,918.7 210.3,922.9C211.1,926.1 211.9,929.7 212.8,934.0C213.2,936.1 213.6,938.1 214.0,941.4C214.7,946.9 215.4,961.4 216.1,968.9C216.9,978.2 217.8,989.6 218.7,992.2C219.3,994.3 220.0,996.1 220.7,996.1C221.6,996.1 222.5,994.2 223.3,992.2C224.4,989.6 225.6,981.3 226.7,974.1C227.5,969.1 228.2,962.3 229.0,955.9C229.6,951.3 230.1,950.1 230.7,941.4C230.9,938.8 231.0,927.7 231.2,924.1C231.5,916.9 231.9,911.4 232.2,909.4C232.7,906.4 233.2,904.0 233.7,904.0C234.2,904.0 234.6,906.4 235.1,909.4C235.5,911.4 235.8,918.9 236.1,924.1C236.5,929.5 236.8,937.9 237.1,941.4C237.4,944.8 237.8,946.8 238.1,948.8C238.6,951.6 239.1,954.4 239.6,955.6C240.2,957.4 240.9,958.7 241.5,959.1C242.6,959.7 243.7,960.1 244.7,960.1C245.7,960.1 246.7,959.8 247.7,959.3C248.2,959.1 248.7,958.0 249.2,956.1C249.4,955.2 249.7,951.8 249.9,948.8C250.1,946.8 250.2,944.8 250.4,941.4C250.6,937.9 250.7,927.3 250.9,924.1C251.3,916.3 251.7,911.0 252.1,909.4C252.9,906.1 253.8,904.1 254.6,904.0C256.6,903.6 258.7,903.5 260.7,903.5C263.2,903.5 265.7,903.5 268.1,903.5C270.2,903.5 272.2,903.6 274.3,904.0C274.8,904.1 275.4,906.7 276.0,909.4C276.5,911.7 277.0,919.2 277.5,921.7C278.2,925.5 278.9,928.8 279.7,929.6C279.9,929.8 280.1,930.0 280.3,930.0C280.8,930.0 281.4,925.8 281.9,923.4C282.6,920.5 283.2,917.9 283.9,913.5C284.6,909.1 285.2,902.4 285.9,893.7C286.4,886.7 286.9,875.9 287.5,863.9C287.9,853.3 288.4,839.8 288.9,824.2C289.2,813.1 289.5,797.7 289.9,784.5C290.2,771.2 290.5,752.3 290.8,744.8C291.2,737.2 291.5,730.8 291.8,728.9C292.2,726.7 292.6,724.9 293.0,724.9C293.5,724.9 294.0,726.6 294.4,728.9C294.9,731.2 295.3,745.8 295.8,754.7C296.5,767.4 297.1,782.7 297.8,794.4C298.5,806.2 299.1,816.3 299.8,826.2C300.4,836.0 301.1,846.3 301.8,854.0C302.4,861.7 303.1,868.3 303.8,873.8C304.4,879.2 305.1,885.3 305.7,887.7C306.7,891.3 307.7,893.7 308.7,894.6C309.8,895.7 311.0,896.6 312.1,896.6C312.7,896.6 313.4,893.2 314.1,889.7C314.6,886.9 315.1,877.0 315.7,873.8C316.3,869.8 317.0,866.0 317.6,865.5C318.6,864.7 319.6,864.3 320.6,864.3C321.6,864.3 322.6,865.5 323.6,866.9C324.6,868.2 325.6,871.7 326.6,875.8C327.2,878.5 327.9,884.0 328.6,887.7C329.6,893.3 330.5,900.1 331.5,903.6C332.5,907.1 333.5,910.2 334.5,911.5C335.8,913.4 337.2,915.1 338.5,915.1C339.8,915.1 341.1,913.9 342.5,913.1C343.8,912.4 345.1,911.3 346.4,910.5C347.6,909.8 348.8,909.0 350.0,908.5C350.6,908.3 351.2,908.0 351.8,908.0C352.4,908.0 353.0,911.9 353.6,914.5C354.4,917.8 355.2,925.6 356.0,927.4C356.8,929.5 357.7,931.3 358.6,931.3C359.7,931.3 360.8,930.4 361.9,929.5C363.0,928.7 364.0,926.9 365.0,924.8C366.1,922.6 367.3,916.9 368.4,914.5C369.2,912.8 369.9,910.6 370.7,910.6C371.4,910.6 372.1,910.8 372.8,911.1C373.7,911.5 374.5,916.9 375.4,918.4C376.4,920.2 377.5,921.3 378.5,922.2C379.6,923.3 380.7,924.0 381.9,924.8C383.0,925.7 384.1,926.5 385.2,927.4C386.3,928.3 387.3,929.5 388.3,930.5C389.4,931.6 390.4,933.9 391.4,933.9C392.0,933.9 392.5,930.5 393.0,927.4C393.5,924.4 394.0,914.4 394.6,911.9C395.2,908.5 395.9,905.5 396.6,905.4C399.2,905.0 401.8,904.9 404.4,904.9C406.8,904.9 409.2,905.4 411.7,905.4C414.2,905.4 416.8,905.1 419.4,904.9C422.0,904.7 424.6,904.4 427.2,904.4C429.8,904.4 432.4,904.4 435.0,904.4C438.0,904.4 441.0,905.2 444.0,905.2C446.1,905.2 448.3,904.1 450.4,904.1C452.1,904.1 453.8,904.9 455.5,904.9C458.6,904.9 461.6,904.9 464.6,904.9C465.2,904.9 465.8,907.1 466.4,909.3C466.9,911.2 467.5,920.0 468.0,921.0C468.8,922.6 469.7,923.5 470.6,923.5C471.6,923.5 472.6,923.2 473.7,922.8C474.8,922.3 475.9,921.6 477.1,919.7C477.7,918.6 478.3,911.3 478.9,909.3C479.6,907.0 480.2,904.7 480.9,904.6C482.8,904.4 484.7,904.4 486.6,904.4C490.1,904.4 493.5,904.6 497.0,904.6C500.9,904.7 504.8,904.7 508.6,904.9C509.9,905.0 511.2,906.5 512.5,907.2C513.6,907.8 514.6,908.8 515.6,908.8C517.6,908.8 519.6,908.0 521.6,908.0C523.3,908.0 525.1,908.4 526.8,908.8C527.9,909.0 529.0,909.8 530.2,909.8C531.0,909.8 531.9,907.9 532.8,907.2C533.6,906.5 534.5,905.4 535.3,905.4C536.8,905.4 538.3,906.0 539.7,906.2C541.9,906.5 544.1,907.0 546.2,907.0C547.9,907.0 549.7,906.6 551.4,906.2C552.7,905.9 554.0,904.6 555.3,904.6C556.1,904.6 557.0,905.3 557.9,906.2C558.5,906.8 559.1,910.8 559.7,911.9C560.4,913.1 561.1,914.5 561.8,914.5C563.1,914.5 564.4,912.7 565.6,911.9C566.9,911.1 568.2,910.4 569.5,909.8C570.8,909.3 572.1,908.5 573.4,908.5C574.5,908.5 575.5,908.6 576.5,908.8C577.2,908.9 577.9,911.9 578.6,913.2C579.3,914.5 580.0,916.5 580.7,916.5C581.4,916.5 582.2,914.5 583.0,913.2C583.9,911.8 584.7,908.8 585.6,908.0C586.7,906.9 587.8,906.1 589.0,905.9C590.7,905.6 592.4,905.8 594.1,905.4C594.8,905.3 595.5,902.3 596.2,898.9C596.8,896.0 597.4,885.3 598.0,880.8C598.6,876.3 599.2,871.2 599.8,869.9C600.4,868.8 600.9,867.9 601.4,867.9C602.0,867.9 602.6,869.8 603.2,871.7C603.8,873.7 604.4,880.5 605.0,883.4C605.7,886.7 606.4,889.8 607.1,891.2C608.4,893.7 609.7,894.5 611.0,895.8C612.7,897.6 614.4,898.8 616.2,900.2C617.9,901.7 619.6,903.5 621.4,904.6C622.6,905.5 623.9,906.7 625.2,906.7C627.0,906.7 628.7,906.4 630.4,906.2C631.7,906.0 633.0,905.4 634.3,905.4C635.0,905.4 635.7,906.7 636.4,908.0C637.0,909.1 637.6,913.0 638.2,914.5C638.9,916.2 639.6,918.4 640.3,918.4C641.0,918.4 641.8,916.8 642.6,915.8C643.5,914.5 644.5,911.9 645.4,910.6C646.5,909.2 647.5,907.8 648.5,907.2C650.3,906.3 652.0,905.6 653.7,905.4C656.3,905.1 658.9,904.9 661.5,904.9C662.4,904.9 663.2,906.4 664.1,907.2C664.8,907.9 665.5,909.3 666.2,909.3C666.9,909.3 667.7,908.6 668.5,908.0C669.4,907.4 670.2,905.7 671.1,905.4C672.6,904.9 674.2,904.6 675.8,904.6C677.5,904.6 679.2,904.9 680.9,905.4C681.8,905.7 682.7,907.0 683.5,908.0C684.4,909.0 685.2,911.4 686.1,911.4C687.0,911.4 687.8,909.0 688.7,908.0C689.6,907.0 690.4,905.7 691.3,905.4C693.0,904.9 694.8,904.6 696.5,904.6C697.8,904.6 699.1,904.9 700.4,905.4C701.0,905.7 701.6,908.1 702.2,910.6C702.7,912.8 703.2,920.5 703.7,922.2C704.6,925.1 705.5,927.0 706.3,927.4C707.8,928.2 709.3,928.7 710.7,928.7C711.8,928.7 712.8,928.5 713.8,928.0C714.4,927.7 714.9,923.0 715.4,919.7C715.8,916.9 716.2,910.9 716.7,909.3C717.3,907.0 717.9,904.9 718.5,904.9C719.2,904.9 719.9,904.9 720.6,904.9C721.3,904.9 722.1,907.7 722.9,909.3C724.0,911.6 725.1,914.6 726.3,917.1C727.4,919.6 728.5,923.0 729.6,924.3C730.7,925.6 731.7,926.9 732.8,926.9C734.4,926.9 736.1,924.8 737.8,922.2C738.8,920.7 739.8,915.0 740.9,911.9C741.7,909.3 742.6,905.4 743.5,904.9C744.3,904.4 745.2,904.1 746.1,904.1C746.8,904.1 747.4,906.4 748.1,908.0C749.0,910.0 749.9,915.8 750.7,915.8C751.4,915.8 752.1,915.8 752.8,915.8C753.7,915.8 754.5,912.2 755.4,910.6C756.4,908.7 757.5,906.2 758.5,905.4C759.8,904.4 761.1,904.0 762.4,903.6C764.5,903.0 766.7,902.5 768.9,902.3C771.0,902.2 773.2,902.0 775.3,902.0C776.6,902.0 777.9,902.3 779.2,902.8C780.1,903.1 780.9,905.8 781.8,908.0C782.7,910.2 783.5,914.5 784.4,917.1C785.4,920.1 786.5,923.2 787.5,924.8C788.6,926.6 789.8,928.7 790.9,928.7C792.0,928.7 793.1,928.4 794.2,928.0C795.3,927.5 796.3,925.4 797.4,923.5C798.2,922.0 799.1,919.7 800.0,917.1C800.6,915.0 801.3,910.7 802.0,909.3C802.8,907.8 803.6,906.2 804.4,906.2C805.0,906.2 805.7,907.6 806.4,908.8C807.1,910.0 807.8,913.8 808.5,915.0C809.3,916.4 810.1,917.9 810.8,917.9C811.7,917.9 812.6,915.4 813.4,914.5C814.5,913.3 815.7,911.4 816.8,911.4C817.7,911.4 818.5,911.6 819.4,911.9C820.7,912.3 822.0,914.2 823.3,915.0C824.6,915.8 825.9,917.1 827.1,917.1C828.4,917.1 829.7,916.9 831.0,916.5C831.9,916.3 832.8,913.9 833.6,911.9C834.3,910.3 835.0,906.0 835.7,905.4C836.6,904.6 837.4,904.1 838.3,904.1C839.2,904.1 840.0,905.9 840.9,907.2C841.7,908.4 842.4,911.9 843.2,911.9C844.1,911.9 844.9,909.9 845.8,908.8C846.7,907.6 847.5,905.2 848.4,904.9C849.9,904.4 851.5,904.1 853.1,904.1C856.1,904.1 859.1,904.1 862.1,904.1C864.7,904.1 867.3,904.4 869.9,904.9C870.8,905.1 871.6,905.6 872.5,906.7C873.0,907.4 873.5,910.2 874.0,913.2C874.4,915.2 874.7,920.8 875.1,922.2C875.6,924.3 876.1,926.1 876.6,926.1C877.4,926.1 878.2,925.6 879.0,924.8C879.7,924.2 880.3,920.6 881.0,919.7C881.8,918.6 882.6,917.6 883.4,917.6C884.1,917.6 884.8,919.1 885.4,921.0C886.0,922.5 886.6,929.1 887.2,932.6C887.8,935.7 888.3,940.3 888.8,941.2C889.2,941.9 889.7,942.5 890.1,942.5C890.4,942.5 890.8,940.0 891.1,937.8C891.6,935.0 892.0,926.8 892.4,922.2C893.0,916.9 893.5,909.5 894.0,908.0C894.6,906.2 895.2,904.9 895.8,904.9C896.5,904.9 897.2,906.5 897.9,908.0C898.5,909.4 899.1,914.1 899.7,915.8C900.6,918.2 901.4,921.0 902.3,921.0C903.6,921.0 904.9,919.5 906.2,918.4C907.5,917.2 908.8,914.9 910.0,913.2C911.2,911.7 912.3,909.6 913.4,908.8C914.5,908.0 915.5,907.2 916.5,907.2C917.8,907.2 919.1,908.9 920.4,909.3C921.3,909.5 922.1,909.8 923.0,909.8C923.9,909.8 924.7,908.0 925.6,907.2C926.5,906.4 927.3,904.9 928.2,904.9C929.1,904.9 929.9,905.6 930.8,906.2C931.6,906.8 932.5,909.8 933.4,909.8C934.2,909.8 935.1,909.6 936.0,909.3C936.8,909.0 937.7,907.2 938.5,906.7C939.7,906.1 940.8,905.4 941.9,905.4C942.8,905.4 943.6,906.4 944.5,908.0C945.1,909.1 945.7,917.5 946.3,922.2C946.8,925.7 947.2,932.1 947.6,932.6C948.3,933.5 949.0,933.9 949.7,933.9C950.1,933.9 950.6,928.4 951.0,924.8C951.4,921.3 951.8,914.2 952.3,911.9C953.0,908.3 953.7,904.9 954.4,904.9C955.1,904.9 955.9,905.5 956.7,906.2C957.5,906.9 958.4,909.7 959.3,910.6C960.1,911.5 961.0,912.4 961.9,912.4C963.2,912.4 964.5,910.3 965.8,909.3C967.0,908.3 968.3,906.8 969.6,906.2C971.4,905.4 973.1,904.6 974.8,904.6C975.7,904.6 976.5,906.5 977.4,908.0C978.3,909.5 979.1,915.0 980.0,915.0C981.7,915.0 983.5,914.5 985.2,914.5C986.5,914.5 987.8,914.6 989.1,915.0C989.8,915.2 990.5,919.0 991.1,922.2C991.7,925.1 992.3,931.6 993.0,935.2C993.4,937.8 993.8,941.9 994.2,941.9C994.7,941.9 995.1,941.2 995.5,940.4C996.1,939.2 996.8,932.9 997.4,930.0C998.2,925.9 999.1,921.8 1000.0,919.7C1001.1,916.9 1002.2,914.9 1003.3,914.0C1004.6,912.9 1005.9,911.9 1007.2,911.9C1008.2,911.9 1009.3,913.2 1010.3,914.0C1011.4,914.8 1012.6,917.1 1013.7,917.1C1014.5,917.1 1015.4,917.1 1016.3,917.1C1017.1,917.1 1018.0,914.5 1018.9,913.2C1020.0,911.5 1021.1,909.1 1022.2,908.0C1023.6,906.6 1025.1,904.9 1026.5,904.9C1028.2,904.9 1029.9,905.1 1031.7,905.4C1032.5,905.6 1033.4,906.9 1034.2,909.3C1034.7,910.5 1035.1,914.9 1035.5,919.7C1036.0,924.2 1036.4,930.7 1036.8,941.4C1036.9,944.1 1037.0,951.8 1037.1,953.1C1037.5,958.3 1038.0,959.9 1038.4,960.9C1039.0,962.2 1039.6,963.2 1040.2,963.2C1041.0,963.2 1041.8,962.6 1042.6,962.0C1043.4,961.4 1044.1,959.9 1044.9,958.5C1045.7,957.1 1046.4,955.4 1047.2,953.1C1047.7,951.5 1048.3,949.2 1048.8,946.9C1049.2,945.3 1049.5,943.8 1049.9,941.4C1050.2,939.4 1050.5,934.6 1050.8,932.6C1051.6,927.7 1052.4,924.0 1053.2,922.2C1054.2,920.0 1055.2,918.3 1056.3,917.9C1057.3,917.4 1058.3,917.1 1059.4,917.1C1060.5,917.1 1061.6,918.8 1062.8,919.7C1063.9,920.5 1065.0,922.2 1066.1,922.2C1066.9,922.2 1067.7,921.0 1068.5,919.7C1069.1,918.5 1069.8,913.4 1070.5,911.9C1071.4,910.0 1072.2,908.0 1073.1,908.0C1073.8,908.0 1074.5,909.4 1075.2,910.6C1076.0,911.9 1076.7,915.9 1077.5,917.1C1078.4,918.4 1079.2,919.7 1080.1,919.7C1080.8,919.7 1081.5,916.5 1082.2,914.5C1082.8,912.7 1083.4,909.0 1084.0,908.0C1084.9,906.6 1085.7,905.6 1086.6,905.4C1088.1,905.1 1089.7,904.9 1091.2,904.9C1092.5,904.9 1093.8,905.3 1095.1,905.9C1096.0,906.3 1096.9,908.8 1097.7,909.8C1098.4,910.6 1099.1,911.9 1099.8,911.9C1100.7,911.9 1101.5,909.7 1102.4,908.8C1103.4,907.7 1104.5,905.9 1105.5,905.9C1107.2,905.9 1108.9,906.0 1110.7,906.2C1112.4,906.3 1114.1,907.6 1115.8,908.0C1117.1,908.3 1118.4,908.8 1119.7,908.8C1120.6,908.8 1121.5,907.4 1122.3,906.7C1123.2,906.1 1124.1,904.9 1124.9,904.9C1128.8,904.7 1132.7,904.6 1136.6,904.6C1140.9,904.6 1145.2,904.6 1149.5,904.6C1153.4,904.6 1157.3,904.6 1161.2,904.6C1162.5,904.6 1163.8,904.5 1165.1,904.1C1165.8,903.9 1166.5,901.0 1167.2,898.9C1167.8,897.2 1168.4,894.0 1169.0,892.5C1169.7,890.7 1170.3,888.6 1171.0,888.6C1171.8,888.6 1172.6,889.2 1173.4,889.9C1174.2,890.6 1175.1,893.5 1176.0,895.0C1177.1,897.0 1178.2,898.5 1179.3,900.2C1180.5,902.0 1181.6,904.0 1182.7,905.4C1183.7,906.7 1184.8,908.5 1185.8,908.8C1187.1,909.1 1188.4,909.3 1189.7,909.3C1191.0,909.3 1192.3,908.0 1193.6,907.2C1194.9,906.5 1196.2,905.0 1197.5,904.9C1199.2,904.7 1200.9,904.8 1202.6,904.6C1203.5,904.6 1204.4,904.3 1205.2,903.6C1205.8,903.1 1206.4,897.7 1207.0,891.2C1207.6,885.6 1208.1,863.9 1208.6,854.9C1209.0,847.4 1209.5,839.0 1209.9,836.8C1210.2,835.0 1210.6,833.4 1210.9,833.4C1211.3,833.4 1211.6,835.0 1212.0,836.8C1212.4,839.0 1212.8,847.4 1213.3,854.9C1213.8,863.9 1214.3,885.3 1214.8,891.2C1215.3,897.0 1215.9,902.0 1216.4,902.8C1217.2,904.2 1218.1,904.9 1219.0,904.9C1220.9,904.9 1222.8,904.9 1224.7,904.9C1225.5,904.9 1226.4,906.1 1227.2,906.7C1228.3,907.5 1229.3,909.3 1230.4,909.3C1231.2,909.3 1232.1,908.5 1233.0,907.2C1233.6,906.2 1234.3,901.3 1235.0,896.4C1235.9,890.1 1236.8,875.2 1237.6,865.3C1238.5,855.3 1239.3,843.5 1240.2,836.8C1241.1,830.1 1241.9,823.9 1242.8,821.2C1243.8,818.0 1244.9,815.6 1245.9,814.7C1247.0,813.8 1248.2,812.9 1249.3,812.9C1250.3,812.9 1251.3,813.7 1252.4,814.7C1253.1,815.5 1253.8,818.6 1254.5,821.2C1255.3,824.5 1256.2,829.5 1257.0,834.2C1257.9,838.9 1258.8,844.4 1259.6,849.7C1260.3,854.0 1261.0,860.0 1261.7,862.7C1262.3,865.0 1262.9,867.9 1263.5,867.9C1264.0,867.9 1264.6,864.2 1265.1,860.1C1265.6,856.0 1266.1,839.3 1266.6,831.6C1267.2,823.9 1267.7,814.6 1268.2,812.1C1268.8,809.3 1269.4,807.0 1270.0,807.0C1270.6,807.0 1271.2,809.3 1271.8,812.1C1272.3,814.6 1272.8,824.7 1273.4,831.6C1274.0,839.6 1274.6,853.2 1275.2,857.5C1276.0,863.6 1276.9,867.0 1277.8,869.1C1279.1,872.4 1280.4,873.0 1281.7,875.6C1283.0,878.3 1284.2,882.5 1285.5,886.0C1286.8,889.4 1288.1,893.4 1289.4,896.4C1290.7,899.3 1292.0,903.4 1293.3,904.1C1294.6,904.9 1295.9,905.4 1297.2,905.4C1299.8,905.4 1302.4,905.2 1305.0,905.2C1306.7,905.2 1308.4,905.2 1310.2,905.4C1311.0,905.5 1311.9,908.0 1312.8,909.3C1313.9,911.0 1315.0,914.5 1316.1,914.5C1316.8,914.5 1317.6,911.8 1318.3,909.3C1319.0,906.9 1319.7,899.6 1320.4,896.4C1321.1,893.1 1321.7,888.6 1322.4,888.6C1323.0,888.6 1323.6,891.4 1324.2,893.8C1324.9,896.4 1325.6,903.6 1326.3,906.7C1326.9,909.4 1327.5,913.2 1328.1,913.2C1329.0,913.2 1329.9,911.7 1330.7,910.6C1331.8,909.3 1332.8,905.8 1333.8,905.4C1334.7,905.1 1335.6,904.9 1336.4,904.9C1337.5,904.9 1338.7,907.8 1339.8,909.3C1341.1,911.1 1342.4,913.5 1343.7,915.0C1345.0,916.5 1346.3,918.5 1347.6,918.9C1348.9,919.3 1350.2,919.7 1351.5,919.7C1352.7,919.7 1354.0,919.2 1355.3,918.4C1355.9,918.0 1356.5,915.1 1357.2,911.9C1357.7,909.1 1358.2,898.9 1358.7,896.4C1359.3,893.4 1359.9,890.8 1360.5,890.6C1361.4,890.5 1362.2,890.4 1363.1,890.4C1364.2,890.4 1365.4,891.9 1366.5,891.9C1367.3,891.9 1368.2,891.9 1369.1,891.7C1369.7,891.6 1370.3,885.1 1370.9,880.8C1371.5,876.5 1372.1,867.1 1372.7,865.3C1373.4,863.1 1374.1,861.6 1374.8,861.4C1376.1,861.0 1377.4,861.1 1378.7,860.9C1379.9,860.6 1381.2,860.6 1382.5,860.1C1383.4,859.8 1384.3,856.5 1385.1,854.9C1386.0,853.3 1386.9,850.5 1387.7,850.5C1388.4,850.5 1389.1,852.5 1389.8,854.9C1390.4,857.0 1391.0,866.0 1391.6,870.4C1392.3,875.4 1393.0,883.4 1393.7,883.4C1394.5,883.4 1395.4,882.0 1396.3,880.8C1397.1,879.6 1398.0,875.3 1398.9,874.3C1399.7,873.4 1400.6,872.5 1401.5,872.5C1402.2,872.5 1403.0,874.9 1403.8,876.9C1404.6,879.2 1405.5,885.1 1406.4,888.6C1407.1,891.4 1407.8,892.9 1408.5,896.4C1409.1,899.3 1409.7,906.3 1410.3,909.3C1411.0,912.7 1411.6,916.8 1412.3,917.1C1413.2,917.4 1414.1,917.6 1414.9,917.6C1416.0,917.6 1417.2,915.8 1418.3,915.0C1419.2,914.4 1420.0,913.2 1420.9,913.2C1421.7,913.2 1422.4,915.2 1423.2,917.1C1423.9,918.8 1424.6,924.0 1425.3,926.1C1425.9,928.0 1426.5,930.5 1427.1,930.5C1427.6,930.5 1428.1,927.9 1428.7,926.1C1429.3,924.1 1429.9,919.8 1430.5,918.4C1431.3,916.4 1432.2,914.5 1433.1,914.5C1434.2,914.5 1435.3,915.3 1436.4,915.8C1437.5,916.2 1438.5,917.1 1439.5,917.1C1440.4,917.1 1441.3,915.0 1442.1,913.2C1442.8,911.8 1443.5,907.8 1444.2,906.7C1445.1,905.4 1445.9,904.1 1446.8,904.1C1447.7,904.1 1448.5,905.9 1449.4,906.7C1450.4,907.7 1451.5,909.1 1452.5,909.3C1453.8,909.6 1455.1,909.8 1456.4,909.8C1457.7,909.8 1459.0,909.8 1460.3,909.8C1461.6,909.8 1462.9,908.4 1464.2,908.0C1465.4,907.6 1466.7,907.2 1468.0,907.2C1469.6,907.2 1471.1,907.5 1472.7,908.0C1473.6,908.3 1474.4,909.8 1475.3,911.9C1475.9,913.3 1476.5,918.6 1477.1,921.0C1477.8,923.6 1478.5,927.4 1479.2,927.4C1479.9,927.4 1480.7,926.2 1481.5,925.4C1482.5,924.3 1483.4,922.0 1484.3,921.0C1485.4,919.8 1486.4,918.9 1487.5,918.4C1488.8,917.7 1490.1,917.7 1491.3,917.1C1492.4,916.5 1493.4,915.3 1494.5,914.0C1495.6,912.5 1496.7,910.4 1497.8,908.0C1498.9,905.6 1500.1,901.7 1501.2,898.9C1502.1,896.8 1502.9,893.7 1503.8,893.0C1504.6,892.3 1505.3,891.7 1506.1,891.7C1507.0,891.7 1507.8,893.8 1508.7,895.0C1509.7,896.4 1510.6,898.4 1511.5,899.5C1512.6,900.6 1513.6,901.4 1514.7,902.0C1515.8,902.7 1516.9,903.6 1518.0,903.6C1518.6,903.6 1519.2,902.4 1519.8,900.2C1520.3,898.7 1520.7,882.6 1521.1,870.4C1521.6,858.3 1522.0,832.0 1522.4,823.8C1523.0,814.1 1523.5,805.7 1524.0,804.4C1524.6,802.8 1525.2,801.8 1525.8,801.8C1526.6,801.8 1527.4,804.3 1528.1,805.7C1529.0,807.2 1529.9,809.6 1530.7,810.9C1531.8,812.5 1533.0,813.4 1534.1,814.7C1535.2,816.0 1536.3,816.8 1537.5,818.6C1538.5,820.3 1539.5,822.9 1540.6,826.4C1541.4,829.3 1542.3,835.3 1543.2,839.4C1543.9,842.6 1544.5,848.4 1545.2,848.4C1545.8,848.4 1546.4,843.8 1547.0,839.4C1547.7,834.9 1548.3,822.6 1548.9,813.5C1549.5,803.0 1550.2,788.4 1550.9,779.8C1551.8,769.0 1552.7,759.6 1553.5,753.9C1554.4,748.1 1555.2,742.6 1556.1,740.9C1556.8,739.6 1557.5,738.3 1558.2,738.3C1558.9,738.3 1559.6,739.5 1560.3,740.9C1561.0,742.5 1561.8,748.8 1562.6,753.9C1563.5,759.5 1564.3,768.1 1565.2,774.6C1566.0,781.0 1566.9,788.4 1567.8,792.7C1568.9,798.4 1570.0,802.0 1571.1,805.7C1572.2,809.1 1573.2,813.0 1574.2,814.7C1575.4,816.6 1576.5,818.6 1577.6,818.6C1578.5,818.6 1579.3,816.2 1580.2,814.7C1581.1,813.3 1581.9,810.5 1582.8,809.6C1583.7,808.7 1584.5,807.8 1585.4,807.8C1586.3,807.8 1587.1,809.1 1588.0,810.9C1588.8,812.4 1589.5,818.2 1590.3,823.8C1591.0,828.8 1591.7,835.8 1592.4,844.5C1593.0,852.2 1593.6,864.4 1594.2,875.6C1594.7,885.2 1595.2,902.8 1595.8,906.7C1596.4,911.3 1597.0,915.0 1597.6,915.0C1598.1,915.0 1598.6,910.7 1599.1,906.7C1599.7,902.0 1600.3,887.6 1600.9,880.8C1601.5,874.0 1602.1,866.1 1602.7,864.0C1603.3,861.9 1603.9,860.1 1604.5,860.1C1605.1,860.1 1605.7,864.7 1606.3,867.9C1607.1,871.9 1607.9,879.6 1608.7,883.4C1609.5,887.6 1610.4,893.2 1611.2,893.2C1611.8,893.2 1612.5,888.4 1613.1,883.4C1613.8,877.7 1614.4,857.2 1615.1,844.5C1616.0,828.6 1616.9,809.7 1617.7,797.9C1618.6,786.1 1619.4,774.7 1620.3,769.4C1621.0,765.1 1621.7,761.2 1622.4,760.3C1623.0,759.6 1623.6,759.0 1624.2,759.0C1624.8,759.0 1625.4,760.8 1626.0,762.9C1626.7,765.3 1627.4,775.3 1628.1,782.4C1628.8,789.4 1629.5,800.1 1630.2,805.7C1630.9,811.2 1631.5,816.5 1632.2,818.6C1633.1,821.3 1634.0,822.1 1634.8,823.8C1635.7,825.5 1636.5,826.0 1637.4,829.0C1638.1,831.3 1638.8,840.6 1639.5,849.7C1639.9,855.9 1640.4,868.4 1640.9,875.6C1641.4,883.7 1641.9,891.5 1642.4,896.4C1643.0,902.0 1643.6,906.9 1644.2,909.3C1644.9,912.1 1645.6,914.2 1646.3,915.0C1647.4,916.2 1648.4,917.1 1649.4,917.1C1650.6,917.1 1651.7,916.4 1652.8,915.8C1653.8,915.2 1654.9,913.7 1655.9,912.4C1656.9,911.1 1658.0,909.4 1659.0,908.0C1659.9,906.9 1660.7,905.2 1661.6,904.9C1662.7,904.5 1663.8,904.1 1665.0,904.1C1667.1,904.1 1669.3,904.7 1671.5,904.9C1673.2,905.1 1674.9,905.1 1676.6,905.4C1677.5,905.6 1678.4,906.8 1679.2,908.0C1679.9,909.0 1680.6,911.6 1681.3,913.2C1681.9,914.6 1682.5,917.1 1683.1,917.1C1683.8,917.1 1684.5,915.6 1685.2,914.5C1686.0,913.2 1686.7,909.7 1687.5,908.8C1688.2,908.0 1688.9,907.2 1689.6,907.2C1690.3,907.2 1691.0,908.3 1691.7,909.3C1692.4,910.4 1693.2,913.9 1694.0,915.8C1694.7,917.5 1695.4,920.4 1696.1,920.4C1696.7,920.4 1697.3,918.7 1697.9,917.1C1698.4,915.7 1698.9,910.6 1699.4,909.3C1700.2,907.3 1701.0,905.6 1701.8,905.4C1703.7,905.0 1705.7,904.9 1707.7,904.9C1709.9,904.9 1712.0,905.1 1714.2,905.4C1715.3,905.6 1716.4,907.0 1717.6,908.8C1718.3,910.0 1719.1,914.8 1719.9,917.1C1720.6,919.1 1721.3,922.2 1722.0,922.2C1722.6,922.2 1723.2,920.2 1723.8,918.4C1724.3,916.8 1724.8,912.1 1725.3,910.6C1726.1,908.3 1726.9,906.2 1727.7,905.9C1728.5,905.6 1729.4,905.4 1730.3,905.4C1731.4,905.4 1732.5,906.8 1733.6,907.2C1734.7,907.6 1735.7,908.0 1736.7,908.0C1737.6,908.0 1738.5,906.0 1739.3,905.4C1740.3,904.8 1741.2,904.1 1742.2,904.1C1743.2,904.1 1744.2,905.0 1745.3,905.4C1746.6,905.9 1747.9,906.7 1749.2,906.7C1750.9,906.7 1752.6,906.3 1754.3,906.2C1756.9,906.1 1759.5,906.1 1762.1,905.9C1763.8,905.8 1765.6,904.9 1767.3,904.9C1769.9,904.9 1772.5,904.9 1775.1,904.9C1778.5,904.9 1782.0,904.7 1785.4,904.6C1788.5,904.6 1791.5,904.6 1794.5,904.4C1795.2,904.3 1795.9,903.8 1796.6,902.8C1797.2,902.0 1797.8,895.4 1798.4,892.5C1798.9,890.0 1799.4,886.4 1800.0,886.0C1800.5,885.5 1801.0,885.2 1801.5,885.2C1802.0,885.2 1802.5,888.4 1803.1,891.2C1803.6,893.9 1804.1,901.3 1804.6,904.1C1805.1,907.0 1805.7,910.0 1806.2,910.6C1806.8,911.3 1807.4,911.9 1808.0,911.9C1808.7,911.9 1809.4,909.7 1810.0,908.8C1810.9,907.6 1811.8,905.8 1812.6,905.4C1813.3,905.1 1814.0,904.9 1814.7,904.9C1815.3,904.9 1815.9,906.8 1816.5,908.0C1817.2,909.4 1817.9,912.0 1818.6,913.2C1819.5,914.7 1820.3,915.8 1821.2,916.5C1822.2,917.4 1823.3,917.9 1824.3,918.4C1825.3,918.9 1826.4,919.1 1827.4,919.7C1828.4,920.2 1829.3,921.3 1830.3,922.2C1831.1,923.1 1832.0,924.8 1832.8,924.8C1833.7,924.8 1834.6,924.8 1835.4,924.8C1836.5,924.8 1837.5,922.7 1838.5,922.2C1839.4,921.9 1840.3,921.5 1841.1,921.5C1841.8,921.5 1842.5,922.6 1843.2,923.5C1844.0,924.6 1844.8,927.6 1845.5,928.7C1846.1,929.5 1846.6,930.5 1847.1,930.5C1847.7,930.5 1848.3,928.5 1848.9,926.1C1849.3,924.4 1849.8,917.4 1850.2,914.5C1850.7,911.0 1851.2,907.0 1851.8,906.2C1852.4,905.3 1853.0,904.6 1853.6,904.6C1854.2,904.6 1854.8,906.4 1855.4,908.0C1856.0,909.6 1856.6,914.7 1857.2,917.1C1857.9,919.7 1858.6,923.5 1859.3,923.5C1859.9,923.5 1860.5,922.3 1861.1,921.0C1861.6,919.8 1862.1,914.8 1862.6,913.2C1863.4,910.7 1864.2,908.9 1865.0,908.0C1865.9,906.9 1866.9,906.3 1867.8,905.9C1869.3,905.4 1870.8,905.1 1872.2,904.9C1874.4,904.6 1876.5,904.4 1878.7,904.4C1882.2,904.4 1885.6,904.4 1889.1,904.4C1892.5,904.4 1896.0,904.6 1899.4,904.6C1902.9,904.6 1906.3,904.6 1909.8,904.4C1911.1,904.3 1912.4,904.0 1913.7,903.6C1914.5,903.3 1915.4,902.7 1916.3,902.0C1917.1,901.4 1918.0,900.3 1918.9,899.5" fill="none" stroke="#ea4a5e" stroke-width="1.5"/></g>
<line x1="876.9" x2="876.9" y1="722" y2="1015" stroke="#8e9093" stroke-width="1.7" stroke-dasharray="6.6 3.9"/>
<circle cx="876.7" cy="937.2" r="6.1" fill="#fff" stroke="#e3bb4e" stroke-width="2.7"/>
<circle cx="876.7" cy="926.2" r="6.1" fill="#fff" stroke="#62b39c" stroke-width="2.7"/>
<g fill="#a9a9a9"><path transform="translate(1755,945) scale(0.08299)" d="M215,150 L235,185 Q300,150 370,185 L392,150 L410,200 Q490,215 500,275 Q505,290 480,290 L455,290 Q465,360 420,400 Q445,430 440,470 Q442,500 405,515 L400,590 Q395,605 370,605 L335,605 Q322,600 322,570 L318,540 L305,540 L300,580 Q298,605 270,605 L250,605 Q228,595 228,570 L215,570 L165,600 L160,592 L205,560 L222,530 Q180,510 180,470 Q182,430 215,400 Q150,360 160,290 L130,290 Q100,290 108,265 Q120,215 200,200 Z"/><text x="1804.8" y="984.2" font-size="27" font-weight="700" textLength="104.6" lengthAdjust="spacingAndGlyphs">coinglass</text></g>
<line x1="152" x2="1922.5" y1="960.8" y2="960.8" stroke="#cdcdcd" stroke-width="2.0" stroke-dasharray="5.8 3"/>
<rect x="88.2" y="944.8" width="59.2" height="31.2" rx="4.5" fill="#000"/>
<text x="98.1" y="966.3" font-size="17.8" fill="#fff" stroke="#fff" stroke-width="0.45" textLength="36.6" lengthAdjust="spacingAndGlyphs">-0.01</text>
<rect x="1926.8" y="944.8" width="52.8" height="31.2" rx="4.5" fill="#000"/>
<text x="1937" y="966.3" font-size="17.8" fill="#fff" stroke="#fff" stroke-width="0.45" textLength="32" lengthAdjust="spacingAndGlyphs">0.02</text>
<rect x="155.5" y="1044" width="1770.5" height="87.29999999999995" fill="url(#fg)"/>
<path d="M155.6,1089.1L161.5,1090.3L168.1,1089.5L175.2,1084.5L181.0,1074.7L184.9,1072.7L188.0,1059.8L192.0,1066.9L196.6,1069.6L201.7,1066.9L206.4,1070.0L210.3,1072.0L216.2,1070.8L222.0,1069.2L229.8,1070.0L236.9,1068.8L242.3,1073.9L247.4,1079.8L251.3,1079.4L255.2,1083.3L258.4,1081.3L261.9,1081.7L265.0,1077.8L270.9,1074.7L276.7,1076.6L282.6,1077.4L288.4,1076.6L294.3,1079.4L300.2,1079.8L306.0,1077.4L311.9,1079.4L317.7,1080.9L323.6,1079.8L329.5,1082.5L335.3,1084.5L341.2,1086.4L346.2,1090.3L352.9,1089.5L358.8,1085.6L364.6,1090.3L370.5,1090.3L378.3,1089.5L383.0,1090.3L388.0,1087.6L393.1,1082.5L399.8,1083.3L405.6,1084.5L411.5,1088.4L419.3,1089.5L427.1,1090.3L434.9,1088.4L442.7,1089.5L450.5,1092.3L456.4,1091.5L460.3,1090.3L465.0,1092.3L472.0,1089.5L477.9,1088.4L485.7,1087.6L490.4,1083.3L496.2,1083.3L503.3,1085.2L511.1,1085.2L517.0,1084.5L520.9,1082.5L526.7,1083.3L532.6,1088.4L538.4,1090.3L546.2,1091.1L554.1,1090.3L561.9,1091.1L569.7,1090.7L581.4,1090.3L589.2,1092.7L597.0,1091.9L604.8,1089.5L610.7,1087.6L616.6,1086.4L620.5,1084.5L625.5,1080.5L631.4,1080.5L635.3,1083.7L642.0,1084.5L647.8,1085.6L651.7,1090.3L655.6,1086.4L661.5,1090.3L667.3,1087.2L673.2,1085.6L681.0,1087.6L686.9,1087.2L692.7,1086.4L698.6,1087.6L704.5,1087.2L710.3,1087.6L716.2,1087.6L724.0,1091.5L729.8,1091.1L735.7,1090.3L741.6,1092.7L747.4,1091.5L751.3,1090.3L757.2,1088.4L763.0,1088.8L768.9,1087.6L774.8,1088.8L780.6,1092.3L786.5,1094.2L791.6,1099.3L796.2,1098.1L800.2,1096.2L804.1,1099.3L809.9,1098.9L817.7,1099.3L825.5,1101.2L831.4,1102.0L835.3,1100.9L841.2,1102.0L849.0,1102.0L856.8,1102.4L864.6,1101.6L870.5,1100.1L876.3,1101.2L882.2,1101.2L888.0,1099.3L893.9,1100.1L901.7,1099.7L909.5,1099.3L917.1,1101.0L924.6,1099.4L932.1,1098.6L939.6,1101.0L947.1,1101.7L954.6,1099.7L962.2,1100.0L969.7,1102.5L977.2,1102.0L984.7,1100.2L992.2,1101.7L999.8,1103.6L1007.3,1102.2L1014.8,1101.1L1022.3,1103.4L1029.8,1104.4L1037.4,1102.4L1044.9,1102.4L1052.4,1104.9L1059.9,1104.8L1067.4,1102.9L1075.0,1104.0L1082.5,1106.2L1090.0,1105.0L1097.5,1103.7L1105.0,1105.7L1112.6,1107.0L1120.1,1105.2L1127.6,1104.9L1135.1,1107.3L1142.6,1107.5L1150.2,1105.5L1157.7,1106.4L1165.2,1108.7L1172.7,1107.8L1180.2,1106.2L1187.8,1108.1L1195.3,1109.7L1202.8,1108.0L1210.3,1108.7L1219.3,1109.5L1231.0,1106.7L1240.8,1108.3L1252.5,1108.7L1268.1,1108.7L1279.8,1107.1L1295.5,1106.3L1311.1,1107.5L1318.9,1109.8L1330.6,1111.0L1346.2,1111.0L1358.0,1110.2L1365.8,1110.6L1373.6,1112.6L1385.3,1111.4L1400.9,1111.8L1408.8,1113.8L1413.4,1114.9L1418.5,1113.0L1428.3,1112.6L1436.1,1113.0L1442.0,1111.4L1449.8,1112.6L1459.5,1111.4L1467.3,1110.2L1479.1,1110.6L1492.7,1109.8L1502.5,1111.4L1514.2,1111.4L1525.9,1110.6L1541.6,1110.2L1551.3,1109.5L1561.1,1109.8L1570.9,1107.5L1580.6,1107.9L1592.3,1106.7L1604.1,1106.7L1615.8,1107.5L1623.6,1107.1L1631.4,1105.9L1643.1,1107.5L1654.8,1106.7L1664.6,1106.3L1674.4,1107.1L1686.1,1108.3L1697.8,1109.5L1713.4,1109.1L1721.2,1106.7L1729.1,1104.4L1736.9,1103.6L1744.7,1102.0L1749.4,1103.6L1758.4,1101.2L1766.2,1103.2L1775.9,1102.0L1783.8,1103.6L1793.5,1104.8L1803.3,1104.0L1815.0,1105.9L1822.8,1104.4L1830.6,1106.7L1846.2,1105.9L1854.1,1104.8L1863.8,1103.2L1873.6,1105.2L1885.3,1106.7L1893.1,1107.5L1900.9,1105.9L1912.7,1106.3L1925.9,1106.7L1925.9,1131.3L155.6,1131.3Z" fill="url(#fa)"/>
<path d="M155.6,1089.1L161.5,1090.3L168.1,1089.5L175.2,1084.5L181.0,1074.7L184.9,1072.7L188.0,1059.8L192.0,1066.9L196.6,1069.6L201.7,1066.9L206.4,1070.0L210.3,1072.0L216.2,1070.8L222.0,1069.2L229.8,1070.0L236.9,1068.8L242.3,1073.9L247.4,1079.8L251.3,1079.4L255.2,1083.3L258.4,1081.3L261.9,1081.7L265.0,1077.8L270.9,1074.7L276.7,1076.6L282.6,1077.4L288.4,1076.6L294.3,1079.4L300.2,1079.8L306.0,1077.4L311.9,1079.4L317.7,1080.9L323.6,1079.8L329.5,1082.5L335.3,1084.5L341.2,1086.4L346.2,1090.3L352.9,1089.5L358.8,1085.6L364.6,1090.3L370.5,1090.3L378.3,1089.5L383.0,1090.3L388.0,1087.6L393.1,1082.5L399.8,1083.3L405.6,1084.5L411.5,1088.4L419.3,1089.5L427.1,1090.3L434.9,1088.4L442.7,1089.5L450.5,1092.3L456.4,1091.5L460.3,1090.3L465.0,1092.3L472.0,1089.5L477.9,1088.4L485.7,1087.6L490.4,1083.3L496.2,1083.3L503.3,1085.2L511.1,1085.2L517.0,1084.5L520.9,1082.5L526.7,1083.3L532.6,1088.4L538.4,1090.3L546.2,1091.1L554.1,1090.3L561.9,1091.1L569.7,1090.7L581.4,1090.3L589.2,1092.7L597.0,1091.9L604.8,1089.5L610.7,1087.6L616.6,1086.4L620.5,1084.5L625.5,1080.5L631.4,1080.5L635.3,1083.7L642.0,1084.5L647.8,1085.6L651.7,1090.3L655.6,1086.4L661.5,1090.3L667.3,1087.2L673.2,1085.6L681.0,1087.6L686.9,1087.2L692.7,1086.4L698.6,1087.6L704.5,1087.2L710.3,1087.6L716.2,1087.6L724.0,1091.5L729.8,1091.1L735.7,1090.3L741.6,1092.7L747.4,1091.5L751.3,1090.3L757.2,1088.4L763.0,1088.8L768.9,1087.6L774.8,1088.8L780.6,1092.3L786.5,1094.2L791.6,1099.3L796.2,1098.1L800.2,1096.2L804.1,1099.3L809.9,1098.9L817.7,1099.3L825.5,1101.2L831.4,1102.0L835.3,1100.9L841.2,1102.0L849.0,1102.0L856.8,1102.4L864.6,1101.6L870.5,1100.1L876.3,1101.2L882.2,1101.2L888.0,1099.3L893.9,1100.1L901.7,1099.7L909.5,1099.3L917.1,1101.0L924.6,1099.4L932.1,1098.6L939.6,1101.0L947.1,1101.7L954.6,1099.7L962.2,1100.0L969.7,1102.5L977.2,1102.0L984.7,1100.2L992.2,1101.7L999.8,1103.6L1007.3,1102.2L1014.8,1101.1L1022.3,1103.4L1029.8,1104.4L1037.4,1102.4L1044.9,1102.4L1052.4,1104.9L1059.9,1104.8L1067.4,1102.9L1075.0,1104.0L1082.5,1106.2L1090.0,1105.0L1097.5,1103.7L1105.0,1105.7L1112.6,1107.0L1120.1,1105.2L1127.6,1104.9L1135.1,1107.3L1142.6,1107.5L1150.2,1105.5L1157.7,1106.4L1165.2,1108.7L1172.7,1107.8L1180.2,1106.2L1187.8,1108.1L1195.3,1109.7L1202.8,1108.0L1210.3,1108.7L1219.3,1109.5L1231.0,1106.7L1240.8,1108.3L1252.5,1108.7L1268.1,1108.7L1279.8,1107.1L1295.5,1106.3L1311.1,1107.5L1318.9,1109.8L1330.6,1111.0L1346.2,1111.0L1358.0,1110.2L1365.8,1110.6L1373.6,1112.6L1385.3,1111.4L1400.9,1111.8L1408.8,1113.8L1413.4,1114.9L1418.5,1113.0L1428.3,1112.6L1436.1,1113.0L1442.0,1111.4L1449.8,1112.6L1459.5,1111.4L1467.3,1110.2L1479.1,1110.6L1492.7,1109.8L1502.5,1111.4L1514.2,1111.4L1525.9,1110.6L1541.6,1110.2L1551.3,1109.5L1561.1,1109.8L1570.9,1107.5L1580.6,1107.9L1592.3,1106.7L1604.1,1106.7L1615.8,1107.5L1623.6,1107.1L1631.4,1105.9L1643.1,1107.5L1654.8,1106.7L1664.6,1106.3L1674.4,1107.1L1686.1,1108.3L1697.8,1109.5L1713.4,1109.1L1721.2,1106.7L1729.1,1104.4L1736.9,1103.6L1744.7,1102.0L1749.4,1103.6L1758.4,1101.2L1766.2,1103.2L1775.9,1102.0L1783.8,1103.6L1793.5,1104.8L1803.3,1104.0L1815.0,1105.9L1822.8,1104.4L1830.6,1106.7L1846.2,1105.9L1854.1,1104.8L1863.8,1103.2L1873.6,1105.2L1885.3,1106.7L1893.1,1107.5L1900.9,1105.9L1912.7,1106.3L1925.9,1106.7" fill="none" stroke="url(#fl)" stroke-width="1.15"/>
<rect x="1913.4" y="1077.8" width="20.7" height="24.2" rx="5" fill="#3a3d48"/><line x1="1921.2" x2="1921.2" y1="1085.5" y2="1094.5" stroke="#9a9da6" stroke-width="1.4"/><line x1="1926.2" x2="1926.2" y1="1085.5" y2="1094.5" stroke="#9a9da6" stroke-width="1.4"/>
<rect x="799" y="1019.2" width="160" height="31.4" rx="4.5" fill="#000"/>
<text x="809.2" y="1041" font-size="17.8" fill="#fff" stroke="#fff" stroke-width="0.45" textLength="138" lengthAdjust="spacingAndGlyphs">6 Apr 2025, 13:30</text>
<rect x="909.8" y="991" width="301.6" height="155.5" rx="8" fill="#000" opacity="0.18" filter="url(#sh)"/>
<rect x="910.3" y="989.5" width="301.1" height="155.5" rx="8" fill="#080c11" stroke="#0a0e13" stroke-width="1"/>
<text x="932.3" y="1036" font-size="21" fill="#f4f5f7" stroke="#f4f5f7" stroke-width="0.2" textLength="167.7" lengthAdjust="spacingAndGlyphs">6 Apr 2025, 13:30</text>
<circle cx="939" cy="1075.4" r="6.2" fill="#e3bb4e" stroke="#eceef0" stroke-width="2.2"/>
<circle cx="939" cy="1107.5" r="6.2" fill="#62b39c" stroke="#eceef0" stroke-width="2.2"/>
<text x="952.5" y="1082.5" font-size="21.5" fill="#c9ced8" stroke="#c9ced8" stroke-width="0.25" textLength="92.5" lengthAdjust="spacingAndGlyphs">VET Price</text>
<text x="952.5" y="1114.9" font-size="21.5" fill="#c9ced8" stroke="#c9ced8" stroke-width="0.25" textLength="123.5" lengthAdjust="spacingAndGlyphs">OI-Weighted</text>
<text x="1187.7" y="1082.5" text-anchor="end" font-size="21.5" fill="#f4f5f7" stroke="#f4f5f7" stroke-width="0.4" textLength="64" lengthAdjust="spacingAndGlyphs">$0.022</text>
<text x="1187.7" y="1114.9" text-anchor="end" font-size="21.5" fill="#f4f5f7" stroke="#f4f5f7" stroke-width="0.4" textLength="80.2" lengthAdjust="spacingAndGlyphs">0.0042%</text>
</svg>

</main>
</div>
</body></html>
